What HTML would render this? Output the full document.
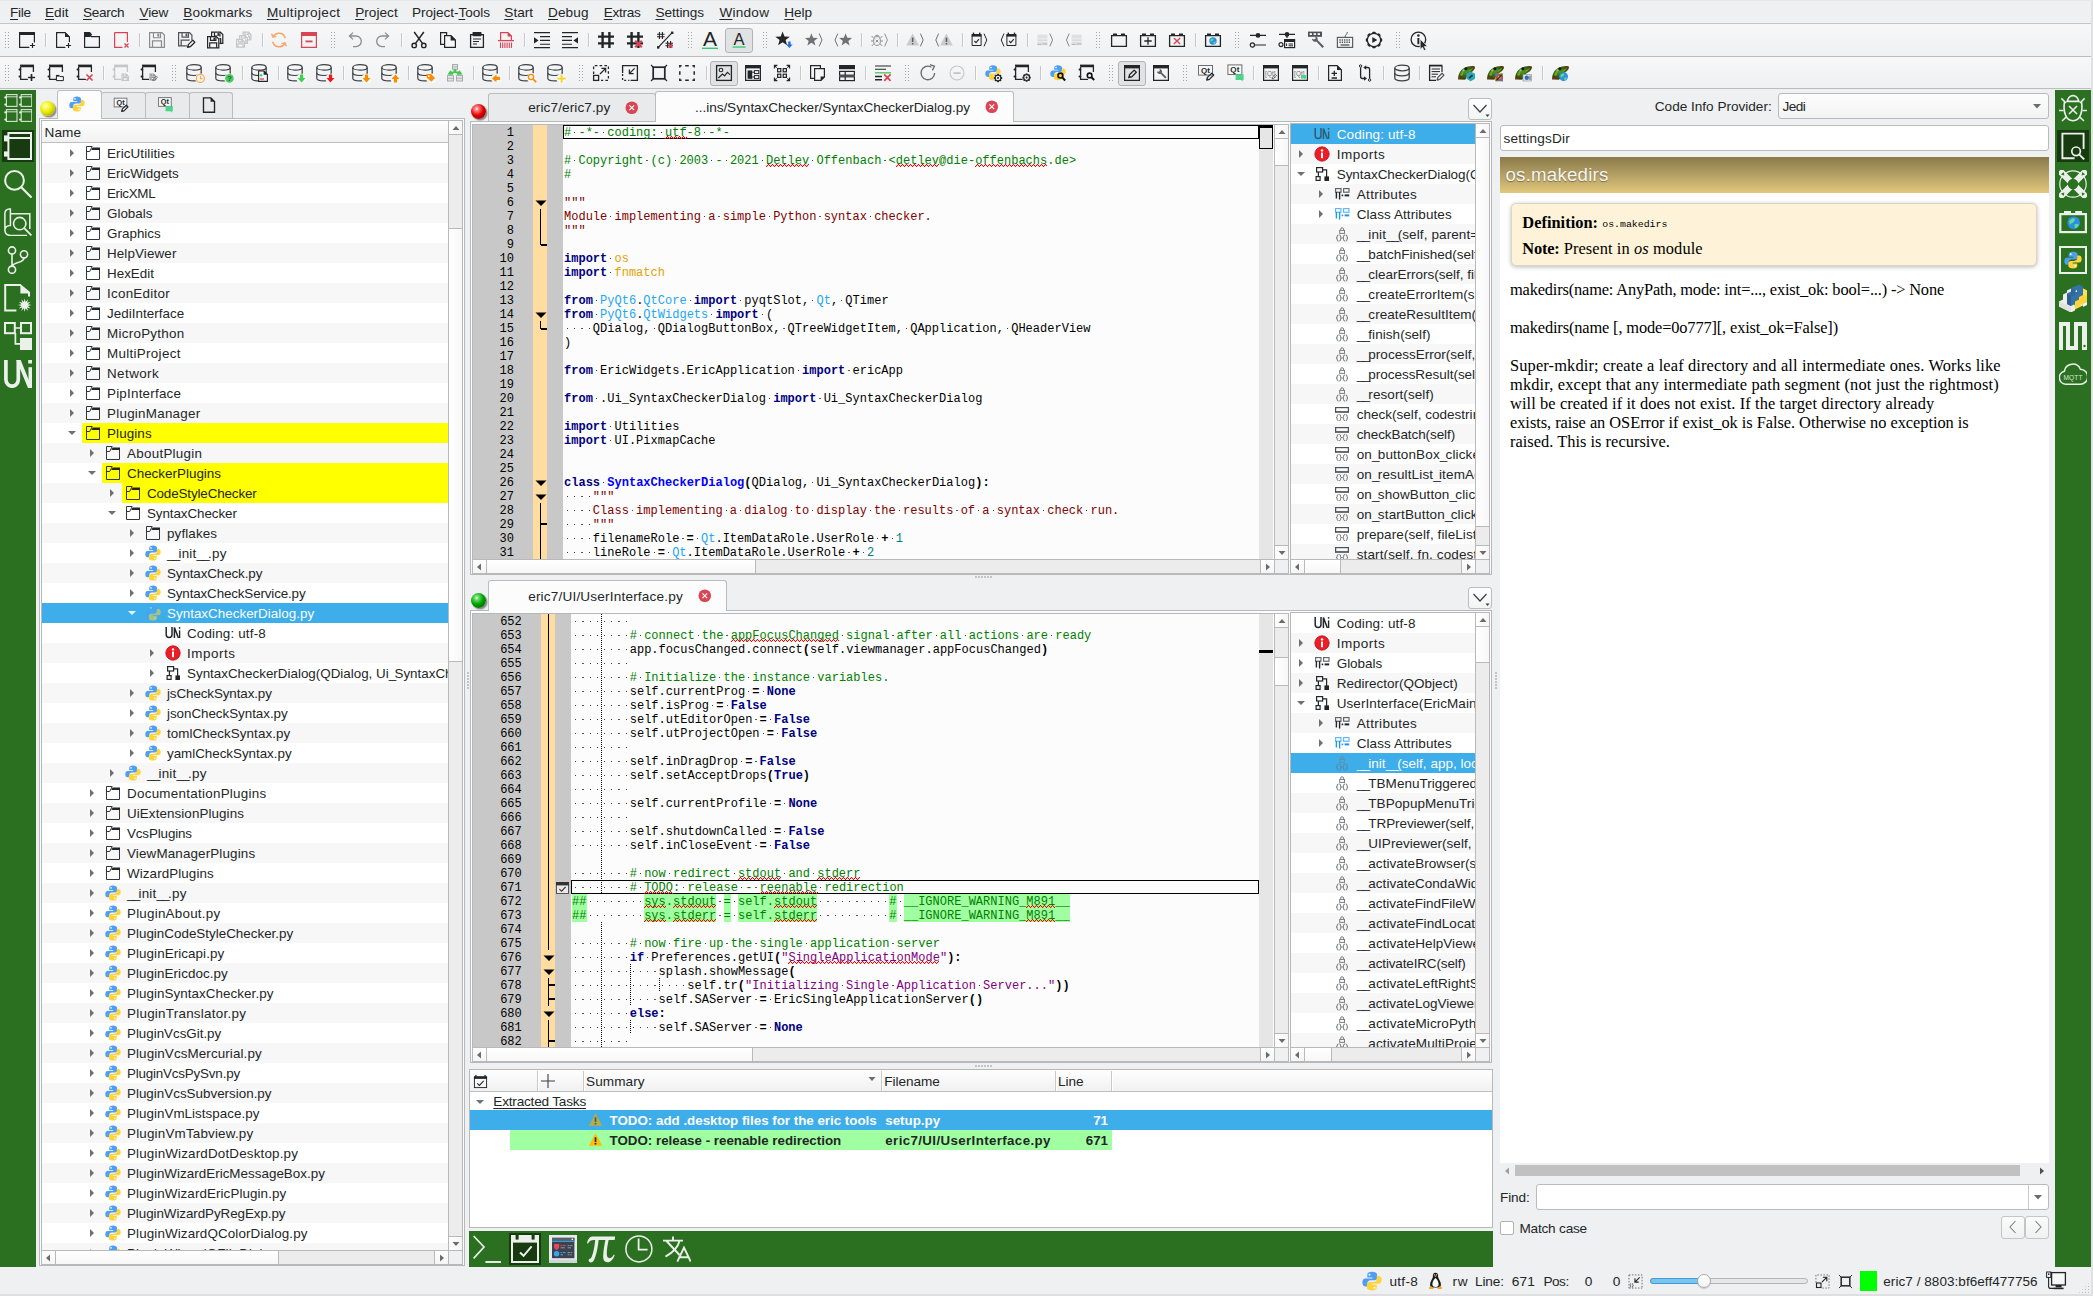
<!DOCTYPE html><html><head><meta charset="utf-8"><title>eric7</title><style>*{box-sizing:border-box;margin:0;padding:0}
html,body{width:2093px;height:1296px;overflow:hidden;background:#eff0f1}
body{position:relative;font-family:"Liberation Sans",sans-serif;font-size:13.33px;color:#232627;letter-spacing:.1px}
div,svg.i,span.a{position:absolute}
.t{white-space:pre;line-height:20px;height:20px;padding-top:.9px}
svg.i{overflow:visible}
.fr{border:1px solid #b9babb}
.mono{font-family:"Liberation Mono",monospace;font-size:12px;letter-spacing:.012px}
.cl{white-space:pre;height:14px;line-height:14px;padding-top:.9px;font-family:"Liberation Mono",monospace;font-size:12px;letter-spacing:.012px;color:#000}
.ln{white-space:pre;height:14px;line-height:14px;padding-top:.9px;font-family:"Liberation Mono",monospace;font-size:12px;letter-spacing:.012px;color:#000;text-align:right}
.c{color:#007f00}.k{color:#00007f;font-weight:bold}.d{color:#7f0000}.n{color:#007f7f}.s{color:#7f007f}
.q{color:#22a7f0}.o{color:#e5a100}.cn{color:#0000ff;font-weight:bold}.b{font-weight:bold}
.w{color:#777}
.hl{background:linear-gradient(#a0ffa0,#a0ffa0) no-repeat 0 0/100% 14px;padding-top:1.1px}
.alt{background:#f7f7f7}
.sel{background:#3daee9;color:#fcfcfc}
.yl{background:#ffff00}
.sbv{background:linear-gradient(90deg,#fdfdfd,#f4f4f4);border-left:1px solid #c4c4c4}
.sbh{background:linear-gradient(180deg,#fdfdfd,#f4f4f4);border-top:1px solid #c4c4c4}
.sl{background:#e8e8e8;border:1px solid #bcbcbc}
.ab{background:linear-gradient(180deg,#fff,#f3f3f3);border:1px solid #c4c4c4}
.hd{background:linear-gradient(180deg,#fefefe,#f1f1f1);border-bottom:1px solid #bfbfbf}
.sep{width:1px;height:16px;background:#cfd0d1}
.hdl{background-image:radial-gradient(circle at 1.5px 1.5px,#a4a5a6 .6px,transparent 1px);background-size:3px 3px}
.tab{border:1px solid #bcbdbe;border-bottom:none;border-radius:3px 3px 0 0;background:#e9eaeb}
.tab.on{background:#fcfcfc}
.gs{background:#2b7020}
.cl i{display:inline-block;width:7.212px;height:13px;vertical-align:top;background:radial-gradient(circle at 50% 49%,#3c3c3c .46px,transparent .86px)}
.u{letter-spacing:-1.7px}
u{text-decoration-thickness:1px;text-underline-offset:1.5px}
</style></head><body>
<svg width="0" height="0" style="position:absolute"><defs><radialGradient id="chg" cx=".45" cy=".42" r=".62"><stop offset="0" stop-color="#5c9623"/><stop offset=".5" stop-color="#366b1a"/><stop offset=".82" stop-color="#44400f"/><stop offset="1" stop-color="#6b4314"/></radialGradient><pattern id="zz" width="4" height="3" patternUnits="userSpaceOnUse"><path d="M0,2h1v1h-1zM1,1h1v1h-1zM2,0h1v1h-1zM3,1h1v1h-1z" fill="#ff0000"/><path d="M0,1h1v1h-1zM2,1h1v1h-1zM1,2h1v1h-1zM3,2h1v1h-1zM1,0h1v1h-1zM3,0h1v1h-1z" fill="#ff0000" opacity=".1"/></pattern><symbol id="newwin" viewBox="0 0 22 22"><path d="M3.6,3.6H18.4V18.4H3.6Z" fill="none" stroke="#232629" stroke-width="1.2" /><rect x="3" y="3" width="16" height="3" fill="#232629"/><circle cx="16.5" cy="16.5" r="3.6" fill="#f6f7f7"/><path d="M13.9,16.5H19.1M16.5,13.9V19.1" fill="none" stroke="#232629" stroke-width="1.2" /></symbol><symbol id="new" viewBox="0 0 22 22"><path d="M4.6,3.6H13L17.4,8V18.4H4.6Z" fill="none" stroke="#232629" stroke-width="1.2" /><path d="M13,3V8H18Z" fill="#232629"/><circle cx="16.5" cy="16.5" r="3.6" fill="#f6f7f7"/><path d="M13.9,16.5H19.1M16.5,13.9V19.1" fill="none" stroke="#232629" stroke-width="1.2" /></symbol><symbol id="open" viewBox="0 0 22 22"><path d="M3.6,5V18.4H18.4V7.6H10" fill="none" stroke="#232629" stroke-width="1.2" /><path d="M3,3H9L11,5.5L9.5,8H3Z" fill="#232629"/></symbol><symbol id="close" viewBox="0 0 22 22"><path d="M4.6,3.6H17.4V13M4.6,3.6V18.4H12.5" fill="none" stroke="#da4453" stroke-width="1.2" /><path d="M14.5,14.5L18.5,18.5M18.5,14.5L14.5,18.5" fill="none" stroke="#da4453" stroke-width="1.2" /></symbol><symbol id="save" viewBox="0 0 22 22"><path d="M3.6,3.6H16L18.4,6V18.4H3.6Z" fill="none" stroke="#8a8c8e" stroke-width="1.2" /><path d="M7.48,3.6V8.76H14.52V3.6" fill="none" stroke="#8a8c8e" stroke-width="1.2" /><rect x="11.32" y="4.5" width="1.92" height="3.2" fill="#8a8c8e"/><path d="M6.52,18.4V11.96H15.48V18.4" fill="none" stroke="#8a8c8e" stroke-width="1.2" /></symbol><symbol id="saveas" viewBox="0 0 22 22"><path d="M3.6,3.6H14.5L16.9,6V16.9H3.6Z" fill="none" stroke="#4d5257" stroke-width="1.2" /><path d="M7.0600000000000005,3.6V8.219999999999999H13.44V3.6" fill="none" stroke="#4d5257" stroke-width="1.2" /><rect x="10.54" y="4.5" width="1.74" height="2.9000000000000004" fill="#4d5257"/><path d="M6.1899999999999995,16.9V11.120000000000001H14.31V16.9" fill="none" stroke="#4d5257" stroke-width="1.2" /><circle cx="16" cy="15.5" r="4.2" fill="#f6f7f7"/><g transform="translate(11.5,10.5) scale(1.125)"><path d="M1,7L1.6,4.6L5.6,0.6L7.4,2.4L3.4,6.4Z" fill="none" stroke="#232629" stroke-width="1.1" stroke-linejoin="round"/><path d="M1,7L1.5,5L3,6.5Z" fill="#232629"/></g></symbol><symbol id="savecopy" viewBox="0 0 22 22"><path d="M7.6,3.2H16.4L18.799999999999997,5.6V14.4H7.6Z" fill="none" stroke="#232629" stroke-width="1.2" /><path d="M10.472000000000001,3.2V7.064H15.927999999999999V3.2" fill="none" stroke="#232629" stroke-width="1.2" /><rect x="13.448" y="4.1" width="1.488" height="2.4800000000000004" fill="#232629"/><path d="M9.728,14.4V9.544H16.672V14.4" fill="none" stroke="#232629" stroke-width="1.2" /><rect x="3" y="7" width="12.4" height="12.4" fill="#f6f7f7"/><path d="M3.6,7.6H12.4L14.8,10V18.799999999999997H3.6Z" fill="none" stroke="#232629" stroke-width="1.2" /><path d="M6.472,7.6V11.463999999999999H11.927999999999999V7.6" fill="none" stroke="#232629" stroke-width="1.2" /><rect x="9.448" y="8.5" width="1.488" height="2.4800000000000004" fill="#232629"/><path d="M5.728,18.799999999999997V13.944H12.672V18.799999999999997" fill="none" stroke="#232629" stroke-width="1.2" /></symbol><symbol id="saveall" viewBox="0 0 22 22"><path d="M10.1,3.2H15.5L17.9,5.6V11.0H10.1Z" fill="none" stroke="#c4c6c7" stroke-width="1.2" /><path d="M12.02,3.2V5.84H15.98V3.2" fill="none" stroke="#c4c6c7" stroke-width="1.2" /><rect x="14.18" y="4.1" width="1.08" height="1.8" fill="#c4c6c7"/><path d="M11.48,11.0V7.640000000000001H16.52V11.0" fill="none" stroke="#c4c6c7" stroke-width="1.2" /><rect x="6" y="6" width="9" height="9" fill="#f6f7f7"/><path d="M6.6,6.6H12L14.4,9V14.4H6.6Z" fill="none" stroke="#c4c6c7" stroke-width="1.2" /><path d="M8.52,6.6V9.24H12.48V6.6" fill="none" stroke="#c4c6c7" stroke-width="1.2" /><rect x="10.68" y="7.5" width="1.08" height="1.8" fill="#c4c6c7"/><path d="M7.98,14.4V11.040000000000001H13.02V14.4" fill="none" stroke="#c4c6c7" stroke-width="1.2" /><rect x="3" y="9.8" width="9" height="9" fill="#f6f7f7"/><path d="M3.6,10.4H9L11.4,12.8V18.2H3.6Z" fill="none" stroke="#c4c6c7" stroke-width="1.2" /><path d="M5.5200000000000005,10.4V13.040000000000001H9.48V10.4" fill="none" stroke="#c4c6c7" stroke-width="1.2" /><rect x="7.68" y="11.3" width="1.08" height="1.8" fill="#c4c6c7"/><path d="M4.98,18.2V14.840000000000002H10.02V18.2" fill="none" stroke="#c4c6c7" stroke-width="1.2" /></symbol><symbol id="reload" viewBox="0 0 22 22"><path d="M17.3,9.2A6.6,6.6 0 0 0 5.2,7.4M4.7,12.8A6.6,6.6 0 0 0 16.8,14.6" fill="none" stroke="#f5a56a" stroke-width="1.5" /><path d="M3.6,4.8L5,8.2L8.4,7.4" fill="none" stroke="#f5a56a" stroke-width="1.4" /><path d="M18.4,17.2L17,13.8L13.6,14.6" fill="none" stroke="#f5a56a" stroke-width="1.4" /></symbol><symbol id="winclose" viewBox="0 0 22 22"><path d="M3.6,3.6H18.4V18.4H3.6Z" fill="none" stroke="#da4453" stroke-width="1.2" /><rect x="3" y="3" width="16" height="4" fill="#da4453"/><rect x="7.5" y="11.5" width="7" height="1.8" fill="#da4453"/></symbol><symbol id="undo" viewBox="0 0 22 22"><path d="M6,7H12A5,5 0 0 1 12,17.6H9" fill="none" stroke="#8a8c8e" stroke-width="1.3" /><path d="M9,3.6L5.4,7L9,10.4" fill="none" stroke="#8a8c8e" stroke-width="1.3" /></symbol><symbol id="redo" viewBox="0 0 22 22"><path d="M16,7H10A5,5 0 0 0 10,17.6H13" fill="none" stroke="#8a8c8e" stroke-width="1.3" /><path d="M13,3.6L16.6,7L13,10.4" fill="none" stroke="#8a8c8e" stroke-width="1.3" /></symbol><symbol id="cut" viewBox="0 0 22 22"><path d="M6.2,3L14.6,14.6M15.8,3L7.4,14.6" fill="none" stroke="#232629" stroke-width="1.5" /><circle cx="6.2" cy="16.4" r="2.2" fill="none" stroke="#232629" stroke-width="1.4" /><circle cx="15.8" cy="16.4" r="2.2" fill="none" stroke="#232629" stroke-width="1.4" /></symbol><symbol id="copy" viewBox="0 0 22 22"><path d="M3.6,3.6H9.6V15.4H3.6Z" fill="none" stroke="#232629" stroke-width="1.2" /><path d="M7.6,6.6H14L18.4,11V18.4H7.6Z" fill="#f6f7f7" stroke="#232629" stroke-width="1.2"/><path d="M13.6,6V11.4H19Z" fill="#232629"/></symbol><symbol id="paste" viewBox="0 0 22 22"><path d="M4.6,5.6H17.4V18.4H4.6Z" fill="none" stroke="#232629" stroke-width="1.3" /><rect x="6.5" y="3" width="9" height="4.2" rx=".8" fill="#232629"/><path d="M7,10H15M7,12.5H13M7,15H11" fill="none" stroke="#232629" stroke-width="1" /></symbol><symbol id="clear" viewBox="0 0 22 22"><path d="M5.6,11V3.6H13L16.4,7V11" fill="none" stroke="#da4453" stroke-width="1.2" /><path d="M12.6,3V7.4H17Z" fill="#da4453"/><path d="M3,11.6H19" fill="none" stroke="#da4453" stroke-width="1.3" /><path d="M5.5,13.5V19M7.7,13.5V19M9.9,13.5V19M12.1,13.5V19M14.3,13.5V19M16.5,13.5V19" fill="none" stroke="#da4453" stroke-width="1.1" /></symbol><symbol id="indent" viewBox="0 0 22 22"><path d="M3,3.6H19M9,7.6H19M9,11.4H19M9,15.2H19M3,18.6H19" fill="none" stroke="#232629" stroke-width="1.1" /><path d="M3,8.2L7.6,11.4L3,14.6Z" fill="#232629"/></symbol><symbol id="unindent" viewBox="0 0 22 22"><path d="M3,3.6H19M3,7.6H13M3,11.4H13M3,15.2H13M3,18.6H19" fill="none" stroke="#232629" stroke-width="1.1" /><path d="M19,8.2L14.4,11.4L19,14.6Z" fill="#232629"/></symbol><symbol id="hash" viewBox="0 0 22 22"><path d="M7.6,3V19M14.4,3V19M3,7.6H19M3,14.4H19" fill="none" stroke="#232629" stroke-width="2.4" /></symbol><symbol id="unhash" viewBox="0 0 22 22"><path d="M7.6,3V19M14.4,3V19M3,7.6H19M3,14.4H19" fill="none" stroke="#232629" stroke-width="2.4" /><path d="M11.2,11.7L17.8,18.3M17.8,11.7L11.2,18.3" fill="none" stroke="#da4453" stroke-width="2.2" /></symbol><symbol id="toghash" viewBox="0 0 22 22"><path d="M5.4,3V10M8.4,3V10M3,5.2H10.6M3,7.8H10.6" fill="none" stroke="#232629" stroke-width="1.1" /><path d="M4,18.6L18.4,3.4" fill="none" stroke="#232629" stroke-width="1.2" /><rect x="3" y="17.2" width="2.4" height="2.4" fill="#232629"/><rect x="17" y="2.6" width="2.4" height="2.4" fill="#232629"/><path d="M13.6,12V19M16.6,12V19M11.4,14.2H19M11.4,16.8H19" fill="none" stroke="#232629" stroke-width="1.1" /><path d="M14.7,15.2L18.3,18.8M18.3,15.2L14.7,18.8" fill="none" stroke="#da4453" stroke-width="1.6" /></symbol><symbol id="Abig" viewBox="0 0 22 22"><text x="11" y="17" font-family="Liberation Sans" font-size="21" text-anchor="middle" fill="#232629">A</text><rect x="3" y="18.6" width="16" height="1.4" fill="#2ecc71"/></symbol><symbol id="Asmall" viewBox="0 0 22 22"><text x="11" y="16" font-family="Liberation Sans" font-size="16.5" text-anchor="middle" fill="#232629">A</text><rect x="4.5" y="17.4" width="13" height="1.3" fill="#2ecc71"/></symbol><symbol id="bmadd" viewBox="0 0 22 22"><polygon points="9.60,2.40 11.48,7.42 16.83,7.65 12.64,10.99 14.07,16.15 9.60,13.19 5.13,16.15 6.56,10.99 2.37,7.65 7.72,7.42" fill="#232629"/><path d="M15.2,12.6H17.6V15.4H19.6L16.4,19L13.2,15.4H15.2Z" fill="#1d6fe0"/></symbol><symbol id="bmnext" viewBox="0 0 22 22"><polygon points="8.40,4.20 10.08,8.69 14.87,8.90 11.12,11.88 12.40,16.50 8.40,13.86 4.40,16.50 5.68,11.88 1.93,8.90 6.72,8.69" fill="#6f7275"/><path d="M16.2,4.6L19,11L16.2,17.4" fill="none" stroke="#6f7275" stroke-width="1" /></symbol><symbol id="bmprev" viewBox="0 0 22 22"><polygon points="13.60,4.20 15.28,8.69 20.07,8.90 16.32,11.88 17.60,16.50 13.60,13.86 9.60,16.50 10.88,11.88 7.13,8.90 11.92,8.69" fill="#6f7275"/><path d="M5.8,4.6L3,11L5.8,17.4" fill="none" stroke="#6f7275" stroke-width="1" /></symbol><symbol id="bugnext" viewBox="0 0 22 22"><ellipse cx="9" cy="12" rx="3.4" ry="4.4" fill="none" stroke="#8e9092" stroke-width="1" /><path d="M6.6,7.8A2.6,2.6 0 0 1 11.4,7.8M3.6,7L5.9,9.4M14.4,7L12.1,9.4M3,12H5.5M12.5,12H15M3.8,17L5.9,14.8M14.2,17L12.1,14.8M7.7,10.7L10.3,13.3M10.3,10.7L7.7,13.3" fill="none" stroke="#8e9092" stroke-width="1" /><path d="M16.6,4.6L19.4,11L16.6,17.4" fill="none" stroke="#8e9092" stroke-width="1" /></symbol><symbol id="warnnext" viewBox="0 0 22 22"><path d="M8.6,4.6L15,16.4H2.2Z" fill="#c9cbcc"/><rect x="7.9" y="8.6" width="1.5" height="4.4" fill="#5a5e61"/><rect x="7.9" y="14" width="1.5" height="1.4" fill="#5a5e61"/><path d="M16.4,4.6L19.2,11L16.4,17.4" fill="none" stroke="#6f7275" stroke-width="1" /></symbol><symbol id="warnprev" viewBox="0 0 22 22"><path d="M13.4,4.6L19.8,16.4H7Z" fill="#c9cbcc"/><rect x="12.7" y="8.6" width="1.5" height="4.4" fill="#5a5e61"/><rect x="12.7" y="14" width="1.5" height="1.4" fill="#5a5e61"/><path d="M5.6,4.6L2.8,11L5.6,17.4" fill="none" stroke="#6f7275" stroke-width="1" /></symbol><symbol id="tasknext" viewBox="0 0 22 22"><path d="M4.1,6.5H13.1V16.5H4.1Z" fill="none" stroke="#232629" stroke-width="1" /><rect x="3.6" y="5" width="10" height="2.6" fill="#232629"/><rect x="4.8" y="3.6" width="1.4" height="2" fill="#232629"/><rect x="11.0" y="3.6" width="1.4" height="2" fill="#232629"/><path d="M6.4,12L8.0,13.6L11.0,10.2" fill="none" stroke="#232629" stroke-width="1.1" /><path d="M16,4.6L18.8,11L16,17.4" fill="none" stroke="#232629" stroke-width="1" /></symbol><symbol id="taskprev" viewBox="0 0 22 22"><path d="M8.9,6.5H17.9V16.5H8.9Z" fill="none" stroke="#232629" stroke-width="1" /><rect x="8.4" y="5" width="10" height="2.6" fill="#232629"/><rect x="9.6" y="3.6" width="1.4" height="2" fill="#232629"/><rect x="15.8" y="3.6" width="1.4" height="2" fill="#232629"/><path d="M11.2,12L12.8,13.6L15.8,10.2" fill="none" stroke="#232629" stroke-width="1.1" /><path d="M6,4.6L3.2,11L6,17.4" fill="none" stroke="#232629" stroke-width="1" /></symbol><symbol id="chgnext" viewBox="0 0 22 22"><rect x="3.4" y="5.6" width="10" height="4" fill="#dfe0e1"/><rect x="3.4" y="10.6" width="10" height="1" fill="#c9cbcc"/><rect x="3.4" y="12.6" width="10" height="3.6" fill="#dfe0e1"/><path d="M3.4,15.4H7.4M8.4,15H13.4" stroke="#b4b6b7" stroke-width="1"/><path d="M15.8,4.6L18.6,11L15.8,17.4" fill="none" stroke="#85878a" stroke-width="1" /></symbol><symbol id="chgprev" viewBox="0 0 22 22"><rect x="8.6" y="5.6" width="10" height="4" fill="#dfe0e1"/><rect x="8.6" y="10.6" width="10" height="1" fill="#c9cbcc"/><rect x="8.6" y="12.6" width="10" height="3.6" fill="#dfe0e1"/><path d="M8.6,15.4H12.6M13.6,15H18.6" stroke="#b4b6b7" stroke-width="1"/><path d="M6.2,4.6L3.4,11L6.2,17.4" fill="none" stroke="#85878a" stroke-width="1" /></symbol><symbol id="bwin" viewBox="0 0 22 22"><path d="M3.6,6.6H18.4V17.4H3.6Z" fill="none" stroke="#232629" stroke-width="1.3" /><rect x="5" y="4.5" width="4" height="2" fill="#232629"/><rect x="13" y="4.5" width="4" height="2" fill="#232629"/></symbol><symbol id="bwinadd" viewBox="0 0 22 22"><path d="M3.6,6.6H18.4V17.4H3.6Z" fill="none" stroke="#232629" stroke-width="1.3" /><rect x="5" y="4.5" width="4" height="2" fill="#232629"/><rect x="13" y="4.5" width="4" height="2" fill="#232629"/><path d="M7.3,12H14.7M11,8.3V15.7" fill="none" stroke="#232629" stroke-width="1.3" /></symbol><symbol id="bwindel" viewBox="0 0 22 22"><path d="M3.6,6.6H18.4V17.4H3.6Z" fill="none" stroke="#232629" stroke-width="1.3" /><rect x="5" y="4.5" width="4" height="2" fill="#232629"/><rect x="13" y="4.5" width="4" height="2" fill="#232629"/><path d="M7.9,8.9L14.1,15.1M14.1,8.9L7.9,15.1" fill="none" stroke="#da4453" stroke-width="1.4" /></symbol><symbol id="bwinglobe" viewBox="0 0 22 22"><path d="M3.6,6.6H18.4V17.4H3.6Z" fill="none" stroke="#232629" stroke-width="1.3" /><rect x="5" y="4.5" width="4" height="2" fill="#232629"/><rect x="13" y="4.5" width="4" height="2" fill="#232629"/><circle cx="11" cy="12" r="3.7" fill="#2d8de8"/><path d="M8.41,10.89q1.85,-2.22 3.33,-1.11q-0.37000000000000005,2.22 -2.22,2.59q-0.7400000000000001,1.85 -1.11,-1.4800000000000002Z" fill="#5fdc8b"/><path d="M11.37,13.11q1.85,-1.11 2.59,0q-0.7400000000000001,1.85 -2.22,1.85Z" fill="#5fdc8b"/></symbol><symbol id="conf" viewBox="0 0 22 22"><path d="M3,6.4H19M8,16H19" fill="none" stroke="#232629" stroke-width="1.2" /><circle cx="11" cy="6.4" r="2.4" fill="#232629"/><circle cx="5.4" cy="16" r="2.1" fill="#f6f7f7" stroke="#232629" stroke-width="1.2"/></symbol><symbol id="conf2" viewBox="0 0 22 22"><path d="M3,5.4H19M11,5.4V9" fill="none" stroke="#232629" stroke-width="1.2" /><circle cx="11" cy="5.4" r="2.3" fill="#232629"/><circle cx="5" cy="15.6" r="2" fill="#f6f7f7" stroke="#232629" stroke-width="1.2"/><rect x="8.6" y="10.6" width="10" height="8" fill="#f6f7f7" stroke="#232629" stroke-width="1.2"/><rect x="8.6" y="10.6" width="10" height="2.4" fill="#232629"/><path d="M10.6,14.4V17M12.6,15H17M12.6,16.8H17" fill="none" stroke="#232629" stroke-width="1" /></symbol><symbol id="conf3" viewBox="0 0 22 22"><rect x="3" y="2.6" width="14" height="5.2" fill="#4d5257"/><rect x="4.6" y="4.2" width="2.4" height="1.8" fill="#f6f7f7"/><rect x="8.6" y="4.2" width="2.4" height="1.8" fill="#f6f7f7"/><rect x="12.6" y="4.2" width="2.4" height="1.8" fill="#f6f7f7"/><path d="M7,9.6A3,3 0 0 0 11.4,12.4L17.4,19L19,17.4L12.6,11A3,3 0 0 0 10.4,7.4L10.6,9.8L8.8,10.6Z" fill="#5a5e61"/></symbol><symbol id="kbd" viewBox="0 0 22 22"><rect x="3.4" y="8.4" width="15.2" height="10" fill="#eef" fill-opacity="0" stroke="#5a5e61" stroke-width="1.2"/><path d="M5.4,11H16.6M5.4,13.2H16.6" stroke="#5a5e61" stroke-width="1.4" stroke-dasharray="1.4 .9"/><path d="M6.6,16H15.4" stroke="#5a5e61" stroke-width="1.4"/><path d="M11,8.4C11,5.6 13,6 13.4,3" fill="none" stroke="#5a5e61" stroke-width="1" /></symbol><symbol id="gearplay" viewBox="0 0 22 22"><g><rect x="9.3" y="2.8" width="3.4" height="3" rx=".8" fill="#232629" transform="rotate(0 11 11)"/><rect x="9.3" y="2.8" width="3.4" height="3" rx=".8" fill="#232629" transform="rotate(45 11 11)"/><rect x="9.3" y="2.8" width="3.4" height="3" rx=".8" fill="#232629" transform="rotate(90 11 11)"/><rect x="9.3" y="2.8" width="3.4" height="3" rx=".8" fill="#232629" transform="rotate(135 11 11)"/><rect x="9.3" y="2.8" width="3.4" height="3" rx=".8" fill="#232629" transform="rotate(180 11 11)"/><rect x="9.3" y="2.8" width="3.4" height="3" rx=".8" fill="#232629" transform="rotate(225 11 11)"/><rect x="9.3" y="2.8" width="3.4" height="3" rx=".8" fill="#232629" transform="rotate(270 11 11)"/><rect x="9.3" y="2.8" width="3.4" height="3" rx=".8" fill="#232629" transform="rotate(315 11 11)"/><circle cx="11" cy="11" r="6.7" fill="#f6f7f7" stroke="#232629" stroke-width="1.3"/><path d="M9.3,7.9L14.3,11L9.3,14.1Z" fill="#232629"/></g></symbol><symbol id="whats" viewBox="0 0 22 22"><circle cx="10.4" cy="10.4" r="7.3" fill="none" stroke="#232629" stroke-width="1.3" /><rect x="9.4" y="9" width="2" height="6.2" fill="#232629"/><circle cx="10.4" cy="6.5" r="1.25" fill="#232629"/><path d="M12.2,10.2V20.4L14.5,18.2L16.1,21.6L17.9,20.8L16.3,17.5H19.6Z" fill="#232629" stroke="#f6f7f7" stroke-width=".7" stroke-linejoin="round"/></symbol><symbol id="pnew" viewBox="0 0 22 22"><path d="M4.6,4.6H17.4M4.6,4.6V17.4H12" fill="none" stroke="#232629" stroke-width="1.3" /><path d="M4,3.4H18" fill="none" stroke="#232629" stroke-width="1.6" /><path d="M17.4,4V10" fill="none" stroke="#232629" stroke-width="1.3" /><rect x="2.6" y="6.5" width="2.6" height="2" rx=".8" fill="#232629"/><rect x="2.6" y="13.5" width="2.6" height="2" rx=".8" fill="#232629"/><circle cx="15.5" cy="15.5" r="4.2" fill="#f6f7f7"/><path d="M11.9,15.5H19.1M15.5,11.9V19.1" fill="none" stroke="#232629" stroke-width="1.7" /></symbol><symbol id="popen" viewBox="0 0 22 22"><path d="M4.6,4.6H17.4M4.6,4.6V17.4H12" fill="none" stroke="#232629" stroke-width="1.3" /><path d="M4,3.4H18" fill="none" stroke="#232629" stroke-width="1.6" /><path d="M17.4,4V10" fill="none" stroke="#232629" stroke-width="1.3" /><rect x="2.6" y="6.5" width="2.6" height="2" rx=".8" fill="#232629"/><rect x="2.6" y="13.5" width="2.6" height="2" rx=".8" fill="#232629"/><path d="M11.4,13.4H14L15,14.6H18.4V18.6H11.4Z" fill="#f6f7f7" stroke="#232629" stroke-width="1"/><rect x="11.4" y="13" width="3" height="1.6" fill="#232629"/></symbol><symbol id="pclose" viewBox="0 0 22 22"><path d="M4.6,4.6H17.4M4.6,4.6V17.4H12" fill="none" stroke="#232629" stroke-width="1.3" /><path d="M4,3.4H18" fill="none" stroke="#232629" stroke-width="1.6" /><path d="M17.4,4V10" fill="none" stroke="#232629" stroke-width="1.3" /><rect x="2.6" y="6.5" width="2.6" height="2" rx=".8" fill="#232629"/><rect x="2.6" y="13.5" width="2.6" height="2" rx=".8" fill="#232629"/><circle cx="15.5" cy="15.5" r="4.2" fill="#f6f7f7"/><path d="M12.5,12.5L18.5,18.5M18.5,12.5L12.5,18.5" fill="none" stroke="#da4453" stroke-width="1.7" /></symbol><symbol id="psave" viewBox="0 0 22 22"><path d="M4.6,4.6H17.4M4.6,4.6V17.4H12" fill="none" stroke="#c4c6c7" stroke-width="1.3" /><path d="M4,3.4H18" fill="none" stroke="#c4c6c7" stroke-width="1.6" /><path d="M17.4,4V10" fill="none" stroke="#c4c6c7" stroke-width="1.3" /><rect x="2.6" y="6.5" width="2.6" height="2" rx=".8" fill="#c4c6c7"/><rect x="2.6" y="13.5" width="2.6" height="2" rx=".8" fill="#c4c6c7"/><rect x="11" y="11" width="8" height="8" fill="#f6f7f7"/><path d="M12.0,12.0H16.0L18.4,14.4V18.4H12.0Z" fill="none" stroke="#c4c6c7" stroke-width="1.2" /><path d="M13.528,12.0V14.136H16.872V12.0" fill="none" stroke="#c4c6c7" stroke-width="1.2" /><rect x="15.352" y="12.9" width="0.9119999999999999" height="1.52" fill="#c4c6c7"/><path d="M13.072000000000001,18.4V15.656H17.328V18.4" fill="none" stroke="#c4c6c7" stroke-width="1.2" /></symbol><symbol id="psaveas" viewBox="0 0 22 22"><path d="M4.6,4.6H17.4M4.6,4.6V17.4H12" fill="none" stroke="#232629" stroke-width="1.3" /><path d="M4,3.4H18" fill="none" stroke="#232629" stroke-width="1.6" /><path d="M17.4,4V10" fill="none" stroke="#232629" stroke-width="1.3" /><rect x="2.6" y="6.5" width="2.6" height="2" rx=".8" fill="#232629"/><rect x="2.6" y="13.5" width="2.6" height="2" rx=".8" fill="#232629"/><rect x="11" y="11" width="9" height="9" fill="#f6f7f7"/><path d="M12.0,12.0H15.399999999999999L17.799999999999997,14.4V17.799999999999997H12.0Z" fill="none" stroke="#9a9c9e" stroke-width="1.2" /><path d="M13.360000000000001,12.0V13.92H16.44V12.0" fill="none" stroke="#9a9c9e" stroke-width="1.2" /><rect x="15.040000000000001" y="12.9" width="0.84" height="1.4000000000000001" fill="#9a9c9e"/><path d="M12.940000000000001,17.799999999999997V15.32H16.86V17.799999999999997" fill="none" stroke="#9a9c9e" stroke-width="1.2" /><g transform="translate(14,13.5) scale(0.75)"><path d="M1,7L1.6,4.6L5.6,0.6L7.4,2.4L3.4,6.4Z" fill="none" stroke="#6b6f72" stroke-width="1.1" stroke-linejoin="round"/><path d="M1,7L1.5,5L3,6.5Z" fill="#6b6f72"/></g></symbol><symbol id="dblog" viewBox="0 0 22 22"><ellipse cx="10" cy="5.4" rx="7.2" ry="2.7" fill="none" stroke="#3b4045" stroke-width="1.2" /><path d="M2.8,5.4V16.2A7.2,2.7 0 0 0 17.2,16.2V5.4" fill="none" stroke="#3b4045" stroke-width="1.2" /><path d="M2.8,10.8A7.2,2.7 0 0 0 17.2,10.8" fill="none" stroke="#3b4045" stroke-width="1.2" /><circle cx="16.4" cy="16.4" r="5.2" fill="#f6f7f7"/><circle cx="16.4" cy="16.4" r="4" fill="none" stroke="#f9a94b" stroke-width="1.2" /><path d="M16.4,13.8V16.6H18.6" fill="none" stroke="#f9a94b" stroke-width="1.1" /></symbol><symbol id="dbhelp" viewBox="0 0 22 22"><ellipse cx="10" cy="5.4" rx="7.2" ry="2.7" fill="none" stroke="#3b4045" stroke-width="1.2" /><path d="M2.8,5.4V16.2A7.2,2.7 0 0 0 17.2,16.2V5.4" fill="none" stroke="#3b4045" stroke-width="1.2" /><path d="M2.8,10.8A7.2,2.7 0 0 0 17.2,10.8" fill="none" stroke="#3b4045" stroke-width="1.2" /><circle cx="16.4" cy="16.4" r="5.2" fill="#f6f7f7"/><circle cx="16.4" cy="16.4" r="4.3" fill="#4ccb62"/><text x="16.4" y="19.3" font-family="Liberation Sans" font-weight="bold" font-size="8" text-anchor="middle" fill="#1b5e2a">?</text></symbol><symbol id="dbdoc" viewBox="0 0 22 22"><ellipse cx="10" cy="5.4" rx="7.2" ry="2.7" fill="none" stroke="#3b4045" stroke-width="1.2" /><path d="M2.8,5.4V16.2A7.2,2.7 0 0 0 17.2,16.2V5.4" fill="none" stroke="#3b4045" stroke-width="1.2" /><path d="M2.8,10.8A7.2,2.7 0 0 0 17.2,10.8" fill="none" stroke="#3b4045" stroke-width="1.2" /><path d="M9.6,9H15L18.4,12.4V19.4H9.6Z" fill="#f6f7f7" stroke="#232629" stroke-width="1.1"/><path d="M14.6,8.6V12.8H19Z" fill="#232629"/><path d="M12,12V14.6M10.7,13.3H13.3" fill="none" stroke="#2ecc71" stroke-width="1.2" /><path d="M10.8,17H15" fill="none" stroke="#da4453" stroke-width="1.3" /></symbol><symbol id="dbpull" viewBox="0 0 22 22"><ellipse cx="10" cy="5.4" rx="7.2" ry="2.7" fill="none" stroke="#3b4045" stroke-width="1.2" /><path d="M2.8,5.4V16.2A7.2,2.7 0 0 0 17.2,16.2V5.4" fill="none" stroke="#3b4045" stroke-width="1.2" /><path d="M2.8,10.8A7.2,2.7 0 0 0 17.2,10.8" fill="none" stroke="#3b4045" stroke-width="1.2" /><circle cx="16.5" cy="16.6" r="5" fill="#f6f7f7"/><path d="M14.9,12.399999999999999H18.1V15.899999999999999H20.5L16.5,20.4L12.5,15.899999999999999H14.9Z" fill="#3bd14b"/></symbol><symbol id="dbpullr" viewBox="0 0 22 22"><ellipse cx="10" cy="5.4" rx="7.2" ry="2.7" fill="none" stroke="#3b4045" stroke-width="1.2" /><path d="M2.8,5.4V16.2A7.2,2.7 0 0 0 17.2,16.2V5.4" fill="none" stroke="#3b4045" stroke-width="1.2" /><path d="M2.8,10.8A7.2,2.7 0 0 0 17.2,10.8" fill="none" stroke="#3b4045" stroke-width="1.2" /><circle cx="16.5" cy="16.6" r="5" fill="#f6f7f7"/><path d="M14.9,12.399999999999999H18.1V15.899999999999999H20.5L16.5,20.4L12.5,15.899999999999999H14.9Z" fill="#f21616"/></symbol><symbol id="dbin" viewBox="0 0 22 22"><ellipse cx="10" cy="5.4" rx="7.2" ry="2.7" fill="none" stroke="#3b4045" stroke-width="1.2" /><path d="M2.8,5.4V16.2A7.2,2.7 0 0 0 17.2,16.2V5.4" fill="none" stroke="#3b4045" stroke-width="1.2" /><path d="M2.8,10.8A7.2,2.7 0 0 0 17.2,10.8" fill="none" stroke="#3b4045" stroke-width="1.2" /><circle cx="16.5" cy="16.6" r="5" fill="#f6f7f7"/><path d="M14.9,12.399999999999999H18.1V15.899999999999999H20.5L16.5,20.4L12.5,15.899999999999999H14.9Z" fill="#fb8c00"/></symbol><symbol id="dbout" viewBox="0 0 22 22"><ellipse cx="10" cy="5.4" rx="7.2" ry="2.7" fill="none" stroke="#3b4045" stroke-width="1.2" /><path d="M2.8,5.4V16.2A7.2,2.7 0 0 0 17.2,16.2V5.4" fill="none" stroke="#3b4045" stroke-width="1.2" /><path d="M2.8,10.8A7.2,2.7 0 0 0 17.2,10.8" fill="none" stroke="#3b4045" stroke-width="1.2" /><circle cx="16.5" cy="16.6" r="5" fill="#f6f7f7"/><path d="M14.9,20.4H18.1V16.9H20.5L16.5,12.399999999999999L12.5,16.9H14.9Z" fill="#fb8c00"/></symbol><symbol id="dbtag" viewBox="0 0 22 22"><ellipse cx="10" cy="5.4" rx="7.2" ry="2.7" fill="none" stroke="#3b4045" stroke-width="1.2" /><path d="M2.8,5.4V16.2A7.2,2.7 0 0 0 17.2,16.2V5.4" fill="none" stroke="#3b4045" stroke-width="1.2" /><path d="M2.8,10.8A7.2,2.7 0 0 0 17.2,10.8" fill="none" stroke="#3b4045" stroke-width="1.2" /><circle cx="16.4" cy="16.4" r="5.2" fill="#f6f7f7"/><path d="M11.6,12H16L20,16L16.4,19.8L11.6,15.4Z" fill="#fb8c00"/><circle cx="13.8" cy="14.2" r=".9" fill="#fff"/></symbol><symbol id="merge" viewBox="0 0 22 22"><rect x="8.4" y="2.6" width="5.2" height="4.6" fill="#e3e4e5" stroke="#9a9c9e" stroke-width=".8"/><path d="M8.4,4.9H13.6" stroke="#9a9c9e" stroke-width=".7"/><path d="M9.6,7.2H12.4V9.6H15.4L17.2,12.6H13.4L12.2,11L9.8,11L8.6,12.6H4.8L6.6,9.6H9.6Z" fill="#41c94e"/><path d="M3.4,12.6L6.4,8.2L9,12.6ZM13,12.6L15.6,8.2L18.6,12.6Z" fill="#41c94e"/><rect x="3.4" y="13.6" width="6" height="5.4" fill="#e3e4e5" stroke="#9a9c9e" stroke-width=".8"/><path d="M3.4,16.3H9.4" stroke="#9a9c9e" stroke-width=".7"/><rect x="12.6" y="13.6" width="6" height="5.4" fill="#e3e4e5" stroke="#9a9c9e" stroke-width=".8"/><path d="M12.6,16.3H18.6" stroke="#9a9c9e" stroke-width=".7"/></symbol><symbol id="dbback" viewBox="0 0 22 22"><ellipse cx="10" cy="5.4" rx="7.2" ry="2.7" fill="none" stroke="#3b4045" stroke-width="1.2" /><path d="M2.8,5.4V16.2A7.2,2.7 0 0 0 17.2,16.2V5.4" fill="none" stroke="#3b4045" stroke-width="1.2" /><path d="M2.8,10.8A7.2,2.7 0 0 0 17.2,10.8" fill="none" stroke="#3b4045" stroke-width="1.2" /><circle cx="16.4" cy="16.4" r="5.2" fill="#f6f7f7"/><path d="M20,14.799999999999999V18.0H16.5V20.4L12,16.4L16.5,12.399999999999999V14.799999999999999Z" fill="#fb8c00"/></symbol><symbol id="dbfind" viewBox="0 0 22 22"><ellipse cx="10" cy="5.4" rx="7.2" ry="2.7" fill="none" stroke="#3b4045" stroke-width="1.2" /><path d="M2.8,5.4V16.2A7.2,2.7 0 0 0 17.2,16.2V5.4" fill="none" stroke="#3b4045" stroke-width="1.2" /><path d="M2.8,10.8A7.2,2.7 0 0 0 17.2,10.8" fill="none" stroke="#3b4045" stroke-width="1.2" /><circle cx="16" cy="16" r="5" fill="#f6f7f7"/><circle cx="15" cy="15" r="2.6" fill="none" stroke="#fb8c00" stroke-width="1.3" /><path d="M16.82,16.82L20.2,20.2" fill="none" stroke="#fb8c00" stroke-width="1.7000000000000002" /></symbol><symbol id="dbadd" viewBox="0 0 22 22"><ellipse cx="10" cy="5.4" rx="7.2" ry="2.7" fill="none" stroke="#3b4045" stroke-width="1.2" /><path d="M2.8,5.4V16.2A7.2,2.7 0 0 0 17.2,16.2V5.4" fill="none" stroke="#3b4045" stroke-width="1.2" /><path d="M2.8,10.8A7.2,2.7 0 0 0 17.2,10.8" fill="none" stroke="#3b4045" stroke-width="1.2" /><circle cx="16.6" cy="16.6" r="5.2" fill="#f6f7f7"/><path d="M12.400000000000002,16.6H20.8M16.6,12.400000000000002V20.8" fill="none" stroke="#f9d423" stroke-width="1.8" /></symbol><symbol id="zin" viewBox="0 0 22 22"><path d="M3.6,12V3.6H18.4V18.4H11" fill="none" stroke="#232629" stroke-width="1.3" stroke-dasharray='2.6 2.2'/><rect x="3.6" y="13.4" width="5" height="5" fill="none" stroke="#232629" stroke-width="1.3" /><path d="M10,12L15.4,6.6M11.4,6.4H15.6V10.6" fill="none" stroke="#232629" stroke-width="1.3" /></symbol><symbol id="zout" viewBox="0 0 22 22"><path d="M3.6,11V3.6H18.4V18.4H11.6" fill="none" stroke="#232629" stroke-width="1.3" /><path d="M3.6,12V18.4H10.4" fill="none" stroke="#232629" stroke-width="1.3" stroke-dasharray='2 2'/><path d="M15.6,6.4L10.6,11.4M10.4,7.4V11.6H14.6" fill="none" stroke="#232629" stroke-width="1.3" /></symbol><symbol id="zreset" viewBox="0 0 22 22"><rect x="5.2" y="5.2" width="11.6" height="11.6" fill="none" stroke="#232629" stroke-width="1.7" /><path d="M3,3L6,6M19,3L16,6M3,19L6,16M19,19L16,16" fill="none" stroke="#232629" stroke-width="1.2" /></symbol><symbol id="zfit" viewBox="0 0 22 22"><rect x="3.8" y="3.8" width="14.4" height="14.4" fill="none" stroke="#232629" stroke-width="1.5" stroke-dasharray='3.6 3.6' stroke-dashoffset='1.8'/></symbol><symbol id="image" viewBox="0 0 22 22"><rect x="3.6" y="3.6" width="14.8" height="14.8" fill="none" stroke="#232629" stroke-width="1.3" /><circle cx="8" cy="8" r="1.8" fill="none" stroke="#232629" stroke-width="1.1" /><path d="M5.4,16L9.4,12L11.6,13.8L14.4,10.4L17,12.6" fill="none" stroke="#232629" stroke-width="1.2" /></symbol><symbol id="appdiag" viewBox="0 0 22 22"><path d="M3.6,3.6H18.4V18.4H3.6Z" fill="none" stroke="#232629" stroke-width="1.2" /><rect x="3" y="3" width="16" height="3.4" fill="#232629"/><rect x="5.6" y="8.4" width="4.6" height="8.4" fill="#232629"/><rect x="12.4" y="8.6" width="4.4" height="3" fill="none" stroke="#232629" stroke-width="1" /><rect x="12.4" y="13.6" width="4.4" height="3" fill="none" stroke="#232629" stroke-width="1" /><path d="M10.2,10.2H12.4M10.2,15H12.4" fill="none" stroke="#232629" stroke-width="1" /></symbol><symbol id="grid4" viewBox="0 0 22 22"><rect x="6.6" y="6.6" width="3.2" height="3.2" fill="none" stroke="#232629" stroke-width="1.2" /><rect x="12.2" y="6.6" width="3.2" height="3.2" fill="none" stroke="#232629" stroke-width="1.2" /><rect x="6.6" y="12.2" width="3.2" height="3.2" fill="none" stroke="#232629" stroke-width="1.2" /><rect x="12.2" y="12.2" width="3.2" height="3.2" fill="none" stroke="#232629" stroke-width="1.2" /><path d="M3.4,6.4V3.4H6.4M15.6,3.4H18.6V6.4M18.6,15.6V18.6H15.6M6.4,18.6H3.4V15.6M3.6,3.6L5.6,5.6M18.4,3.6L16.4,5.6M3.6,18.4L5.6,16.4M18.4,18.4L16.4,16.4" fill="none" stroke="#232629" stroke-width="1.1" /></symbol><symbol id="twodocs" viewBox="0 0 22 22"><path d="M3.6,3.6H13.4V16.4H3.6Z" fill="none" stroke="#232629" stroke-width="1.2" /><path d="M7.6,6.6H17.4V15L14,18.4H7.6Z" fill="#f6f7f7" stroke="#232629" stroke-width="1.2"/><path d="M13.6,19V14.6H18Z" fill="#232629"/></symbol><symbol id="table" viewBox="0 0 22 22"><rect x="3" y="3" width="16" height="4.2" fill="#232629"/><rect x="3.6" y="9.4" width="14.8" height="3.8" fill="none" stroke="#232629" stroke-width="1.2" /><rect x="3.6" y="14.8" width="14.8" height="3.8" fill="none" stroke="#232629" stroke-width="1.2" /><path d="M9.2,9.4V13.2M9.2,14.8V18.6" fill="none" stroke="#232629" stroke-width="1.2" /></symbol><symbol id="cleartasks" viewBox="0 0 22 22"><path d="M3,4H19M3,7.2H14" fill="none" stroke="#232629" stroke-width="1.1" /><path d="M3,10.8H19" fill="none" stroke="#41c94e" stroke-width="1.3" /><path d="M3,14.4H10M3,17.8H10" fill="none" stroke="#232629" stroke-width="1.5" /><path d="M12.2,12.399999999999999L18.6,18.8M18.6,12.399999999999999L12.2,18.8" fill="none" stroke="#da4453" stroke-width="1.7" /></symbol><symbol id="restart" viewBox="0 0 22 22"><path d="M17.6,11A6.8,6.8 0 1 1 14.4,5.2" fill="none" stroke="#6b6f72" stroke-width="1.4" /><path d="M13,2.6L17.4,4.2L15.4,8.4" fill="none" stroke="#6b6f72" stroke-width="1.4" /></symbol><symbol id="stop" viewBox="0 0 22 22"><circle cx="11" cy="11" r="7" fill="none" stroke="#c4c6c7" stroke-width="1.1" /><rect x="7.4" y="10.2" width="7.2" height="1.8" fill="#c4c6c7"/></symbol><symbol id="pygear" viewBox="0 0 22 22"><g transform="translate(3,2.6) scale(1.0)"><path d="M7.9,0.6C5.6,0.6 4.2,1.5 4.2,3V5.2H8.2V6H2.6C1,6 0.3,7.6 0.3,9.2C0.3,10.9 1,12.3 2.6,12.3H4.2V9.9C4.2,8.5 5.4,7.4 6.8,7.4H10.2C11.4,7.4 12.1,6.5 12.1,5.4V3C12.1,1.5 10.4,0.6 7.9,0.6Z" fill="#4f9ef5"/><circle cx="6" cy="2.9" r=".8" fill="#fff"/><path d="M8.1,15.6C10.4,15.6 11.8,14.7 11.8,13.2V11H7.8V10.2H13.4C15,10.2 15.7,8.6 15.7,7C15.7,5.3 15,3.9 13.4,3.9H11.8V6.3C11.8,7.7 10.6,8.8 9.2,8.8H5.8C4.6,8.8 3.9,9.7 3.9,10.8V13.2C3.9,14.7 5.6,15.6 8.1,15.6Z" fill="#fdd43b"/><circle cx="10" cy="13.3" r=".8" fill="#fff"/></g><circle cx="16" cy="16" r="4.5" fill="#f6f7f7"/><rect x="15.1" y="11.799999999999999" width="1.8" height="2" fill="#232629" transform="rotate(0 16 16)"/><rect x="15.1" y="11.799999999999999" width="1.8" height="2" fill="#232629" transform="rotate(45 16 16)"/><rect x="15.1" y="11.799999999999999" width="1.8" height="2" fill="#232629" transform="rotate(90 16 16)"/><rect x="15.1" y="11.799999999999999" width="1.8" height="2" fill="#232629" transform="rotate(135 16 16)"/><rect x="15.1" y="11.799999999999999" width="1.8" height="2" fill="#232629" transform="rotate(180 16 16)"/><rect x="15.1" y="11.799999999999999" width="1.8" height="2" fill="#232629" transform="rotate(225 16 16)"/><rect x="15.1" y="11.799999999999999" width="1.8" height="2" fill="#232629" transform="rotate(270 16 16)"/><rect x="15.1" y="11.799999999999999" width="1.8" height="2" fill="#232629" transform="rotate(315 16 16)"/><circle cx="16" cy="16" r="2.9" fill="#f6f7f7" stroke="#232629" stroke-width="1.2"/><circle cx="16" cy="16" r="1.044" fill="#232629"/></symbol><symbol id="projgear" viewBox="0 0 22 22"><path d="M4.6,4.6H17.4M4.6,4.6V17.4H12" fill="none" stroke="#232629" stroke-width="1.3" /><path d="M4,3.4H18" fill="none" stroke="#232629" stroke-width="1.6" /><path d="M17.4,4V10" fill="none" stroke="#232629" stroke-width="1.3" /><rect x="2.6" y="6.5" width="2.6" height="2" rx=".8" fill="#232629"/><rect x="2.6" y="13.5" width="2.6" height="2" rx=".8" fill="#232629"/><circle cx="15.6" cy="15.6" r="4.5" fill="#f6f7f7"/><rect x="14.7" y="11.399999999999999" width="1.8" height="2" fill="#232629" transform="rotate(0 15.6 15.6)"/><rect x="14.7" y="11.399999999999999" width="1.8" height="2" fill="#232629" transform="rotate(45 15.6 15.6)"/><rect x="14.7" y="11.399999999999999" width="1.8" height="2" fill="#232629" transform="rotate(90 15.6 15.6)"/><rect x="14.7" y="11.399999999999999" width="1.8" height="2" fill="#232629" transform="rotate(135 15.6 15.6)"/><rect x="14.7" y="11.399999999999999" width="1.8" height="2" fill="#232629" transform="rotate(180 15.6 15.6)"/><rect x="14.7" y="11.399999999999999" width="1.8" height="2" fill="#232629" transform="rotate(225 15.6 15.6)"/><rect x="14.7" y="11.399999999999999" width="1.8" height="2" fill="#232629" transform="rotate(270 15.6 15.6)"/><rect x="14.7" y="11.399999999999999" width="1.8" height="2" fill="#232629" transform="rotate(315 15.6 15.6)"/><circle cx="15.6" cy="15.6" r="2.9" fill="#f6f7f7" stroke="#232629" stroke-width="1.2"/><circle cx="15.6" cy="15.6" r="1.044" fill="#232629"/></symbol><symbol id="pymag" viewBox="0 0 22 22"><g transform="translate(3,2.6) scale(1.0)"><path d="M7.9,0.6C5.6,0.6 4.2,1.5 4.2,3V5.2H8.2V6H2.6C1,6 0.3,7.6 0.3,9.2C0.3,10.9 1,12.3 2.6,12.3H4.2V9.9C4.2,8.5 5.4,7.4 6.8,7.4H10.2C11.4,7.4 12.1,6.5 12.1,5.4V3C12.1,1.5 10.4,0.6 7.9,0.6Z" fill="#4f9ef5"/><circle cx="6" cy="2.9" r=".8" fill="#fff"/><path d="M8.1,15.6C10.4,15.6 11.8,14.7 11.8,13.2V11H7.8V10.2H13.4C15,10.2 15.7,8.6 15.7,7C15.7,5.3 15,3.9 13.4,3.9H11.8V6.3C11.8,7.7 10.6,8.8 9.2,8.8H5.8C4.6,8.8 3.9,9.7 3.9,10.8V13.2C3.9,14.7 5.6,15.6 8.1,15.6Z" fill="#fdd43b"/><circle cx="10" cy="13.3" r=".8" fill="#fff"/></g><circle cx="13.4" cy="13.6" r="2.4" fill="#fdd43b"/><circle cx="13.4" cy="13.6" r="2.4" fill="none" stroke="#111" stroke-width="1.7" /><path d="M15.08,15.28L18.2,18.4" fill="none" stroke="#111" stroke-width="2.1" /></symbol><symbol id="projmag" viewBox="0 0 22 22"><path d="M4.6,4.6H17.4M4.6,4.6V17.4H12" fill="none" stroke="#232629" stroke-width="1.3" /><path d="M4,3.4H18" fill="none" stroke="#232629" stroke-width="1.6" /><path d="M17.4,4V10" fill="none" stroke="#232629" stroke-width="1.3" /><rect x="2.6" y="6.5" width="2.6" height="2" rx=".8" fill="#232629"/><rect x="2.6" y="13.5" width="2.6" height="2" rx=".8" fill="#232629"/><circle cx="13.6" cy="13.4" r="2.3" fill="#f6f7f7"/><circle cx="13.6" cy="13.4" r="2.3" fill="none" stroke="#111" stroke-width="1.6" /><path d="M15.209999999999999,15.01L18.2,18.0" fill="none" stroke="#111" stroke-width="2.0" /></symbol><symbol id="winedit" viewBox="0 0 22 22"><path d="M3.6,3.6H18.4V18.4H3.6Z" fill="none" stroke="#232629" stroke-width="1.2" /><rect x="3" y="3" width="16" height="3.4" fill="#232629"/><g transform="translate(6.6,7.4) scale(1.175)"><path d="M1,7L1.6,4.6L5.6,0.6L7.4,2.4L3.4,6.4Z" fill="none" stroke="#232629" stroke-width="1.1" stroke-linejoin="round"/><path d="M1,7L1.5,5L3,6.5Z" fill="#232629"/></g></symbol><symbol id="winwrench" viewBox="0 0 22 22"><path d="M3.6,3.6H18.4V18.4H3.6Z" fill="none" stroke="#232629" stroke-width="1.2" /><rect x="3" y="3" width="16" height="3.4" fill="#232629"/><path d="M7,9.4A2.6,2.6 0 0 0 10.6,11.8L15.2,16.6L16.6,15.2L11.8,10.6A2.6,2.6 0 0 0 9.6,7L9.8,9L8.4,9.8Z" fill="#5a5e61"/></symbol><symbol id="qtedit" viewBox="0 0 22 22"><rect x="3.5" y="3.5" width="14" height="9.6" fill="#f6f7f7" stroke="#6b6f72" stroke-width="1"/><text x="10.6" y="11" font-family="Liberation Sans" font-weight="bold" font-size="8" text-anchor="middle" fill="#232629" letter-spacing=".2">Qt</text><g transform="translate(10.6,10.4) scale(1.1)"><path d="M1,7L1.6,4.6L5.6,0.6L7.4,2.4L3.4,6.4Z" fill="none" stroke="#232629" stroke-width="1.1" stroke-linejoin="round"/><path d="M1,7L1.5,5L3,6.5Z" fill="#232629"/></g></symbol><symbol id="qtlang" viewBox="0 0 22 22"><rect x="3.9" y="2.9" width="14" height="9.6" fill="#f6f7f7" stroke="#6b6f72" stroke-width="1"/><text x="11.0" y="10.4" font-family="Liberation Sans" font-weight="bold" font-size="8" text-anchor="middle" fill="#232629" letter-spacing=".2">Qt</text><path d="M11.6,12.2H19.6V18H18.6V19.6L17,18H11.6Z" fill="#4fd38a"/></symbol><symbol id="winqtedit" viewBox="0 0 22 22"><path d="M3.6,3.6H18.4V18.4H3.6Z" fill="none" stroke="#232629" stroke-width="1.2" /><rect x="3" y="3" width="16" height="3.4" fill="#232629"/><text x="10.4" y="14.4" font-family="Liberation Sans" font-size="6.4" text-anchor="middle" fill="#6b6f72">[Qt]</text><g transform="translate(11.4,12) scale(0.7)"><path d="M1,7L1.6,4.6L5.6,0.6L7.4,2.4L3.4,6.4Z" fill="none" stroke="#4d5257" stroke-width="1.1" stroke-linejoin="round"/><path d="M1,7L1.5,5L3,6.5Z" fill="#4d5257"/></g></symbol><symbol id="winqtlang" viewBox="0 0 22 22"><path d="M3.6,3.6H18.4V18.4H3.6Z" fill="none" stroke="#232629" stroke-width="1.2" /><rect x="3" y="3" width="16" height="3.4" fill="#232629"/><text x="10.4" y="14.2" font-family="Liberation Sans" font-size="6.4" text-anchor="middle" fill="#6b6f72">[Qt]</text><path d="M12,13H17V16.6H16V17.8L14.8,16.6H12Z" fill="#4fd38a"/></symbol><symbol id="docpm" viewBox="0 0 22 22"><path d="M4.6,3.6H13L17.4,8V18.4H4.6Z" fill="none" stroke="#232629" stroke-width="1.2" /><path d="M13,3V8H18Z" fill="#232629"/><path d="M7.6,11.4H13M10.3,8.8V14M7.6,16H13" fill="none" stroke="#232629" stroke-width="1.3" /></symbol><symbol id="swap" viewBox="0 0 22 22"><path d="M6.6,5.2V14.5Q6.6,16.5 8.6,16.5H10.6M15.6,16.8V7.5Q15.6,5.5 13.6,5.5H11.6" fill="none" stroke="#232629" stroke-width="1.3" /><circle cx="6.6" cy="4" r="1.2" fill="#f6f7f7" stroke="#232629" stroke-width="1"/><circle cx="15.6" cy="18" r="1.2" fill="#f6f7f7" stroke="#232629" stroke-width="1"/><path d="M10,14.2L13,16.5L10,18.8ZM12.2,3.2L9.2,5.5L12.2,7.8Z" fill="#232629"/></symbol><symbol id="dbplain" viewBox="0 0 22 22"><ellipse cx="11" cy="6" rx="7.2" ry="2.8" fill="none" stroke="#3b4045" stroke-width="1.3" /><path d="M3.8,6V16A7.2,2.8 0 0 0 18.2,16V6" fill="none" stroke="#3b4045" stroke-width="1.3" /><path d="M3.8,11A7.2,2.8 0 0 0 18.2,11" fill="none" stroke="#3b4045" stroke-width="1.3" /></symbol><symbol id="noteedit" viewBox="0 0 22 22"><path d="M4.6,4V18.4H11" fill="none" stroke="#232629" stroke-width="1.3" /><path d="M4,3.6H17.4" fill="none" stroke="#232629" stroke-width="1.8" /><path d="M17,4V10" fill="none" stroke="#232629" stroke-width="1.2" /><path d="M6.6,7H15M6.6,9.6H15M6.6,12.2H13M6.6,14.8H11" fill="none" stroke="#232629" stroke-width="1" /><g transform="translate(11,10.6) scale(1.075)"><path d="M1,7L1.6,4.6L5.6,0.6L7.4,2.4L3.4,6.4Z" fill="none" stroke="#4d5257" stroke-width="1.1" stroke-linejoin="round"/><path d="M1,7L1.5,5L3,6.5Z" fill="#4d5257"/></g></symbol><symbol id="cham1" viewBox="0 0 22 22"><path d="M3,17.6C3,11 6.5,5.6 13,4.4C16,3.8 19.4,3.6 20,4.6C20.6,6.4 18.6,9 16,10.6C14,11.8 12.6,13 11.6,15C11,16.4 10.6,17.6 10,17.8Z" fill="url(#chg)"/><path d="M5,13C6,9.6 8.6,7 12,6.2C10,8 8.4,9.6 8,12.4C7.6,13.6 6.4,14.2 5,13Z" fill="#7fb52e" opacity=".75"/><path d="M13.4,8.4C15,7.6 17,6.4 18.4,5.4C17.6,7.4 15.6,9 13.6,10.2Z" fill="#7fae2c" opacity=".7"/><circle cx="10.9" cy="6.8" r="1.5" fill="#0e1a0c"/><circle cx="8.4" cy="8.2" r=".9" fill="#9fd6bd" opacity=".8"/><path d="M15.7,9.4L20,11.8V16.8L15.7,19.2L11.4,16.8V11.8Z" fill="#2ba7b7"/><path d="M13.6,15.6L16.8,12.6L18,13.8L14.8,16.8Z" fill="#12353c"/></symbol><symbol id="cham2" viewBox="0 0 22 22"><path d="M3,17.6C3,11 6.5,5.6 13,4.4C16,3.8 19.4,3.6 20,4.6C20.6,6.4 18.6,9 16,10.6C14,11.8 12.6,13 11.6,15C11,16.4 10.6,17.6 10,17.8Z" fill="url(#chg)"/><path d="M5,13C6,9.6 8.6,7 12,6.2C10,8 8.4,9.6 8,12.4C7.6,13.6 6.4,14.2 5,13Z" fill="#7fb52e" opacity=".75"/><path d="M13.4,8.4C15,7.6 17,6.4 18.4,5.4C17.6,7.4 15.6,9 13.6,10.2Z" fill="#7fae2c" opacity=".7"/><circle cx="10.9" cy="6.8" r="1.5" fill="#0e1a0c"/><circle cx="8.4" cy="8.2" r=".9" fill="#9fd6bd" opacity=".8"/><rect x="11.4" y="11.6" width="7.6" height="7.6" fill="#d8433c"/><rect x="11.4" y="11.6" width="2.5" height="2.5" fill="#3c7fd8"/><rect x="16.5" y="11.6" width="2.5" height="2.5" fill="#42b85a"/><rect x="13.9" y="14.1" width="2.6" height="2.6" fill="#f1c232"/><rect x="11.4" y="16.7" width="2.5" height="2.5" fill="#42b85a"/><rect x="16.5" y="16.7" width="2.5" height="2.5" fill="#3c7fd8"/><path d="M12.4,18.4L17.8,12.6" stroke="#222" stroke-width="1.2"/></symbol><symbol id="cham3" viewBox="0 0 22 22"><path d="M3,17.6C3,11 6.5,5.6 13,4.4C16,3.8 19.4,3.6 20,4.6C20.6,6.4 18.6,9 16,10.6C14,11.8 12.6,13 11.6,15C11,16.4 10.6,17.6 10,17.8Z" fill="url(#chg)"/><path d="M5,13C6,9.6 8.6,7 12,6.2C10,8 8.4,9.6 8,12.4C7.6,13.6 6.4,14.2 5,13Z" fill="#7fb52e" opacity=".75"/><path d="M13.4,8.4C15,7.6 17,6.4 18.4,5.4C17.6,7.4 15.6,9 13.6,10.2Z" fill="#7fae2c" opacity=".7"/><circle cx="10.9" cy="6.8" r="1.5" fill="#0e1a0c"/><circle cx="8.4" cy="8.2" r=".9" fill="#9fd6bd" opacity=".8"/><rect x="11" y="12.6" width="8.4" height="6.4" fill="#e6e7e8" stroke="#8b8d8f" stroke-width=".6"/><circle cx="14.8" cy="15.8" r="2.2" fill="#2b6fc4"/><rect x="17.4" y="13.6" width="1.2" height="4.4" fill="#6b6f72"/></symbol><symbol id="cham4" viewBox="0 0 22 22"><path d="M3,17.6C3,11 6.5,5.6 13,4.4C16,3.8 19.4,3.6 20,4.6C20.6,6.4 18.6,9 16,10.6C14,11.8 12.6,13 11.6,15C11,16.4 10.6,17.6 10,17.8Z" fill="url(#chg)"/><path d="M5,13C6,9.6 8.6,7 12,6.2C10,8 8.4,9.6 8,12.4C7.6,13.6 6.4,14.2 5,13Z" fill="#7fb52e" opacity=".75"/><path d="M13.4,8.4C15,7.6 17,6.4 18.4,5.4C17.6,7.4 15.6,9 13.6,10.2Z" fill="#7fae2c" opacity=".7"/><circle cx="10.9" cy="6.8" r="1.5" fill="#0e1a0c"/><circle cx="8.4" cy="8.2" r=".9" fill="#9fd6bd" opacity=".8"/><circle cx="14.6" cy="14.6" r="4.4" fill="#2d8de8"/><path d="M11.52,13.28q2.2,-2.64 3.9600000000000004,-1.32q-0.44000000000000006,2.64 -2.64,3.08q-0.8800000000000001,2.2 -1.32,-1.7600000000000002Z" fill="#5fdc8b"/><path d="M15.04,15.92q2.2,-1.32 3.08,0q-0.8800000000000001,2.2 -2.64,2.2Z" fill="#5fdc8b"/></symbol><symbol id="net" viewBox="0 0 22 22"><rect x="6.6" y="2.6" width="13.8" height="12.4" fill="#f6f7f7" stroke="#232629" stroke-width="1.3"/><rect x="10.6" y="15" width="6" height="2.4" fill="#232629"/><path d="M8.6,18.4H18.6" stroke="#232629" stroke-width="1.6"/><rect x="1.6" y="2" width="4.2" height="5.4" fill="#f6f7f7" stroke="#232629" stroke-width="1"/><path d="M3.6,7.4V16.4Q3.6,18.4 6,18.4H9" fill="none" stroke="#232629" stroke-width="1.1"/><rect x="3" y="3.4" width="1.4" height="1.6" fill="#232629"/></symbol><symbol id="tux" viewBox="0 0 22 22"><path d="M11,1.4C8.6,1.4 7.8,3.4 8,5.6C8.2,7.6 6.2,9.6 5.2,12.4C4.4,14.8 4.6,17 6,18.6H16C17.4,17 17.6,14.8 16.8,12.4C15.8,9.6 13.8,7.6 14,5.6C14.2,3.4 13.4,1.4 11,1.4Z" fill="#1b1b1b"/><path d="M11,7.6C9.6,8.6 7.6,11.4 7.4,14.4C7.3,16.4 8.4,18 11,18C13.6,18 14.7,16.4 14.6,14.4C14.4,11.4 12.4,8.6 11,7.6Z" fill="#fbfbfb"/><path d="M9.6,5.2L11,4.6L12.4,5.2L11,6.4Z" fill="#f5a623"/><circle cx="9.9" cy="3.9" r=".7" fill="#fff"/><circle cx="12.1" cy="3.9" r=".7" fill="#fff"/><path d="M3.4,19.6C3.6,17.6 5.4,16.6 6.6,17.4L9,19.4C8.6,20.6 4,20.8 3.4,19.6ZM18.6,19.6C18.4,17.6 16.6,16.6 15.4,17.4L13,19.4C13.4,20.6 18,20.8 18.6,19.6Z" fill="#f5a623"/></symbol><symbol id="fold16" viewBox="0 0 16 16"><path d="M1.5,14.5V1.5H7.2L4.7,6.5H1.5M1.5,14.5H14.5V4.5" fill="none" stroke="#31363b" stroke-width="1"/><path d="M7.6,2.4H15V5H6.3Z" fill="#232629"/></symbol><symbol id="py16" viewBox="0 0 16 16"><g transform="translate(0,0) scale(1.0)"><path d="M7.9,0.6C5.6,0.6 4.2,1.5 4.2,3V5.2H8.2V6H2.6C1,6 0.3,7.6 0.3,9.2C0.3,10.9 1,12.3 2.6,12.3H4.2V9.9C4.2,8.5 5.4,7.4 6.8,7.4H10.2C11.4,7.4 12.1,6.5 12.1,5.4V3C12.1,1.5 10.4,0.6 7.9,0.6Z" fill="#4f9ef5"/><circle cx="6" cy="2.9" r=".8" fill="#fff"/><path d="M8.1,15.6C10.4,15.6 11.8,14.7 11.8,13.2V11H7.8V10.2H13.4C15,10.2 15.7,8.6 15.7,7C15.7,5.3 15,3.9 13.4,3.9H11.8V6.3C11.8,7.7 10.6,8.8 9.2,8.8H5.8C4.6,8.8 3.9,9.7 3.9,10.8V13.2C3.9,14.7 5.6,15.6 8.1,15.6Z" fill="#fdd43b"/><circle cx="10" cy="13.3" r=".8" fill="#fff"/></g></symbol><symbol id="uni16" viewBox="0 0 16 16"><path d="M1.2,2V9.6A2.9,3 0 0 0 7,9.6V2" fill="none" stroke="#232629" stroke-width="1.5"/><path d="M9.4,13V2.4L13.4,13" fill="none" stroke="#232629" stroke-width="1.5" stroke-linejoin="bevel"/><path d="M14.6,5.4V13" stroke="#232629" stroke-width="1.4"/><circle cx="14.6" cy="2.8" r=".9" fill="#232629"/></symbol><symbol id="imp16" viewBox="0 0 16 16"><circle cx="8" cy="8" r="7.2" fill="#ee1c24" stroke="#b0121a" stroke-width=".8"/><rect x="7" y="6.6" width="2" height="5.6" fill="#fff"/><circle cx="8" cy="4.4" r="1.2" fill="#fff"/></symbol><symbol id="cls16" viewBox="0 0 16 16"><rect x="2.6" y="1.6" width="6" height="4.4" fill="none" stroke="#232629" stroke-width="1.2"/><path d="M8.6,3.8H12.6V11M4.4,6V10.4" fill="none" stroke="#232629" stroke-width="1.2"/><rect x="2.1" y="10.6" width="4" height="3.8" fill="none" stroke="#232629" stroke-width="1.2"/><rect x="10.4" y="10.4" width="4.6" height="4.6" fill="#232629"/></symbol><symbol id="attr16" viewBox="0 0 16 16"><rect x="1.6" y="2.6" width="5.4" height="3.6" fill="none" stroke="#232629" stroke-width="1.1" opacity=".75"/><rect x="9.6" y="2.6" width="5.4" height="3.6" fill="none" stroke="#232629" stroke-width="1.1" opacity=".75"/><path d="M2.4,6V12.4M5.6,6V13.6" stroke="#232629" stroke-width="1.4"/><rect x="7.6" y="8.6" width="1.6" height="1.6" fill="#232629"/><rect x="10.6" y="8.4" width="4.6" height="2" fill="#232629"/></symbol><symbol id="cattr16" viewBox="0 0 16 16"><rect x="1.6" y="2.6" width="5.4" height="3.6" fill="none" stroke="#1d99f3" stroke-width="1.1" opacity=".75"/><rect x="9.6" y="2.6" width="5.4" height="3.6" fill="none" stroke="#1d99f3" stroke-width="1.1" opacity=".75"/><path d="M2.4,6V12.4M5.6,6V13.6" stroke="#1d99f3" stroke-width="1.4"/><rect x="7.6" y="8.6" width="1.6" height="1.6" fill="#1d99f3"/><rect x="10.6" y="8.4" width="4.6" height="2" fill="#1d99f3"/></symbol><symbol id="priv16" viewBox="0 0 16 16"><path d="M6.7,4.4V3.1A1.4,1.4 0 0 1 9.5,3.1V4.4" fill="none" stroke="#7b7f82" stroke-width="1"/><rect x="5.7" y="4.4" width="4.8" height="3" fill="none" stroke="#7b7f82" stroke-width="1"/><path d="M4.5,9Q3.2,9 3.2,10.2V11.0Q3.2,12.0 2.2,12.0Q3.2,12.0 3.2,13.0V13.8Q3.2,15 4.5,15M5.3,9Q6.6,9 6.6,10.2V11.0Q6.6,12.0 7.6,12.0Q6.6,12.0 6.6,13.0V13.8Q6.6,15 5.3,15M10.9,9Q9.6,9 9.6,10.2V11.0Q9.6,12.0 8.6,12.0Q9.6,12.0 9.6,13.0V13.8Q9.6,15 10.9,15M11.7,9Q13,9 13,10.2V11.0Q13,12.0 14,12.0Q13,12.0 13,13.0V13.8Q13,15 11.7,15" fill="none" stroke="#6a6e71" stroke-width="1"/></symbol><symbol id="pub16" viewBox="0 0 16 16"><rect x="1.6" y="1.6" width="12.8" height="4.2" fill="none" stroke="#4d5257" stroke-width="1.2"/><path d="M1,6.2H15" stroke="#4d5257" stroke-width="1"/><path d="M4.5,8.6Q3.2,8.6 3.2,9.799999999999999V10.6Q3.2,11.6 2.2,11.6Q3.2,11.6 3.2,12.6V13.4Q3.2,14.6 4.5,14.6M5.3,8.6Q6.6,8.6 6.6,9.799999999999999V10.6Q6.6,11.6 7.6,11.6Q6.6,11.6 6.6,12.6V13.4Q6.6,14.6 5.3,14.6M10.9,8.6Q9.6,8.6 9.6,9.799999999999999V10.6Q9.6,11.6 8.6,11.6Q9.6,11.6 9.6,12.6V13.4Q9.6,14.6 10.9,14.6M11.7,8.6Q13,8.6 13,9.799999999999999V10.6Q13,11.6 14,11.6Q13,11.6 13,12.6V13.4Q13,14.6 11.7,14.6" fill="none" stroke="#6a6e71" stroke-width="1"/></symbol><symbol id="tabclose" viewBox="0 0 16 16"><circle cx="8" cy="8" r="7.4" fill="#da4453"/><path d="M5.2,5.2L10.8,10.8M10.8,5.2L5.2,10.8" stroke="#fcfcfc" stroke-width="1.4"/></symbol><symbol id="docplain" viewBox="0 0 16 16"><path d="M3.1,1.6H9.6L12.9,4.9V14.4H3.1Z" fill="none" stroke="#232629" stroke-width="1.2"/><path d="M9.4,1.2V5.2H13.4Z" fill="#232629"/></symbol><symbol id="warn16" viewBox="0 0 16 16"><path d="M8,1.4L15.2,14.6H.8Z" fill="#fdbc11"/><rect x="7.1" y="5.6" width="1.8" height="5" fill="#2b2b2b"/><rect x="7.1" y="11.6" width="1.8" height="1.7" fill="#2b2b2b"/></symbol><symbol id="warn16s" viewBox="0 0 16 16"><path d="M8,1.4L15.2,14.6H.8Z" fill="#b3ad4a"/><rect x="7.1" y="5.6" width="1.8" height="5" fill="#4a5a60"/><rect x="7.1" y="11.6" width="1.8" height="1.7" fill="#4a5a60"/></symbol><symbol id="taskhd" viewBox="0 0 16 16"><rect x="1.5" y="3.5" width="13" height="11" fill="none" stroke="#232629" stroke-width="1"/><rect x="1" y="2.4" width="14" height="2.8" fill="#232629"/><rect x="2.4" y="1" width="1.4" height="2" fill="#232629"/><rect x="12.2" y="1" width="1.4" height="2" fill="#232629"/><path d="M4.6,10L6.8,12.2L11.4,7.4" fill="none" stroke="#232629" stroke-width="1.1"/></symbol><symbol id="zoomout" viewBox="0 0 16 16"><path d="M1,1H15V15" fill="none" stroke="#6a6c6e" stroke-width="1" stroke-dasharray="1.6 1.6"/><path d="M1,15H15M1,1V15" fill="none" stroke="#6a6c6e" stroke-width="1" stroke-dasharray="1.6 1.6"/><path d="M12.4,3.6L7.6,8.4M7.4,4.6V8.6H11.4" fill="none" stroke="#232629" stroke-width="1.2"/><rect x="2.4" y="10.6" width="3" height="3" fill="none" stroke="#232629" stroke-width="1" stroke-dasharray="1 1"/></symbol><symbol id="zoomin" viewBox="0 0 16 16"><path d="M1,9V1H15V15H7" fill="none" stroke="#6a6c6e" stroke-width="1" stroke-dasharray="1.6 1.6"/><rect x="1.6" y="9.6" width="4.8" height="4.8" fill="none" stroke="#232629" stroke-width="1.2"/><path d="M7.4,8.6L12.4,3.6M8.4,3.4H12.6V7.6" fill="none" stroke="#232629" stroke-width="1.2"/></symbol><symbol id="zoomreset" viewBox="0 0 16 16"><rect x="3.4" y="3.4" width="9.2" height="9.2" fill="none" stroke="#232629" stroke-width="1.6"/><path d="M1,1L3.4,3.4M15,1L12.6,3.4M1,15L3.4,12.6M15,15L12.6,12.6" stroke="#232629" stroke-width="1"/></symbol><symbol id="sb_mp" viewBox="0 0 28 28"><rect x="2.4" y="0.6" width="10.6" height="11.8" fill="none" stroke="#ecf0ea" stroke-width="1.1" opacity=".9"/><path d="M2.4,2.8000000000000003H13.0" stroke="#ecf0ea" stroke-width="1.1" opacity=".8"/><circle cx="1.4" cy="3.4" r="1.15" fill="#ecf0ea"/><circle cx="1.4" cy="10.6" r="1.15" fill="#ecf0ea"/><rect x="17.2" y="0.6" width="10.6" height="11.8" fill="none" stroke="#ecf0ea" stroke-width="1.1" opacity=".9"/><path d="M17.2,2.8000000000000003H27.799999999999997" stroke="#ecf0ea" stroke-width="1.1" opacity=".8"/><circle cx="16.2" cy="3.4" r="1.15" fill="#ecf0ea"/><circle cx="16.2" cy="10.6" r="1.15" fill="#ecf0ea"/><rect x="2.4" y="15.6" width="10.6" height="11.8" fill="none" stroke="#ecf0ea" stroke-width="1.1" opacity=".9"/><path d="M2.4,17.8H13.0" stroke="#ecf0ea" stroke-width="1.1" opacity=".8"/><circle cx="1.4" cy="18.4" r="1.15" fill="#ecf0ea"/><circle cx="1.4" cy="25.6" r="1.15" fill="#ecf0ea"/><rect x="17.2" y="15.6" width="10.6" height="11.8" fill="none" stroke="#ecf0ea" stroke-width="1.1" opacity=".9"/><path d="M17.2,17.8H27.799999999999997" stroke="#ecf0ea" stroke-width="1.1" opacity=".8"/><circle cx="16.2" cy="18.4" r="1.15" fill="#ecf0ea"/><circle cx="16.2" cy="25.6" r="1.15" fill="#ecf0ea"/></symbol><symbol id="sb_proj" viewBox="0 0 28 28"><rect x="4.4" y="1" width="22.6" height="26" fill="none" stroke="#ecf0ea" stroke-width="2"/><path d="M4.4,6H27" stroke="#ecf0ea" stroke-width="2"/><rect x="0" y="3.4" width="4.6" height="6" fill="#ecf0ea"/><rect x="0" y="19.4" width="4.6" height="5.2" fill="#ecf0ea"/></symbol><symbol id="sb_find" viewBox="0 0 28 28"><circle cx="10.5" cy="10.4" r="9.4" fill="none" stroke="#ecf0ea" stroke-width="2" /><path d="M17.3,17.3L27.6,27.6" fill="none" stroke="#ecf0ea" stroke-width="2.2" /></symbol><symbol id="sb_findloc" viewBox="0 0 28 28"><path d="M6.8,.8Q.9,1 .9,5.4V22Q.9,27.4 6.4,27.4H23M6.4,.8V17.4Q.9,17.6 .9,22M6.8,5.8H25.8V21" fill="none" stroke="#ecf0ea" stroke-width="1.5" /><circle cx="15.7" cy="15.6" r="6.2" fill="none" stroke="#ecf0ea" stroke-width="1.6" /><path d="M20.2,20.2L27.4,27.4" fill="none" stroke="#ecf0ea" stroke-width="1.8" /></symbol><symbol id="sb_vcs" viewBox="0 0 28 28"><circle cx="8" cy="4.5" r="3.6" fill="none" stroke="#ecf0ea" stroke-width="1.6" /><circle cx="20" cy="8.3" r="3.6" fill="none" stroke="#ecf0ea" stroke-width="1.6" /><circle cx="8" cy="23.7" r="3.6" fill="none" stroke="#ecf0ea" stroke-width="1.6" /><path d="M8,8.2V20M20,12C20,17.4 9,15.6 8.4,20.2" fill="none" stroke="#ecf0ea" stroke-width="1.6" /></symbol><symbol id="sb_tmpl" viewBox="0 0 28 28"><path d="M12.4,26.5H1.2V1H17" fill="none" stroke="#ecf0ea" stroke-width="2" /><path d="M16.4,0L26,8V9.6H16.4Z" fill="#ecf0ea"/><path d="M25,8.4V12.6" fill="none" stroke="#ecf0ea" stroke-width="2" /><polygon points="20.70,14.30 21.55,17.91 24.10,15.21 23.03,18.77 26.59,17.70 23.89,20.25 27.50,21.10 23.89,21.95 26.59,24.50 23.03,23.43 24.10,26.99 21.55,24.29 20.70,27.90 19.85,24.29 17.30,26.99 18.37,23.43 14.81,24.50 17.51,21.95 13.90,21.10 17.51,20.25 14.81,17.70 18.37,18.77 17.30,15.21 19.85,17.91" fill="#ecf0ea"/></symbol><symbol id="sb_cls" viewBox="0 0 28 28"><rect x="1" y="1" width="9.8" height="10.2" fill="none" stroke="#ecf0ea" stroke-width="2" /><rect x="17" y="1" width="10" height="10.2" fill="none" stroke="#ecf0ea" stroke-width="2" /><path d="M11,6H17M11.4,11V21.8H16.4" fill="none" stroke="#ecf0ea" stroke-width="1.7" /><rect x="16" y="16" width="12" height="12" fill="#ecf0ea"/></symbol><symbol id="sb_uni" viewBox="0 0 28 28"><path d="M1.9,0V19.6A6.2,6.6 0 0 0 14.3,19.6V0" fill="none" stroke="#ecf0ea" stroke-width="3.7" /><path d="M12.4,0H16.7L28,28H24Z" fill="#ecf0ea"/><rect x="24.5" y="7.2" width="3.5" height="20.8" fill="#ecf0ea"/><rect x="24.2" y="0" width="3.8" height="3.5" fill="#ecf0ea"/></symbol><symbol id="bb_shell" viewBox="0 0 28 28"><path d="M.6,1L11,12L.6,23.4" fill="none" stroke="#ecf0ea" stroke-width="1.7" /><path d="M12.4,27H28.4" fill="none" stroke="#ecf0ea" stroke-width="1.9" /></symbol><symbol id="bb_task" viewBox="0 0 28 28"><rect x="1" y="1" width="26" height="26" fill="none" stroke="#ecf0ea" stroke-width="2" /><rect x="0" y="0" width="28" height="7.6" fill="#ecf0ea"/><rect x="4.6" y="0" width="3" height="4.6" fill="#173a10"/><rect x="20.6" y="0" width="3" height="4.6" fill="#173a10"/><path d="M9,17.4L12.6,20.8L20.6,11.4" fill="none" stroke="#ecf0ea" stroke-width="2" /></symbol><symbol id="bb_log" viewBox="0 0 28 28"><rect x="0" y="0" width="28" height="28" fill="#e9ebec"/><rect x="0" y="24.6" width="28" height="3.4" fill="#cfd6da"/><rect x="3" y="2.8" width="22.4" height="20.4" fill="#3b4350"/><rect x="3" y="2.8" width="22.4" height="3" fill="#56606e"/><rect x="3" y="5.8" width="22.4" height="1" fill="#3daee9"/><rect x="22.6" y="3.6" width="1.4" height="1.4" fill="#fff"/><path d="M5,9H10.2V12C10.2,13.6 8.8,14.4 7.6,15C6.4,14.4 5,13.6 5,12Z" fill="#e5485a"/><path d="M11.6,10.6H13.4M14,10.6H16.6" stroke="#e5485a" stroke-width="1"/><path d="M18.6,10.6H20.4M21.2,10.6H23.4M11.6,12.8H15.8M18.6,12.8H22" stroke="#9aa3ad" stroke-width=".9"/><circle cx="7.6" cy="18.8" r="2.7" fill="#38a5ee"/><path d="M11.6,17.6H13M13.8,17.6H16.6" stroke="#38a5ee" stroke-width="1"/><path d="M18.6,17.6H21M21.8,17.6H23.4M11.6,19.8H14M18.6,19.8H20.4M21.2,19.8H22.8" stroke="#9aa3ad" stroke-width=".9"/></symbol><symbol id="bb_pi" viewBox="0 0 28 28"><path d="M0,8.2C1.2,3.4 3,1.6 6.4,1.6H28.4L27.6,5H21.6C20.6,10 19.6,15 19.8,19.6C19.9,22.6 21.6,23.6 23.4,23C24.8,22.5 26,21 26.8,19.4L27.7,19.9C26.4,23.6 24,27.2 20.4,27.2C17,27.2 16,24.4 16.2,20.4C16.4,15.6 17.4,10 18.4,5H11.6C11,11 10,16.6 8.4,21.4C7.4,24.4 6.2,27.4 3.8,27.4C2.2,27.4 1.4,26.2 1.8,24.8C2.2,23.6 3.4,23.8 4,23C6,20 7.6,11.6 8.2,5H6.8C4,5 2.4,6 1,8.6Z" fill="#ecf0ea"/></symbol><symbol id="bb_clock" viewBox="0 0 28 28"><circle cx="13.9" cy="13.9" r="13" fill="none" stroke="#ecf0ea" stroke-width="1.5" /><path d="M13.6,3.6V14.6H22.6" fill="none" stroke="#ecf0ea" stroke-width="1.8" /></symbol><symbol id="bb_trans" viewBox="0 0 28 28"><path d="M0,5.6H20M10,1.4V5.6M3.5,6L16.5,20M16.5,6C15,12 9,18 2.5,21.6" fill="none" stroke="#ecf0ea" stroke-width="1.9" /><path d="M14.3,26.6L21,12.6L27.7,26.6M16.6,22.2H25.4" fill="none" stroke="#ecf0ea" stroke-width="1.9" /></symbol><symbol id="rs_bug" viewBox="0 0 28 28"><path d="M8.6,7.2A5.4,5.6 0 0 1 19.4,7.2M7.2,7.4H20.8M5.6,7.4C4,16 6,26.6 14,26.8C22,26.6 24,16 22.4,7.4" fill="none" stroke="#ecf0ea" stroke-width="1.6" /><path d="M10,12L18,20M18,12L10,20" fill="none" stroke="#ecf0ea" stroke-width="1.6" /><path d="M2.4,4.4L7,9M25.6,4.4L21,9M0,16.4H4.6M23.4,16.4H28M3,27L7.6,22.6M25,27L20.4,22.6" fill="none" stroke="#ecf0ea" stroke-width="1.5" /></symbol><symbol id="rs_doc" viewBox="0 0 28 28"><path d="M15.6,26.2H3.4V1.6H24.6V17" fill="none" stroke="#ecf0ea" stroke-width="1.9" /><circle cx="17.1" cy="19.3" r="4.3" fill="none" stroke="#ecf0ea" stroke-width="1.7" /><path d="M20.4,22.6L25.2,27.4" fill="none" stroke="#ecf0ea" stroke-width="1.9" /></symbol><symbol id="rs_help" viewBox="0 0 28 28"><circle cx="14" cy="14" r="13.2" fill="none" stroke="#ecf0ea" stroke-width="1.2" /><g fill="#ecf0ea"><rect x="-5" y="10.8" width="38" height="6.4" transform="rotate(45 14 14)"/><rect x="-5" y="10.8" width="38" height="6.4" transform="rotate(-45 14 14)"/></g><circle cx="14" cy="14" r="5.2" fill="#2b7020"/><path d="M2,4.6L4.6,2L5.4,5.4ZM26,4.6L23.4,2L22.6,5.4ZM2,23.4L4.6,26L5.4,22.6ZM26,23.4L23.4,26L22.6,22.6Z" fill="#2b7020"/></symbol><symbol id="rs_web" viewBox="0 0 28 28"><rect x="1.3" y="6.1" width="25.6" height="18" fill="none" stroke="#ecf0ea" stroke-width="2.2" /><rect x="5" y="3" width="7" height="2.6" fill="#ecf0ea"/><rect x="16.2" y="3" width="6.8" height="2.6" fill="#ecf0ea"/><circle cx="14.7" cy="14.8" r="6.4" fill="#2d8de8"/><path d="M10.219999999999999,12.88q3.2,-3.84 5.760000000000001,-1.92q-0.6400000000000001,3.84 -3.84,4.4799999999999995q-1.2800000000000002,3.2 -1.92,-2.5600000000000005Z" fill="#5fdc8b"/><path d="M15.34,16.72q3.2,-1.92 4.4799999999999995,0q-1.2800000000000002,3.2 -3.84,3.2Z" fill="#5fdc8b"/></symbol><symbol id="rs_py" viewBox="0 0 28 28"><rect x="1" y="1" width="26" height="26" fill="none" stroke="#ecf0ea" stroke-width="2" /><g transform="translate(5,5) scale(1.125)"><path d="M7.9,0.6C5.6,0.6 4.2,1.5 4.2,3V5.2H8.2V6H2.6C1,6 0.3,7.6 0.3,9.2C0.3,10.9 1,12.3 2.6,12.3H4.2V9.9C4.2,8.5 5.4,7.4 6.8,7.4H10.2C11.4,7.4 12.1,6.5 12.1,5.4V3C12.1,1.5 10.4,0.6 7.9,0.6Z" fill="#4f9ef5"/><circle cx="6" cy="2.9" r=".8" fill="#fff"/><path d="M8.1,15.6C10.4,15.6 11.8,14.7 11.8,13.2V11H7.8V10.2H13.4C15,10.2 15.7,8.6 15.7,7C15.7,5.3 15,3.9 13.4,3.9H11.8V6.3C11.8,7.7 10.6,8.8 9.2,8.8H5.8C4.6,8.8 3.9,9.7 3.9,10.8V13.2C3.9,14.7 5.6,15.6 8.1,15.6Z" fill="#fdd43b"/><circle cx="10" cy="13.3" r=".8" fill="#fff"/></g></symbol><symbol id="rs_pip" viewBox="0 0 28 28"><path d="M0,17.6L4,15.6V10.4L8,8.4V6.4L12,4.4V12L16,22V26.6L12,28.4L0,22.6Z" fill="#eceeea"/><path d="M0,17.6L12,23V28.4L0,22.6Z" fill="#dfe2dd"/><path d="M12,4L20,.4L24,2.4V11L20,13V15.5L16,17.5V20L12,22L8,20V9.6L12,7.6Z" fill="#3572a5"/><path d="M8,9.6L12,11.6V22L8,20Z" fill="#2c6090"/><path d="M12,4L16,6V11.4L12,11.6Z" fill="#2f679b"/><path d="M24,4.4L28,6.4V17.6L24,19.6V21.6L16,25.6V17.5L20,15.5V13L24,11Z" fill="#ffd43b"/><path d="M24,19.6L28,17.6V21L24,23Z" fill="#f2f3f0"/><path d="M24,4.4L28,6.4V12L24,11Z" fill="#ffde5f"/><rect x="16.7" y="6.4" width="1.3" height="1.6" fill="#fff"/><rect x="21.8" y="20.4" width="1.3" height="1.6" fill="#fff"/></symbol><symbol id="rs_mpy" viewBox="0 0 28 28"><path d="M0,0H11V24H15V0H28V28H23V4H19V28H7V4H4V28H0Z" fill="#ecf0ea"/><circle cx="25.5" cy="24" r="1.2" fill="#2b7020"/></symbol><symbol id="rs_mqtt" viewBox="0 0 28 28"><path d="M6.5,24.2A6.6,6.6 0 0 1 5.4,11.2A8.4,8.4 0 0 1 21.4,9.2A7.5,7.5 0 0 1 21,24.2Z" fill="none" stroke="#ecf0ea" stroke-width="1.5" /><text x="14" y="20.2" font-family="Liberation Sans" font-size="6.6" text-anchor="middle" fill="#ecf0ea" opacity=".9" letter-spacing=".1">MQTT</text></symbol></defs></svg>
<div style="left:0px;top:0px;width:2093px;height:24px;background:#eff0f1;border-bottom:1px solid #c4c5c6"></div>
<div class="t" style="left:10px;top:2px;font-size:13.6px;letter-spacing:-0.277px;"><u>F</u>ile</div>
<div class="t" style="left:45px;top:2px;font-size:13.6px;letter-spacing:0.041px;"><u>E</u>dit</div>
<div class="t" style="left:83px;top:2px;font-size:13.6px;letter-spacing:-0.28px;"><u>S</u>earch</div>
<div class="t" style="left:139.5px;top:2px;font-size:13.6px;letter-spacing:-0.13px;"><u>V</u>iew</div>
<div class="t" style="left:183.3px;top:2px;font-size:13.6px;letter-spacing:0.111px;"><u>B</u>ookmarks</div>
<div class="t" style="left:266.9px;top:2px;font-size:13.6px;letter-spacing:0.34px;"><u>M</u>ultiproject</div>
<div class="t" style="left:355.2px;top:2px;font-size:13.6px;letter-spacing:0.027px;"><u>P</u>roject</div>
<div class="t" style="left:412px;top:2px;font-size:13.6px;letter-spacing:-0.044px;">Project-<u>T</u>ools</div>
<div class="t" style="left:504.3px;top:2px;font-size:13.6px;letter-spacing:-0.004px;"><u>S</u>tart</div>
<div class="t" style="left:548px;top:2px;font-size:13.6px;letter-spacing:0.108px;"><u>D</u>ebug</div>
<div class="t" style="left:603.7px;top:2px;font-size:13.6px;letter-spacing:-0.289px;"><u>E</u>xtras</div>
<div class="t" style="left:655.5px;top:2px;font-size:13.6px;letter-spacing:-0.078px;"><u>S</u>ettings</div>
<div class="t" style="left:719.4px;top:2px;font-size:13.6px;letter-spacing:0.24px;"><u>W</u>indow</div>
<div class="t" style="left:784.3px;top:2px;font-size:13.6px;letter-spacing:-0.067px;"><u>H</u>elp</div>
<div style="left:0px;top:24px;width:2093px;height:33px;background:linear-gradient(180deg,#f8f8f9,#eff0f1);border-bottom:1px solid #bbbcbd"></div>
<div style="left:0px;top:57px;width:2093px;height:32px;background:linear-gradient(180deg,#f8f8f9,#eff0f1);border-bottom:1px solid #bbbcbd"></div>
<div class="hdl" style="left:4px;top:31px;width:6px;height:18px;"></div>
<svg class="i" width="22" height="22" style="left:16px;top:29px;"><use href="#newwin"/></svg>
<div style="left:45px;top:33px;width:1px;height:14px;background:#c6c7c8;box-shadow:1px 0 0 #fbfbfb"></div>
<svg class="i" width="22" height="22" style="left:52px;top:29px;"><use href="#new"/></svg>
<svg class="i" width="22" height="22" style="left:81px;top:29px;"><use href="#open"/></svg>
<svg class="i" width="22" height="22" style="left:110px;top:29px;"><use href="#close"/></svg>
<div style="left:139px;top:33px;width:1px;height:14px;background:#c6c7c8;box-shadow:1px 0 0 #fbfbfb"></div>
<svg class="i" width="22" height="22" style="left:146px;top:29px;"><use href="#save"/></svg>
<svg class="i" width="22" height="22" style="left:175px;top:29px;"><use href="#saveas"/></svg>
<svg class="i" width="22" height="22" style="left:204px;top:29px;"><use href="#savecopy"/></svg>
<svg class="i" width="22" height="22" style="left:233px;top:29px;"><use href="#saveall"/></svg>
<div style="left:262px;top:33px;width:1px;height:14px;background:#c6c7c8;box-shadow:1px 0 0 #fbfbfb"></div>
<svg class="i" width="22" height="22" style="left:268px;top:29px;"><use href="#reload"/></svg>
<svg class="i" width="22" height="22" style="left:298px;top:29px;"><use href="#winclose"/></svg>
<div class="hdl" style="left:330px;top:31px;width:6px;height:18px;"></div>
<svg class="i" width="22" height="22" style="left:344px;top:29px;"><use href="#undo"/></svg>
<svg class="i" width="22" height="22" style="left:372px;top:29px;"><use href="#redo"/></svg>
<div style="left:401px;top:33px;width:1px;height:14px;background:#c6c7c8;box-shadow:1px 0 0 #fbfbfb"></div>
<svg class="i" width="22" height="22" style="left:408px;top:29px;"><use href="#cut"/></svg>
<svg class="i" width="22" height="22" style="left:437px;top:29px;"><use href="#copy"/></svg>
<svg class="i" width="22" height="22" style="left:466px;top:29px;"><use href="#paste"/></svg>
<svg class="i" width="22" height="22" style="left:495px;top:29px;"><use href="#clear"/></svg>
<div style="left:524px;top:33px;width:1px;height:14px;background:#c6c7c8;box-shadow:1px 0 0 #fbfbfb"></div>
<svg class="i" width="22" height="22" style="left:531px;top:29px;"><use href="#indent"/></svg>
<svg class="i" width="22" height="22" style="left:559px;top:29px;"><use href="#unindent"/></svg>
<div style="left:588px;top:33px;width:1px;height:14px;background:#c6c7c8;box-shadow:1px 0 0 #fbfbfb"></div>
<svg class="i" width="22" height="22" style="left:595px;top:29px;"><use href="#hash"/></svg>
<svg class="i" width="22" height="22" style="left:624px;top:29px;"><use href="#unhash"/></svg>
<svg class="i" width="22" height="22" style="left:654px;top:29px;"><use href="#toghash"/></svg>
<div class="hdl" style="left:687px;top:31px;width:6px;height:18px;"></div>
<svg class="i" width="22" height="22" style="left:699px;top:29px;"><use href="#Abig"/></svg>
<div style="left:725px;top:28px;width:28px;height:25px;background:#e1e2e3;border:1px solid #b2b3b4;border-radius:3px"></div>
<svg class="i" width="22" height="22" style="left:728px;top:29px;"><use href="#Asmall"/></svg>
<div class="hdl" style="left:762px;top:31px;width:6px;height:18px;"></div>
<svg class="i" width="22" height="22" style="left:773px;top:29px;"><use href="#bmadd"/></svg>
<svg class="i" width="22" height="22" style="left:803px;top:29px;"><use href="#bmnext"/></svg>
<svg class="i" width="22" height="22" style="left:832px;top:29px;"><use href="#bmprev"/></svg>
<div style="left:861px;top:33px;width:1px;height:14px;background:#c6c7c8;box-shadow:1px 0 0 #fbfbfb"></div>
<svg class="i" width="22" height="22" style="left:868px;top:29px;"><use href="#bugnext"/></svg>
<div style="left:897px;top:33px;width:1px;height:14px;background:#c6c7c8;box-shadow:1px 0 0 #fbfbfb"></div>
<svg class="i" width="22" height="22" style="left:904px;top:29px;"><use href="#warnnext"/></svg>
<svg class="i" width="22" height="22" style="left:933px;top:29px;"><use href="#warnprev"/></svg>
<div style="left:962px;top:33px;width:1px;height:14px;background:#c6c7c8;box-shadow:1px 0 0 #fbfbfb"></div>
<svg class="i" width="22" height="22" style="left:968px;top:29px;"><use href="#tasknext"/></svg>
<svg class="i" width="22" height="22" style="left:998px;top:29px;"><use href="#taskprev"/></svg>
<div style="left:1027px;top:33px;width:1px;height:14px;background:#c6c7c8;box-shadow:1px 0 0 #fbfbfb"></div>
<svg class="i" width="22" height="22" style="left:1034px;top:29px;"><use href="#chgnext"/></svg>
<svg class="i" width="22" height="22" style="left:1063px;top:29px;"><use href="#chgprev"/></svg>
<div class="hdl" style="left:1095px;top:31px;width:6px;height:18px;"></div>
<svg class="i" width="22" height="22" style="left:1108px;top:29px;"><use href="#bwin"/></svg>
<svg class="i" width="22" height="22" style="left:1137px;top:29px;"><use href="#bwinadd"/></svg>
<svg class="i" width="22" height="22" style="left:1166px;top:29px;"><use href="#bwindel"/></svg>
<div style="left:1195px;top:33px;width:1px;height:14px;background:#c6c7c8;box-shadow:1px 0 0 #fbfbfb"></div>
<svg class="i" width="22" height="22" style="left:1202px;top:29px;"><use href="#bwinglobe"/></svg>
<div class="hdl" style="left:1234px;top:31px;width:6px;height:18px;"></div>
<svg class="i" width="22" height="22" style="left:1247px;top:29px;"><use href="#conf"/></svg>
<svg class="i" width="22" height="22" style="left:1276px;top:29px;"><use href="#conf2"/></svg>
<svg class="i" width="22" height="22" style="left:1305px;top:29px;"><use href="#conf3"/></svg>
<svg class="i" width="22" height="22" style="left:1334px;top:29px;"><use href="#kbd"/></svg>
<svg class="i" width="22" height="22" style="left:1363px;top:29px;"><use href="#gearplay"/></svg>
<div class="hdl" style="left:1395px;top:31px;width:6px;height:18px;"></div>
<svg class="i" width="22" height="22" style="left:1408px;top:29px;"><use href="#whats"/></svg>
<div class="hdl" style="left:4px;top:64px;width:6px;height:18px;"></div>
<svg class="i" width="22" height="22" style="left:16px;top:62px;"><use href="#pnew"/></svg>
<svg class="i" width="22" height="22" style="left:45px;top:62px;"><use href="#popen"/></svg>
<svg class="i" width="22" height="22" style="left:74px;top:62px;"><use href="#pclose"/></svg>
<div style="left:103px;top:66px;width:1px;height:14px;background:#c6c7c8;box-shadow:1px 0 0 #fbfbfb"></div>
<svg class="i" width="22" height="22" style="left:110px;top:62px;"><use href="#psave"/></svg>
<svg class="i" width="22" height="22" style="left:138px;top:62px;"><use href="#psaveas"/></svg>
<div class="hdl" style="left:171px;top:64px;width:6px;height:18px;"></div>
<svg class="i" width="22" height="22" style="left:184px;top:62px;"><use href="#dblog"/></svg>
<svg class="i" width="22" height="22" style="left:213px;top:62px;"><use href="#dbhelp"/></svg>
<div style="left:242px;top:66px;width:1px;height:14px;background:#c6c7c8;box-shadow:1px 0 0 #fbfbfb"></div>
<svg class="i" width="22" height="22" style="left:249px;top:62px;"><use href="#dbdoc"/></svg>
<div style="left:278px;top:66px;width:1px;height:14px;background:#c6c7c8;box-shadow:1px 0 0 #fbfbfb"></div>
<svg class="i" width="22" height="22" style="left:285px;top:62px;"><use href="#dbpull"/></svg>
<svg class="i" width="22" height="22" style="left:314px;top:62px;"><use href="#dbpullr"/></svg>
<div style="left:343px;top:66px;width:1px;height:14px;background:#c6c7c8;box-shadow:1px 0 0 #fbfbfb"></div>
<svg class="i" width="22" height="22" style="left:350px;top:62px;"><use href="#dbin"/></svg>
<svg class="i" width="22" height="22" style="left:379px;top:62px;"><use href="#dbout"/></svg>
<div style="left:408px;top:66px;width:1px;height:14px;background:#c6c7c8;box-shadow:1px 0 0 #fbfbfb"></div>
<svg class="i" width="22" height="22" style="left:415px;top:62px;"><use href="#dbtag"/></svg>
<svg class="i" width="22" height="22" style="left:444px;top:62px;"><use href="#merge"/></svg>
<div style="left:473px;top:66px;width:1px;height:14px;background:#c6c7c8;box-shadow:1px 0 0 #fbfbfb"></div>
<svg class="i" width="22" height="22" style="left:480px;top:62px;"><use href="#dbback"/></svg>
<div style="left:509px;top:66px;width:1px;height:14px;background:#c6c7c8;box-shadow:1px 0 0 #fbfbfb"></div>
<svg class="i" width="22" height="22" style="left:516px;top:62px;"><use href="#dbfind"/></svg>
<svg class="i" width="22" height="22" style="left:545px;top:62px;"><use href="#dbadd"/></svg>
<div class="hdl" style="left:578px;top:64px;width:6px;height:18px;"></div>
<svg class="i" width="22" height="22" style="left:590px;top:62px;"><use href="#zin"/></svg>
<svg class="i" width="22" height="22" style="left:619px;top:62px;"><use href="#zout"/></svg>
<svg class="i" width="22" height="22" style="left:648px;top:62px;"><use href="#zreset"/></svg>
<svg class="i" width="22" height="22" style="left:676px;top:62px;"><use href="#zfit"/></svg>
<div style="left:706px;top:66px;width:1px;height:14px;background:#c6c7c8;box-shadow:1px 0 0 #fbfbfb"></div>
<div style="left:710px;top:61px;width:28px;height:25px;background:#e1e2e3;border:1px solid #b2b3b4;border-radius:3px"></div>
<svg class="i" width="22" height="22" style="left:713px;top:62px;"><use href="#image"/></svg>
<svg class="i" width="22" height="22" style="left:742px;top:62px;"><use href="#appdiag"/></svg>
<svg class="i" width="22" height="22" style="left:771px;top:62px;"><use href="#grid4"/></svg>
<div style="left:800px;top:66px;width:1px;height:14px;background:#c6c7c8;box-shadow:1px 0 0 #fbfbfb"></div>
<svg class="i" width="22" height="22" style="left:807px;top:62px;"><use href="#twodocs"/></svg>
<svg class="i" width="22" height="22" style="left:836px;top:62px;"><use href="#table"/></svg>
<div style="left:865px;top:66px;width:1px;height:14px;background:#c6c7c8;box-shadow:1px 0 0 #fbfbfb"></div>
<svg class="i" width="22" height="22" style="left:872px;top:62px;"><use href="#cleartasks"/></svg>
<div class="hdl" style="left:904px;top:64px;width:6px;height:18px;"></div>
<svg class="i" width="22" height="22" style="left:917px;top:62px;"><use href="#restart"/></svg>
<svg class="i" width="22" height="22" style="left:946px;top:62px;"><use href="#stop"/></svg>
<div style="left:975px;top:66px;width:1px;height:14px;background:#c6c7c8;box-shadow:1px 0 0 #fbfbfb"></div>
<svg class="i" width="22" height="22" style="left:982px;top:62px;"><use href="#pygear"/></svg>
<svg class="i" width="22" height="22" style="left:1011px;top:62px;"><use href="#projgear"/></svg>
<div style="left:1040px;top:66px;width:1px;height:14px;background:#c6c7c8;box-shadow:1px 0 0 #fbfbfb"></div>
<svg class="i" width="22" height="22" style="left:1047px;top:62px;"><use href="#pymag"/></svg>
<svg class="i" width="22" height="22" style="left:1076px;top:62px;"><use href="#projmag"/></svg>
<div class="hdl" style="left:1108px;top:64px;width:6px;height:18px;"></div>
<div style="left:1118px;top:61px;width:28px;height:25px;background:#e1e2e3;border:1px solid #b2b3b4;border-radius:3px"></div>
<svg class="i" width="22" height="22" style="left:1121px;top:62px;"><use href="#winedit"/></svg>
<svg class="i" width="22" height="22" style="left:1150px;top:62px;"><use href="#winwrench"/></svg>
<div class="hdl" style="left:1182px;top:64px;width:6px;height:18px;"></div>
<svg class="i" width="22" height="22" style="left:1195px;top:62px;"><use href="#qtedit"/></svg>
<svg class="i" width="22" height="22" style="left:1224px;top:62px;"><use href="#qtlang"/></svg>
<div style="left:1253px;top:66px;width:1px;height:14px;background:#c6c7c8;box-shadow:1px 0 0 #fbfbfb"></div>
<svg class="i" width="22" height="22" style="left:1260px;top:62px;"><use href="#winqtedit"/></svg>
<svg class="i" width="22" height="22" style="left:1289px;top:62px;"><use href="#winqtlang"/></svg>
<div style="left:1318px;top:66px;width:1px;height:14px;background:#c6c7c8;box-shadow:1px 0 0 #fbfbfb"></div>
<svg class="i" width="22" height="22" style="left:1324px;top:62px;"><use href="#docpm"/></svg>
<svg class="i" width="22" height="22" style="left:1354px;top:62px;"><use href="#swap"/></svg>
<div style="left:1383px;top:66px;width:1px;height:14px;background:#c6c7c8;box-shadow:1px 0 0 #fbfbfb"></div>
<svg class="i" width="22" height="22" style="left:1391px;top:62px;"><use href="#dbplain"/></svg>
<div style="left:1419px;top:66px;width:1px;height:14px;background:#c6c7c8;box-shadow:1px 0 0 #fbfbfb"></div>
<svg class="i" width="22" height="22" style="left:1425px;top:62px;"><use href="#noteedit"/></svg>
<svg class="i" width="22" height="22" style="left:1455px;top:62px;"><use href="#cham1"/></svg>
<svg class="i" width="22" height="22" style="left:1484px;top:62px;"><use href="#cham2"/></svg>
<svg class="i" width="22" height="22" style="left:1512px;top:62px;"><use href="#cham3"/></svg>
<div style="left:1542px;top:66px;width:1px;height:14px;background:#c6c7c8;box-shadow:1px 0 0 #fbfbfb"></div>
<svg class="i" width="22" height="22" style="left:1549px;top:62px;"><use href="#cham4"/></svg>
<div class="gs" style="left:0px;top:90px;width:36px;height:1177px;"></div>
<div style="left:2px;top:130px;width:32px;height:32px;background:#173a10"></div>
<svg class="i" width="28" height="28" style="left:4px;top:94px;"><use href="#sb_mp"/></svg>
<svg class="i" width="28" height="28" style="left:4px;top:132px;"><use href="#sb_proj"/></svg>
<svg class="i" width="28" height="28" style="left:4px;top:170px;"><use href="#sb_find"/></svg>
<svg class="i" width="28" height="28" style="left:4px;top:208px;"><use href="#sb_findloc"/></svg>
<svg class="i" width="28" height="28" style="left:4px;top:246px;"><use href="#sb_vcs"/></svg>
<svg class="i" width="28" height="28" style="left:4px;top:284px;"><use href="#sb_tmpl"/></svg>
<svg class="i" width="28" height="28" style="left:4px;top:322px;"><use href="#sb_cls"/></svg>
<svg class="i" width="28" height="28" style="left:4px;top:360px;"><use href="#sb_uni"/></svg>
<div style="left:40.3px;top:100.5px;width:15px;height:15px;border-radius:50%;background:radial-gradient(circle at 38% 32%,#fff 0,#ffff66 14%,#e6e600 48%,#8c8c00 100%);box-shadow:1.5px 1.5px 1.5px rgba(0,0,0,.45)"></div>
<div class="tab" style="left:101px;top:92px;width:45px;height:27px;"></div>
<div class="tab" style="left:145px;top:92px;width:45px;height:27px;"></div>
<div class="tab" style="left:189px;top:92px;width:44px;height:27px;"></div>
<div style="left:39px;top:118px;width:426px;height:1148px;border:1px solid #b7b8b9;background:#fcfcfc"></div>
<div class="tab on" style="left:57px;top:90px;width:45px;height:29px;"></div>
<svg class="i" width="16" height="16" style="left:69.3px;top:96px;"><use href="#py16"/></svg>
<svg class="i" width="20" height="20" style="left:111px;top:95px;"><use href="#qtedit"/></svg>
<svg class="i" width="20" height="20" style="left:154.8px;top:95px;"><use href="#qtlang"/></svg>
<svg class="i" width="18" height="18" style="left:199.6px;top:96px;"><use href="#docplain"/></svg>
<div style="left:41px;top:120px;width:422px;height:1145px;border:1px solid #b7b8b9;background:#fff;overflow:hidden"><div class="hd" style="left:0;top:0;width:406px;height:22px"></div><div class="t" style="left:2.6000000000000014px;top:1px;font-size:13.6px;letter-spacing:0.07px;">Name</div><div class="" style="left:0;top:22px;width:406px;height:20px"></div><svg class="i" width="1" height="1" style="left:30px;top:32px"><path d="M-2,-4L2,0L-2,4Z" fill="#6e7173"/></svg><svg class="i" width="16" height="16" style="left:43px;top:24px"><use href="#fold16"/></svg><div class="t" style="left:65px;top:22px;font-size:13.4px;letter-spacing:0.125px;">EricUtilities</div><div class="alt" style="left:0;top:42px;width:406px;height:20px"></div><svg class="i" width="1" height="1" style="left:30px;top:52px"><path d="M-2,-4L2,0L-2,4Z" fill="#6e7173"/></svg><svg class="i" width="16" height="16" style="left:43px;top:44px"><use href="#fold16"/></svg><div class="t" style="left:65px;top:42px;font-size:13.4px;letter-spacing:0.021px;">EricWidgets</div><div class="" style="left:0;top:62px;width:406px;height:20px"></div><svg class="i" width="1" height="1" style="left:30px;top:72px"><path d="M-2,-4L2,0L-2,4Z" fill="#6e7173"/></svg><svg class="i" width="16" height="16" style="left:43px;top:64px"><use href="#fold16"/></svg><div class="t" style="left:65px;top:62px;font-size:13.4px;letter-spacing:-0.335px;">EricXML</div><div class="alt" style="left:0;top:82px;width:406px;height:20px"></div><svg class="i" width="1" height="1" style="left:30px;top:92px"><path d="M-2,-4L2,0L-2,4Z" fill="#6e7173"/></svg><svg class="i" width="16" height="16" style="left:43px;top:84px"><use href="#fold16"/></svg><div class="t" style="left:65px;top:82px;font-size:13.4px;letter-spacing:0.001px;">Globals</div><div class="" style="left:0;top:102px;width:406px;height:20px"></div><svg class="i" width="1" height="1" style="left:30px;top:112px"><path d="M-2,-4L2,0L-2,4Z" fill="#6e7173"/></svg><svg class="i" width="16" height="16" style="left:43px;top:104px"><use href="#fold16"/></svg><div class="t" style="left:65px;top:102px;font-size:13.4px;letter-spacing:0.027px;">Graphics</div><div class="alt" style="left:0;top:122px;width:406px;height:20px"></div><svg class="i" width="1" height="1" style="left:30px;top:132px"><path d="M-2,-4L2,0L-2,4Z" fill="#6e7173"/></svg><svg class="i" width="16" height="16" style="left:43px;top:124px"><use href="#fold16"/></svg><div class="t" style="left:65px;top:122px;font-size:13.4px;letter-spacing:0.127px;">HelpViewer</div><div class="" style="left:0;top:142px;width:406px;height:20px"></div><svg class="i" width="1" height="1" style="left:30px;top:152px"><path d="M-2,-4L2,0L-2,4Z" fill="#6e7173"/></svg><svg class="i" width="16" height="16" style="left:43px;top:144px"><use href="#fold16"/></svg><div class="t" style="left:65px;top:142px;font-size:13.4px;letter-spacing:0.011px;">HexEdit</div><div class="alt" style="left:0;top:162px;width:406px;height:20px"></div><svg class="i" width="1" height="1" style="left:30px;top:172px"><path d="M-2,-4L2,0L-2,4Z" fill="#6e7173"/></svg><svg class="i" width="16" height="16" style="left:43px;top:164px"><use href="#fold16"/></svg><div class="t" style="left:65px;top:162px;font-size:13.4px;letter-spacing:0.256px;">IconEditor</div><div class="" style="left:0;top:182px;width:406px;height:20px"></div><svg class="i" width="1" height="1" style="left:30px;top:192px"><path d="M-2,-4L2,0L-2,4Z" fill="#6e7173"/></svg><svg class="i" width="16" height="16" style="left:43px;top:184px"><use href="#fold16"/></svg><div class="t" style="left:65px;top:182px;font-size:13.4px;letter-spacing:0.038px;">JediInterface</div><div class="alt" style="left:0;top:202px;width:406px;height:20px"></div><svg class="i" width="1" height="1" style="left:30px;top:212px"><path d="M-2,-4L2,0L-2,4Z" fill="#6e7173"/></svg><svg class="i" width="16" height="16" style="left:43px;top:204px"><use href="#fold16"/></svg><div class="t" style="left:65px;top:202px;font-size:13.4px;letter-spacing:0.28px;">MicroPython</div><div class="" style="left:0;top:222px;width:406px;height:20px"></div><svg class="i" width="1" height="1" style="left:30px;top:232px"><path d="M-2,-4L2,0L-2,4Z" fill="#6e7173"/></svg><svg class="i" width="16" height="16" style="left:43px;top:224px"><use href="#fold16"/></svg><div class="t" style="left:65px;top:222px;font-size:13.4px;letter-spacing:0.314px;">MultiProject</div><div class="alt" style="left:0;top:242px;width:406px;height:20px"></div><svg class="i" width="1" height="1" style="left:30px;top:252px"><path d="M-2,-4L2,0L-2,4Z" fill="#6e7173"/></svg><svg class="i" width="16" height="16" style="left:43px;top:244px"><use href="#fold16"/></svg><div class="t" style="left:65px;top:242px;font-size:13.4px;letter-spacing:0.43px;">Network</div><div class="" style="left:0;top:262px;width:406px;height:20px"></div><svg class="i" width="1" height="1" style="left:30px;top:272px"><path d="M-2,-4L2,0L-2,4Z" fill="#6e7173"/></svg><svg class="i" width="16" height="16" style="left:43px;top:264px"><use href="#fold16"/></svg><div class="t" style="left:65px;top:262px;font-size:13.4px;letter-spacing:0.224px;">PipInterface</div><div class="alt" style="left:0;top:282px;width:406px;height:20px"></div><svg class="i" width="1" height="1" style="left:30px;top:292px"><path d="M-2,-4L2,0L-2,4Z" fill="#6e7173"/></svg><svg class="i" width="16" height="16" style="left:43px;top:284px"><use href="#fold16"/></svg><div class="t" style="left:65px;top:282px;font-size:13.4px;letter-spacing:0.26px;">PluginManager</div><div class="" style="left:0;top:302px;width:406px;height:20px"></div><div class="yl" style="left:40px;top:302px;width:366px;height:20px"></div><svg class="i" width="1" height="1" style="left:30px;top:312px"><path d="M-4,-2L0,2L4,-2Z" fill="#6e7173"/></svg><svg class="i" width="16" height="16" style="left:43px;top:304px"><use href="#fold16"/></svg><div class="t" style="left:65px;top:302px;font-size:13.4px;letter-spacing:0.115px;">Plugins</div><div class="alt" style="left:0;top:322px;width:406px;height:20px"></div><svg class="i" width="1" height="1" style="left:50px;top:332px"><path d="M-2,-4L2,0L-2,4Z" fill="#6e7173"/></svg><svg class="i" width="16" height="16" style="left:63px;top:324px"><use href="#fold16"/></svg><div class="t" style="left:85px;top:322px;font-size:13.4px;letter-spacing:0.28px;">AboutPlugin</div><div class="" style="left:0;top:342px;width:406px;height:20px"></div><div class="yl" style="left:60px;top:342px;width:346px;height:20px"></div><svg class="i" width="1" height="1" style="left:50px;top:352px"><path d="M-4,-2L0,2L4,-2Z" fill="#6e7173"/></svg><svg class="i" width="16" height="16" style="left:63px;top:344px"><use href="#fold16"/></svg><div class="t" style="left:85px;top:342px;font-size:13.4px;letter-spacing:0.018px;">CheckerPlugins</div><div class="alt" style="left:0;top:362px;width:406px;height:20px"></div><div class="yl" style="left:80px;top:362px;width:326px;height:20px"></div><svg class="i" width="1" height="1" style="left:70px;top:372px"><path d="M-2,-4L2,0L-2,4Z" fill="#6e7173"/></svg><svg class="i" width="16" height="16" style="left:83px;top:364px"><use href="#fold16"/></svg><div class="t" style="left:105px;top:362px;font-size:13.4px;letter-spacing:-0.123px;">CodeStyleChecker</div><div class="" style="left:0;top:382px;width:406px;height:20px"></div><svg class="i" width="1" height="1" style="left:70px;top:392px"><path d="M-4,-2L0,2L4,-2Z" fill="#6e7173"/></svg><svg class="i" width="16" height="16" style="left:83px;top:384px"><use href="#fold16"/></svg><div class="t" style="left:105px;top:382px;font-size:13.4px;letter-spacing:-0.074px;">SyntaxChecker</div><div class="alt" style="left:0;top:402px;width:406px;height:20px"></div><svg class="i" width="1" height="1" style="left:90px;top:412px"><path d="M-2,-4L2,0L-2,4Z" fill="#6e7173"/></svg><svg class="i" width="16" height="16" style="left:103px;top:404px"><use href="#fold16"/></svg><div class="t" style="left:125px;top:402px;font-size:13.4px;letter-spacing:0.121px;">pyflakes</div><div class="" style="left:0;top:422px;width:406px;height:20px"></div><svg class="i" width="1" height="1" style="left:90px;top:432px"><path d="M-2,-4L2,0L-2,4Z" fill="#6e7173"/></svg><svg class="i" width="16" height="16" style="left:103px;top:424px"><use href="#py16"/></svg><div class="t" style="left:125px;top:422px;font-size:13.4px;letter-spacing:0.224px;"><span class="u">_</span><span class="u">_</span>init<span class="u">_</span><span class="u">_</span>.py</div><div class="alt" style="left:0;top:442px;width:406px;height:20px"></div><svg class="i" width="1" height="1" style="left:90px;top:452px"><path d="M-2,-4L2,0L-2,4Z" fill="#6e7173"/></svg><svg class="i" width="16" height="16" style="left:103px;top:444px"><use href="#py16"/></svg><div class="t" style="left:125px;top:442px;font-size:13.4px;letter-spacing:-0.109px;">SyntaxCheck.py</div><div class="" style="left:0;top:462px;width:406px;height:20px"></div><svg class="i" width="1" height="1" style="left:90px;top:472px"><path d="M-2,-4L2,0L-2,4Z" fill="#6e7173"/></svg><svg class="i" width="16" height="16" style="left:103px;top:464px"><use href="#py16"/></svg><div class="t" style="left:125px;top:462px;font-size:13.4px;letter-spacing:-0.139px;">SyntaxCheckService.py</div><div class="sel" style="left:0;top:482px;width:406px;height:20px"></div><svg class="i" width="1" height="1" style="left:90px;top:492px"><path d="M-4,-2L0,2L4,-2Z" fill="#e8f4fb"/></svg><svg class="i" width="16" height="16" style="left:103px;top:484px;opacity:.55"><use href="#py16"/></svg><div class="t" style="left:125px;top:482px;font-size:13.4px;letter-spacing:0.023px;color:#fcfcfc;">SyntaxCheckerDialog.py</div><div class="" style="left:0;top:502px;width:406px;height:20px"></div><svg class="i" width="16" height="16" style="left:123px;top:504px"><use href="#uni16"/></svg><div class="t" style="left:145px;top:502px;font-size:13.4px;letter-spacing:0.171px;">Coding: utf-8</div><div class="alt" style="left:0;top:522px;width:406px;height:20px"></div><svg class="i" width="1" height="1" style="left:110px;top:532px"><path d="M-2,-4L2,0L-2,4Z" fill="#6e7173"/></svg><svg class="i" width="16" height="16" style="left:123px;top:524px"><use href="#imp16"/></svg><div class="t" style="left:145px;top:522px;font-size:13.4px;letter-spacing:0.558px;">Imports</div><div class="" style="left:0;top:542px;width:406px;height:20px"></div><svg class="i" width="1" height="1" style="left:110px;top:552px"><path d="M-2,-4L2,0L-2,4Z" fill="#6e7173"/></svg><svg class="i" width="16" height="16" style="left:123px;top:544px"><use href="#cls16"/></svg><div class="t" style="left:145px;top:542px;font-size:13.4px;letter-spacing:0.001px;">SyntaxCheckerDialog(QDialog, Ui<span class="u">_</span>SyntaxCheckerDialog)</div><div class="alt" style="left:0;top:562px;width:406px;height:20px"></div><svg class="i" width="1" height="1" style="left:90px;top:572px"><path d="M-2,-4L2,0L-2,4Z" fill="#6e7173"/></svg><svg class="i" width="16" height="16" style="left:103px;top:564px"><use href="#py16"/></svg><div class="t" style="left:125px;top:562px;font-size:13.4px;letter-spacing:-0.103px;">jsCheckSyntax.py</div><div class="" style="left:0;top:582px;width:406px;height:20px"></div><svg class="i" width="1" height="1" style="left:90px;top:592px"><path d="M-2,-4L2,0L-2,4Z" fill="#6e7173"/></svg><svg class="i" width="16" height="16" style="left:103px;top:584px"><use href="#py16"/></svg><div class="t" style="left:125px;top:582px;font-size:13.4px;letter-spacing:-0.038px;">jsonCheckSyntax.py</div><div class="alt" style="left:0;top:602px;width:406px;height:20px"></div><svg class="i" width="1" height="1" style="left:90px;top:612px"><path d="M-2,-4L2,0L-2,4Z" fill="#6e7173"/></svg><svg class="i" width="16" height="16" style="left:103px;top:604px"><use href="#py16"/></svg><div class="t" style="left:125px;top:602px;font-size:13.4px;letter-spacing:0.065px;">tomlCheckSyntax.py</div><div class="" style="left:0;top:622px;width:406px;height:20px"></div><svg class="i" width="1" height="1" style="left:90px;top:632px"><path d="M-2,-4L2,0L-2,4Z" fill="#6e7173"/></svg><svg class="i" width="16" height="16" style="left:103px;top:624px"><use href="#py16"/></svg><div class="t" style="left:125px;top:622px;font-size:13.4px;letter-spacing:-0.025px;">yamlCheckSyntax.py</div><div class="alt" style="left:0;top:642px;width:406px;height:20px"></div><svg class="i" width="1" height="1" style="left:70px;top:652px"><path d="M-2,-4L2,0L-2,4Z" fill="#6e7173"/></svg><svg class="i" width="16" height="16" style="left:83px;top:644px"><use href="#py16"/></svg><div class="t" style="left:105px;top:642px;font-size:13.4px;letter-spacing:0.224px;"><span class="u">_</span><span class="u">_</span>init<span class="u">_</span><span class="u">_</span>.py</div><div class="" style="left:0;top:662px;width:406px;height:20px"></div><svg class="i" width="1" height="1" style="left:50px;top:672px"><path d="M-2,-4L2,0L-2,4Z" fill="#6e7173"/></svg><svg class="i" width="16" height="16" style="left:63px;top:664px"><use href="#fold16"/></svg><div class="t" style="left:85px;top:662px;font-size:13.4px;letter-spacing:0.276px;">DocumentationPlugins</div><div class="alt" style="left:0;top:682px;width:406px;height:20px"></div><svg class="i" width="1" height="1" style="left:50px;top:692px"><path d="M-2,-4L2,0L-2,4Z" fill="#6e7173"/></svg><svg class="i" width="16" height="16" style="left:63px;top:684px"><use href="#fold16"/></svg><div class="t" style="left:85px;top:682px;font-size:13.4px;letter-spacing:0.09px;">UiExtensionPlugins</div><div class="" style="left:0;top:702px;width:406px;height:20px"></div><svg class="i" width="1" height="1" style="left:50px;top:712px"><path d="M-2,-4L2,0L-2,4Z" fill="#6e7173"/></svg><svg class="i" width="16" height="16" style="left:63px;top:704px"><use href="#fold16"/></svg><div class="t" style="left:85px;top:702px;font-size:13.4px;letter-spacing:-0.132px;">VcsPlugins</div><div class="alt" style="left:0;top:722px;width:406px;height:20px"></div><svg class="i" width="1" height="1" style="left:50px;top:732px"><path d="M-2,-4L2,0L-2,4Z" fill="#6e7173"/></svg><svg class="i" width="16" height="16" style="left:63px;top:724px"><use href="#fold16"/></svg><div class="t" style="left:85px;top:722px;font-size:13.4px;letter-spacing:0.151px;">ViewManagerPlugins</div><div class="" style="left:0;top:742px;width:406px;height:20px"></div><svg class="i" width="1" height="1" style="left:50px;top:752px"><path d="M-2,-4L2,0L-2,4Z" fill="#6e7173"/></svg><svg class="i" width="16" height="16" style="left:63px;top:744px"><use href="#fold16"/></svg><div class="t" style="left:85px;top:742px;font-size:13.4px;letter-spacing:0.094px;">WizardPlugins</div><div class="alt" style="left:0;top:762px;width:406px;height:20px"></div><svg class="i" width="1" height="1" style="left:50px;top:772px"><path d="M-2,-4L2,0L-2,4Z" fill="#6e7173"/></svg><svg class="i" width="16" height="16" style="left:63px;top:764px"><use href="#py16"/></svg><div class="t" style="left:85px;top:762px;font-size:13.4px;letter-spacing:0.224px;"><span class="u">_</span><span class="u">_</span>init<span class="u">_</span><span class="u">_</span>.py</div><div class="" style="left:0;top:782px;width:406px;height:20px"></div><svg class="i" width="1" height="1" style="left:50px;top:792px"><path d="M-2,-4L2,0L-2,4Z" fill="#6e7173"/></svg><svg class="i" width="16" height="16" style="left:63px;top:784px"><use href="#py16"/></svg><div class="t" style="left:85px;top:782px;font-size:13.4px;letter-spacing:0.233px;">PluginAbout.py</div><div class="alt" style="left:0;top:802px;width:406px;height:20px"></div><svg class="i" width="1" height="1" style="left:50px;top:812px"><path d="M-2,-4L2,0L-2,4Z" fill="#6e7173"/></svg><svg class="i" width="16" height="16" style="left:63px;top:804px"><use href="#py16"/></svg><div class="t" style="left:85px;top:802px;font-size:13.4px;letter-spacing:0.01px;">PluginCodeStyleChecker.py</div><div class="" style="left:0;top:822px;width:406px;height:20px"></div><svg class="i" width="1" height="1" style="left:50px;top:832px"><path d="M-2,-4L2,0L-2,4Z" fill="#6e7173"/></svg><svg class="i" width="16" height="16" style="left:63px;top:824px"><use href="#py16"/></svg><div class="t" style="left:85px;top:822px;font-size:13.4px;letter-spacing:0.078px;">PluginEricapi.py</div><div class="alt" style="left:0;top:842px;width:406px;height:20px"></div><svg class="i" width="1" height="1" style="left:50px;top:852px"><path d="M-2,-4L2,0L-2,4Z" fill="#6e7173"/></svg><svg class="i" width="16" height="16" style="left:63px;top:844px"><use href="#py16"/></svg><div class="t" style="left:85px;top:842px;font-size:13.4px;letter-spacing:0.061px;">PluginEricdoc.py</div><div class="" style="left:0;top:862px;width:406px;height:20px"></div><svg class="i" width="1" height="1" style="left:50px;top:872px"><path d="M-2,-4L2,0L-2,4Z" fill="#6e7173"/></svg><svg class="i" width="16" height="16" style="left:63px;top:864px"><use href="#py16"/></svg><div class="t" style="left:85px;top:862px;font-size:13.4px;letter-spacing:0.058px;">PluginSyntaxChecker.py</div><div class="alt" style="left:0;top:882px;width:406px;height:20px"></div><svg class="i" width="1" height="1" style="left:50px;top:892px"><path d="M-2,-4L2,0L-2,4Z" fill="#6e7173"/></svg><svg class="i" width="16" height="16" style="left:63px;top:884px"><use href="#py16"/></svg><div class="t" style="left:85px;top:882px;font-size:13.4px;letter-spacing:0.261px;">PluginTranslator.py</div><div class="" style="left:0;top:902px;width:406px;height:20px"></div><svg class="i" width="1" height="1" style="left:50px;top:912px"><path d="M-2,-4L2,0L-2,4Z" fill="#6e7173"/></svg><svg class="i" width="16" height="16" style="left:63px;top:904px"><use href="#py16"/></svg><div class="t" style="left:85px;top:902px;font-size:13.4px;letter-spacing:-0.02px;">PluginVcsGit.py</div><div class="alt" style="left:0;top:922px;width:406px;height:20px"></div><svg class="i" width="1" height="1" style="left:50px;top:932px"><path d="M-2,-4L2,0L-2,4Z" fill="#6e7173"/></svg><svg class="i" width="16" height="16" style="left:63px;top:924px"><use href="#py16"/></svg><div class="t" style="left:85px;top:922px;font-size:13.4px;letter-spacing:0.108px;">PluginVcsMercurial.py</div><div class="" style="left:0;top:942px;width:406px;height:20px"></div><svg class="i" width="1" height="1" style="left:50px;top:952px"><path d="M-2,-4L2,0L-2,4Z" fill="#6e7173"/></svg><svg class="i" width="16" height="16" style="left:63px;top:944px"><use href="#py16"/></svg><div class="t" style="left:85px;top:942px;font-size:13.4px;letter-spacing:-0.187px;">PluginVcsPySvn.py</div><div class="alt" style="left:0;top:962px;width:406px;height:20px"></div><svg class="i" width="1" height="1" style="left:50px;top:972px"><path d="M-2,-4L2,0L-2,4Z" fill="#6e7173"/></svg><svg class="i" width="16" height="16" style="left:63px;top:964px"><use href="#py16"/></svg><div class="t" style="left:85px;top:962px;font-size:13.4px;letter-spacing:0.005px;">PluginVcsSubversion.py</div><div class="" style="left:0;top:982px;width:406px;height:20px"></div><svg class="i" width="1" height="1" style="left:50px;top:992px"><path d="M-2,-4L2,0L-2,4Z" fill="#6e7173"/></svg><svg class="i" width="16" height="16" style="left:63px;top:984px"><use href="#py16"/></svg><div class="t" style="left:85px;top:982px;font-size:13.4px;letter-spacing:0.036px;">PluginVmListspace.py</div><div class="alt" style="left:0;top:1002px;width:406px;height:20px"></div><svg class="i" width="1" height="1" style="left:50px;top:1012px"><path d="M-2,-4L2,0L-2,4Z" fill="#6e7173"/></svg><svg class="i" width="16" height="16" style="left:63px;top:1004px"><use href="#py16"/></svg><div class="t" style="left:85px;top:1002px;font-size:13.4px;letter-spacing:0.196px;">PluginVmTabview.py</div><div class="" style="left:0;top:1022px;width:406px;height:20px"></div><svg class="i" width="1" height="1" style="left:50px;top:1032px"><path d="M-2,-4L2,0L-2,4Z" fill="#6e7173"/></svg><svg class="i" width="16" height="16" style="left:63px;top:1024px"><use href="#py16"/></svg><div class="t" style="left:85px;top:1022px;font-size:13.4px;letter-spacing:0.173px;">PluginWizardDotDesktop.py</div><div class="alt" style="left:0;top:1042px;width:406px;height:20px"></div><svg class="i" width="1" height="1" style="left:50px;top:1052px"><path d="M-2,-4L2,0L-2,4Z" fill="#6e7173"/></svg><svg class="i" width="16" height="16" style="left:63px;top:1044px"><use href="#py16"/></svg><div class="t" style="left:85px;top:1042px;font-size:13.4px;letter-spacing:0.025px;">PluginWizardEricMessageBox.py</div><div class="" style="left:0;top:1062px;width:406px;height:20px"></div><svg class="i" width="1" height="1" style="left:50px;top:1072px"><path d="M-2,-4L2,0L-2,4Z" fill="#6e7173"/></svg><svg class="i" width="16" height="16" style="left:63px;top:1064px"><use href="#py16"/></svg><div class="t" style="left:85px;top:1062px;font-size:13.4px;letter-spacing:0.09px;">PluginWizardEricPlugin.py</div><div class="alt" style="left:0;top:1082px;width:406px;height:20px"></div><svg class="i" width="1" height="1" style="left:50px;top:1092px"><path d="M-2,-4L2,0L-2,4Z" fill="#6e7173"/></svg><svg class="i" width="16" height="16" style="left:63px;top:1084px"><use href="#py16"/></svg><div class="t" style="left:85px;top:1082px;font-size:13.4px;letter-spacing:-0.066px;">PluginWizardPyRegExp.py</div><div class="" style="left:0;top:1102px;width:406px;height:20px"></div><svg class="i" width="1" height="1" style="left:50px;top:1112px"><path d="M-2,-4L2,0L-2,4Z" fill="#6e7173"/></svg><svg class="i" width="16" height="16" style="left:63px;top:1104px"><use href="#py16"/></svg><div class="t" style="left:85px;top:1102px;font-size:13.4px;letter-spacing:0.128px;">PluginWizardQColorDialog.py</div><div class="alt" style="left:0;top:1122px;width:406px;height:20px"></div><svg class="i" width="1" height="1" style="left:50px;top:1132px"><path d="M-2,-4L2,0L-2,4Z" fill="#6e7173"/></svg><svg class="i" width="16" height="16" style="left:63px;top:1124px"><use href="#py16"/></svg><div class="t" style="left:85px;top:1122px;font-size:13.4px;letter-spacing:0.078px;">PluginWizardQFileDialog.py</div></div>
<div style="left:448px;top:120px;width:15px;height:1131px;background:#ececec;border:1px solid #b9b9b9"></div>
<div style="left:448px;top:120px;width:15px;height:15px;background:linear-gradient(90deg,#fff,#f5f5f5);border:1px solid #b9b9b9"><svg class="i" width="1" height="1" style="left:6.5px;top:6.5px"><path d="M-3.5,2L0,-2L3.5,2Z" fill="#6a6c6e"/></svg></div>
<div style="left:448px;top:1236px;width:15px;height:15px;background:linear-gradient(90deg,#fff,#f5f5f5);border:1px solid #b9b9b9"><svg class="i" width="1" height="1" style="left:6.5px;top:6.5px"><path d="M-3.5,-2L0,2L3.5,-2Z" fill="#6a6c6e"/></svg></div>
<div style="left:448px;top:228px;width:15px;height:434px;background:linear-gradient(90deg,#fff,#f7f7f7);border:1px solid #b9b9b9"></div>
<div style="left:41px;top:1250px;width:408px;height:15px;background:#ececec;border:1px solid #b9b9b9"></div>
<div style="left:41px;top:1250px;width:15px;height:15px;background:linear-gradient(180deg,#fff,#f5f5f5);border:1px solid #b9b9b9"><svg class="i" width="1" height="1" style="left:6px;top:6.5px"><path d="M2,-3.5L-2,0L2,3.5Z" fill="#6a6c6e"/></svg></div>
<div style="left:434px;top:1250px;width:15px;height:15px;background:linear-gradient(180deg,#fff,#f5f5f5);border:1px solid #b9b9b9"><svg class="i" width="1" height="1" style="left:7px;top:6.5px"><path d="M-2,-3.5L2,0L-2,3.5Z" fill="#6a6c6e"/></svg></div>
<div style="left:55px;top:1250px;width:224px;height:15px;background:linear-gradient(180deg,#fff,#f7f7f7);border:1px solid #b9b9b9"></div>
<div style="left:449px;top:1251px;width:13px;height:13px;background:#eff0f1"></div>
<div style="left:471.0px;top:103.9px;width:15px;height:15px;border-radius:50%;background:radial-gradient(circle at 38% 32%,#fff 0,#ff8080 14%,#e00000 48%,#7a0000 100%);box-shadow:1.5px 1.5px 1.5px rgba(0,0,0,.45)"></div>
<div class="tab" style="left:488px;top:93px;width:168px;height:29px;"></div>
<div class="t" style="left:528.2px;top:97.5px;font-size:13.6px;letter-spacing:0.097px;">eric7/eric7.py</div>
<svg class="i" width="13.6" height="13.6" style="left:625px;top:101px;"><use href="#tabclose"/></svg>
<div style="left:470px;top:121px;width:1022px;height:454px;border:1px solid #b7b8b9;background:#fcfcfc"></div>
<div class="tab on" style="left:655px;top:91px;width:359px;height:31px;"></div>
<div class="t" style="left:695px;top:97px;font-size:13.6px;letter-spacing:-0.053px;">...ins/SyntaxChecker/SyntaxCheckerDialog.py</div>
<svg class="i" width="13.6" height="13.6" style="left:984.5px;top:100px;"><use href="#tabclose"/></svg>
<div style="left:1468px;top:98px;width:24px;height:22px;border:1px solid #bcbdbe;border-radius:3px;background:linear-gradient(180deg,#fdfdfd,#f3f4f4)"><svg class="i" width="22" height="20" style="left:0;top:0"><path d="M4.5,6L11,13L17.5,6" fill="none" stroke="#3b3f42" stroke-width="1.2"/><path d="M16.5,15.5H20.5L18.5,18Z" fill="#3b3f42"/></svg></div>
<div style="left:1468px;top:587px;width:24px;height:22px;border:1px solid #bcbdbe;border-radius:3px;background:linear-gradient(180deg,#fdfdfd,#f3f4f4)"><svg class="i" width="22" height="20" style="left:0;top:0"><path d="M4.5,6L11,13L17.5,6" fill="none" stroke="#3b3f42" stroke-width="1.2"/><path d="M16.5,15.5H20.5L18.5,18Z" fill="#3b3f42"/></svg></div>
<div style="left:472px;top:124px;width:817px;height:450px;border:1px solid #b7b8b9;background:#fcfcfc;overflow:hidden"><div style="left:0;top:0;width:60px;height:434px;background:#c8c8c8"></div><div style="left:60px;top:0;width:14px;height:434px;background:#ffdca0"></div><div style="left:74px;top:0;width:16px;height:434px;background:#c8c8c8"></div><div class="ln" style="left:0;top:0px;width:41px">1</div><div class="ln" style="left:0;top:14px;width:41px">2</div><div class="ln" style="left:0;top:28px;width:41px">3</div><div class="ln" style="left:0;top:42px;width:41px">4</div><div class="ln" style="left:0;top:56px;width:41px">5</div><div class="ln" style="left:0;top:70px;width:41px">6</div><div class="ln" style="left:0;top:84px;width:41px">7</div><div class="ln" style="left:0;top:98px;width:41px">8</div><div class="ln" style="left:0;top:112px;width:41px">9</div><div class="ln" style="left:0;top:126px;width:41px">10</div><div class="ln" style="left:0;top:140px;width:41px">11</div><div class="ln" style="left:0;top:154px;width:41px">12</div><div class="ln" style="left:0;top:168px;width:41px">13</div><div class="ln" style="left:0;top:182px;width:41px">14</div><div class="ln" style="left:0;top:196px;width:41px">15</div><div class="ln" style="left:0;top:210px;width:41px">16</div><div class="ln" style="left:0;top:224px;width:41px">17</div><div class="ln" style="left:0;top:238px;width:41px">18</div><div class="ln" style="left:0;top:252px;width:41px">19</div><div class="ln" style="left:0;top:266px;width:41px">20</div><div class="ln" style="left:0;top:280px;width:41px">21</div><div class="ln" style="left:0;top:294px;width:41px">22</div><div class="ln" style="left:0;top:308px;width:41px">23</div><div class="ln" style="left:0;top:322px;width:41px">24</div><div class="ln" style="left:0;top:336px;width:41px">25</div><div class="ln" style="left:0;top:350px;width:41px">26</div><div class="ln" style="left:0;top:364px;width:41px">27</div><div class="ln" style="left:0;top:378px;width:41px">28</div><div class="ln" style="left:0;top:392px;width:41px">29</div><div class="ln" style="left:0;top:406px;width:41px">30</div><div class="ln" style="left:0;top:420px;width:41px">31</div><svg class="i" width="1" height="1" style="left:67.5px;top:77.5px"><path d="M-5.5,-2.6H5.5L0,3Z" fill="#000"/></svg><svg class="i" width="1" height="1" style="left:67.5px;top:189.5px"><path d="M-5.5,-2.6H5.5L0,3Z" fill="#000"/></svg><svg class="i" width="1" height="1" style="left:67.5px;top:357.5px"><path d="M-5.5,-2.6H5.5L0,3Z" fill="#000"/></svg><svg class="i" width="1" height="1" style="left:67.5px;top:371.5px"><path d="M-5.5,-2.6H5.5L0,3Z" fill="#000"/></svg><div style="left:66.8px;top:84px;width:1.4px;height:36px;background:#000"></div><div style="left:67.5px;top:119.3px;width:6.5px;height:1.4px;background:#000"></div><div style="left:66.8px;top:196px;width:1.4px;height:8px;background:#000"></div><div style="left:67.5px;top:203.3px;width:6.5px;height:1.4px;background:#000"></div><div style="left:66.8px;top:378px;width:1.4px;height:56px;background:#000"></div><div style="left:67.5px;top:398.3px;width:6.5px;height:1.4px;background:#000"></div><div style="left:90px;top:0;width:696px;height:14px;border:1.4px solid #000"></div><svg class="i" width="22" height="3" style="left:192px;top:11px;z-index:2"><rect width="100%" height="3" fill="url(#zz)"/></svg><div class="cl" style="left:91px;top:0px"><span class="c">#<i></i>-*-<i></i>coding:<i></i></span><span class="c">utf</span><span class="c">-8<i></i>-*-</span></div><div class="cl" style="left:91px;top:14px"></div><svg class="i" width="43" height="3" style="left:293px;top:39px;z-index:2"><rect width="100%" height="3" fill="url(#zz)"/></svg><svg class="i" width="43" height="3" style="left:423px;top:39px;z-index:2"><rect width="100%" height="3" fill="url(#zz)"/></svg><svg class="i" width="72" height="3" style="left:502px;top:39px;z-index:2"><rect width="100%" height="3" fill="url(#zz)"/></svg><div class="cl" style="left:91px;top:28px"><span class="c">#<i></i>Copyright<i></i>(c)<i></i>2003<i></i>-<i></i>2021<i></i></span><span class="c">Detlev</span><span class="c"><i></i>Offenbach<i></i>&lt;</span><span class="c">detlev</span><span class="c">@die-</span><span class="c">offenbachs</span><span class="c">.de&gt;</span></div><div class="cl" style="left:91px;top:42px"><span class="c">#</span></div><div class="cl" style="left:91px;top:56px"></div><div class="cl" style="left:91px;top:70px"><span class="d">"""</span></div><div class="cl" style="left:91px;top:84px"><span class="d">Module<i></i>implementing<i></i>a<i></i>simple<i></i>Python<i></i>syntax<i></i>checker.</span></div><div class="cl" style="left:91px;top:98px"><span class="d">"""</span></div><div class="cl" style="left:91px;top:112px"></div><div class="cl" style="left:91px;top:126px"><span class="k">import</span><i></i><span class="o">os</span></div><div class="cl" style="left:91px;top:140px"><span class="k">import</span><i></i><span class="o">fnmatch</span></div><div class="cl" style="left:91px;top:154px"></div><div class="cl" style="left:91px;top:168px"><span class="k">from</span><i></i><span class="q">PyQt6</span>.<span class="q">QtCore</span><i></i><span class="k">import</span><i></i>pyqtSlot,<i></i><span class="q">Qt</span>,<i></i>QTimer</div><div class="cl" style="left:91px;top:182px"><span class="k">from</span><i></i><span class="q">PyQt6</span>.<span class="q">QtWidgets</span><i></i><span class="k">import</span><i></i>(</div><div class="cl" style="left:91px;top:196px"><i></i><i></i><i></i><i></i>QDialog,<i></i>QDialogButtonBox,<i></i>QTreeWidgetItem,<i></i>QApplication,<i></i>QHeaderView</div><div class="cl" style="left:91px;top:210px">)</div><div class="cl" style="left:91px;top:224px"></div><div class="cl" style="left:91px;top:238px"><span class="k">from</span><i></i>EricWidgets.EricApplication<i></i><span class="k">import</span><i></i>ericApp</div><div class="cl" style="left:91px;top:252px"></div><div class="cl" style="left:91px;top:266px"><span class="k">from</span><i></i>.Ui_SyntaxCheckerDialog<i></i><span class="k">import</span><i></i>Ui_SyntaxCheckerDialog</div><div class="cl" style="left:91px;top:280px"></div><div class="cl" style="left:91px;top:294px"><span class="k">import</span><i></i>Utilities</div><div class="cl" style="left:91px;top:308px"><span class="k">import</span><i></i>UI.PixmapCache</div><div class="cl" style="left:91px;top:322px"></div><div class="cl" style="left:91px;top:336px"></div><div class="cl" style="left:91px;top:350px"><span class="k">class</span><i></i><span class="cn">SyntaxCheckerDialog</span><span class="b">(</span>QDialog,<i></i>Ui_SyntaxCheckerDialog<span class="b">):</span></div><div class="cl" style="left:91px;top:364px"><i></i><i></i><i></i><i></i><span class="d">"""</span></div><div class="cl" style="left:91px;top:378px"><i></i><i></i><i></i><i></i><span class="d">Class<i></i>implementing<i></i>a<i></i>dialog<i></i>to<i></i>display<i></i>the<i></i>results<i></i>of<i></i>a<i></i>syntax<i></i>check<i></i>run.</span></div><div class="cl" style="left:91px;top:392px"><i></i><i></i><i></i><i></i><span class="d">"""</span></div><div class="cl" style="left:91px;top:406px"><i></i><i></i><i></i><i></i>filenameRole<i></i><span class="b">=</span><i></i><span class="q">Qt</span>.ItemDataRole.UserRole<i></i><span class="b">+</span><i></i><span class="n">1</span></div><div class="cl" style="left:91px;top:420px"><i></i><i></i><i></i><i></i>lineRole<i></i><span class="b">=</span><i></i><span class="q">Qt</span>.ItemDataRole.UserRole<i></i><span class="b">+</span><i></i><span class="n">2</span></div><div style="left:786px;top:0;width:14px;height:434px;background:#e6e6e6"></div><div style="left:786px;top:0;width:14px;height:24px;border:1px solid #000;border-top-width:3px;background:#e6e6e6"></div></div>
<div style="left:1274px;top:124px;width:15px;height:436px;background:#ececec;border:1px solid #b9b9b9"></div>
<div style="left:1274px;top:124px;width:15px;height:15px;background:linear-gradient(90deg,#fff,#f5f5f5);border:1px solid #b9b9b9"><svg class="i" width="1" height="1" style="left:6.5px;top:6.5px"><path d="M-3.5,2L0,-2L3.5,2Z" fill="#6a6c6e"/></svg></div>
<div style="left:1274px;top:545px;width:15px;height:15px;background:linear-gradient(90deg,#fff,#f5f5f5);border:1px solid #b9b9b9"><svg class="i" width="1" height="1" style="left:6.5px;top:6.5px"><path d="M-3.5,-2L0,2L3.5,-2Z" fill="#6a6c6e"/></svg></div>
<div style="left:1274px;top:138px;width:15px;height:28px;background:linear-gradient(90deg,#fff,#f7f7f7);border:1px solid #b9b9b9"></div>
<div style="left:472px;top:559px;width:803px;height:15px;background:#ececec;border:1px solid #b9b9b9"></div>
<div style="left:472px;top:559px;width:15px;height:15px;background:linear-gradient(180deg,#fff,#f5f5f5);border:1px solid #b9b9b9"><svg class="i" width="1" height="1" style="left:6px;top:6.5px"><path d="M2,-3.5L-2,0L2,3.5Z" fill="#6a6c6e"/></svg></div>
<div style="left:1260px;top:559px;width:15px;height:15px;background:linear-gradient(180deg,#fff,#f5f5f5);border:1px solid #b9b9b9"><svg class="i" width="1" height="1" style="left:7px;top:6.5px"><path d="M-2,-3.5L2,0L-2,3.5Z" fill="#6a6c6e"/></svg></div>
<div style="left:486px;top:559px;width:270px;height:15px;background:linear-gradient(180deg,#fff,#f7f7f7);border:1px solid #b9b9b9"></div>
<div style="left:1275px;top:560px;width:13px;height:13px;background:#eff0f1"></div>
<div style="left:1290px;top:123px;width:200px;height:451px;border:1px solid #b7b8b9;background:#fff;overflow:hidden"><div style="left:0;top:0;width:184px;height:435px;overflow:hidden"><div class="sel" style="left:0;top:0px;width:184px;height:20px"></div><svg class="i" width="16" height="16" style="left:23px;top:2px;opacity:.6"><use href="#uni16"/></svg><div class="t" style="left:45.7px;top:0px;font-size:13.5px;letter-spacing:0.123px;color:#fcfcfc;">Coding: utf-8</div><div class="alt" style="left:0;top:20px;width:184px;height:20px"></div><svg class="i" width="1" height="1" style="left:10px;top:30px"><path d="M-2,-4L2,0L-2,4Z" fill="#6e7173"/></svg><svg class="i" width="16" height="16" style="left:23px;top:22px"><use href="#imp16"/></svg><div class="t" style="left:45.7px;top:20px;font-size:13.5px;letter-spacing:0.506px;">Imports</div><div class="" style="left:0;top:40px;width:184px;height:20px"></div><svg class="i" width="1" height="1" style="left:10px;top:50px"><path d="M-4,-2L0,2L4,-2Z" fill="#6e7173"/></svg><svg class="i" width="16" height="16" style="left:23px;top:42px"><use href="#cls16"/></svg><div class="t" style="left:45.7px;top:40px;font-size:13.5px;letter-spacing:-0.053px;">SyntaxCheckerDialog(QDialog, Ui<span class="u">_</span>SyntaxCheckerDialog)</div><div class="alt" style="left:0;top:60px;width:184px;height:20px"></div><svg class="i" width="1" height="1" style="left:30px;top:70px"><path d="M-2,-4L2,0L-2,4Z" fill="#6e7173"/></svg><svg class="i" width="16" height="16" style="left:43px;top:62px"><use href="#attr16"/></svg><div class="t" style="left:65.7px;top:60px;font-size:13.5px;letter-spacing:0.348px;">Attributes</div><div class="" style="left:0;top:80px;width:184px;height:20px"></div><svg class="i" width="1" height="1" style="left:30px;top:90px"><path d="M-2,-4L2,0L-2,4Z" fill="#6e7173"/></svg><svg class="i" width="16" height="16" style="left:43px;top:82px"><use href="#cattr16"/></svg><div class="t" style="left:65.7px;top:80px;font-size:13.5px;letter-spacing:0.081px;">Class Attributes</div><div class="alt" style="left:0;top:100px;width:184px;height:20px"></div><svg class="i" width="16" height="16" style="left:43px;top:102px"><use href="#priv16"/></svg><div class="t" style="left:65.7px;top:100px;font-size:13.5px;letter-spacing:0.108px;"><span class="u">_</span><span class="u">_</span>init<span class="u">_</span><span class="u">_</span>(self, parent=None)</div><div class="" style="left:0;top:120px;width:184px;height:20px"></div><svg class="i" width="16" height="16" style="left:43px;top:122px"><use href="#priv16"/></svg><div class="t" style="left:65.7px;top:120px;font-size:13.5px;letter-spacing:-0.0px;"><span class="u">_</span><span class="u">_</span>batchFinished(self)</div><div class="alt" style="left:0;top:140px;width:184px;height:20px"></div><svg class="i" width="16" height="16" style="left:43px;top:142px"><use href="#priv16"/></svg><div class="t" style="left:65.7px;top:140px;font-size:13.5px;letter-spacing:-0.009px;"><span class="u">_</span><span class="u">_</span>clearErrors(self, files)</div><div class="" style="left:0;top:160px;width:184px;height:20px"></div><svg class="i" width="16" height="16" style="left:43px;top:162px"><use href="#priv16"/></svg><div class="t" style="left:65.7px;top:160px;font-size:13.5px;letter-spacing:0.08px;"><span class="u">_</span><span class="u">_</span>createErrorItem(self, filename, message)</div><div class="alt" style="left:0;top:180px;width:184px;height:20px"></div><svg class="i" width="16" height="16" style="left:43px;top:182px"><use href="#priv16"/></svg><div class="t" style="left:65.7px;top:180px;font-size:13.5px;letter-spacing:0.075px;"><span class="u">_</span><span class="u">_</span>createResultItem(self, filename, line)</div><div class="" style="left:0;top:200px;width:184px;height:20px"></div><svg class="i" width="16" height="16" style="left:43px;top:202px"><use href="#priv16"/></svg><div class="t" style="left:65.7px;top:200px;font-size:13.5px;letter-spacing:0.06px;"><span class="u">_</span><span class="u">_</span>finish(self)</div><div class="alt" style="left:0;top:220px;width:184px;height:20px"></div><svg class="i" width="16" height="16" style="left:43px;top:222px"><use href="#priv16"/></svg><div class="t" style="left:65.7px;top:220px;font-size:13.5px;letter-spacing:0.021px;"><span class="u">_</span><span class="u">_</span>processError(self, fn, msg)</div><div class="" style="left:0;top:240px;width:184px;height:20px"></div><svg class="i" width="16" height="16" style="left:43px;top:242px"><use href="#priv16"/></svg><div class="t" style="left:65.7px;top:240px;font-size:13.5px;letter-spacing:-0.032px;"><span class="u">_</span><span class="u">_</span>processResult(self, fn, nok)</div><div class="alt" style="left:0;top:260px;width:184px;height:20px"></div><svg class="i" width="16" height="16" style="left:43px;top:262px"><use href="#priv16"/></svg><div class="t" style="left:65.7px;top:260px;font-size:13.5px;letter-spacing:0.087px;"><span class="u">_</span><span class="u">_</span>resort(self)</div><div class="" style="left:0;top:280px;width:184px;height:20px"></div><svg class="i" width="16" height="16" style="left:43px;top:282px"><use href="#pub16"/></svg><div class="t" style="left:65.7px;top:280px;font-size:13.5px;letter-spacing:0.02px;">check(self, codestring)</div><div class="alt" style="left:0;top:300px;width:184px;height:20px"></div><svg class="i" width="16" height="16" style="left:43px;top:302px"><use href="#pub16"/></svg><div class="t" style="left:65.7px;top:300px;font-size:13.5px;letter-spacing:-0.089px;">checkBatch(self)</div><div class="" style="left:0;top:320px;width:184px;height:20px"></div><svg class="i" width="16" height="16" style="left:43px;top:322px"><use href="#pub16"/></svg><div class="t" style="left:65.7px;top:320px;font-size:13.5px;letter-spacing:0.131px;">on<span class="u">_</span>buttonBox<span class="u">_</span>clicked(self)</div><div class="alt" style="left:0;top:340px;width:184px;height:20px"></div><svg class="i" width="16" height="16" style="left:43px;top:342px"><use href="#pub16"/></svg><div class="t" style="left:65.7px;top:340px;font-size:13.5px;letter-spacing:0.135px;">on<span class="u">_</span>resultList<span class="u">_</span>itemActivated(self)</div><div class="" style="left:0;top:360px;width:184px;height:20px"></div><svg class="i" width="16" height="16" style="left:43px;top:362px"><use href="#pub16"/></svg><div class="t" style="left:65.7px;top:360px;font-size:13.5px;letter-spacing:0.119px;">on<span class="u">_</span>showButton<span class="u">_</span>clicked(self)</div><div class="alt" style="left:0;top:380px;width:184px;height:20px"></div><svg class="i" width="16" height="16" style="left:43px;top:382px"><use href="#pub16"/></svg><div class="t" style="left:65.7px;top:380px;font-size:13.5px;letter-spacing:0.158px;">on<span class="u">_</span>startButton<span class="u">_</span>clicked(self)</div><div class="" style="left:0;top:400px;width:184px;height:20px"></div><svg class="i" width="16" height="16" style="left:43px;top:402px"><use href="#pub16"/></svg><div class="t" style="left:65.7px;top:400px;font-size:13.5px;letter-spacing:0.099px;">prepare(self, fileList, project)</div><div class="alt" style="left:0;top:420px;width:184px;height:20px"></div><svg class="i" width="16" height="16" style="left:43px;top:422px"><use href="#pub16"/></svg><div class="t" style="left:65.7px;top:420px;font-size:13.5px;letter-spacing:0.131px;">start(self, fn, codestring)</div></div></div>
<div style="left:1475px;top:123px;width:15px;height:437px;background:#ececec;border:1px solid #b9b9b9"></div>
<div style="left:1475px;top:123px;width:15px;height:15px;background:linear-gradient(90deg,#fff,#f5f5f5);border:1px solid #b9b9b9"><svg class="i" width="1" height="1" style="left:6.5px;top:6.5px"><path d="M-3.5,2L0,-2L3.5,2Z" fill="#6a6c6e"/></svg></div>
<div style="left:1475px;top:545px;width:15px;height:15px;background:linear-gradient(90deg,#fff,#f5f5f5);border:1px solid #b9b9b9"><svg class="i" width="1" height="1" style="left:6.5px;top:6.5px"><path d="M-3.5,-2L0,2L3.5,-2Z" fill="#6a6c6e"/></svg></div>
<div style="left:1475px;top:137px;width:15px;height:390px;background:linear-gradient(90deg,#fff,#f7f7f7);border:1px solid #b9b9b9"></div>
<div style="left:1290px;top:559px;width:186px;height:15px;background:#ececec;border:1px solid #b9b9b9"></div>
<div style="left:1290px;top:559px;width:15px;height:15px;background:linear-gradient(180deg,#fff,#f5f5f5);border:1px solid #b9b9b9"><svg class="i" width="1" height="1" style="left:6px;top:6.5px"><path d="M2,-3.5L-2,0L2,3.5Z" fill="#6a6c6e"/></svg></div>
<div style="left:1461px;top:559px;width:15px;height:15px;background:linear-gradient(180deg,#fff,#f5f5f5);border:1px solid #b9b9b9"><svg class="i" width="1" height="1" style="left:7px;top:6.5px"><path d="M-2,-3.5L2,0L-2,3.5Z" fill="#6a6c6e"/></svg></div>
<div style="left:1304px;top:559px;width:37px;height:15px;background:linear-gradient(180deg,#fff,#f7f7f7);border:1px solid #b9b9b9"></div>
<div style="left:1476px;top:560px;width:13px;height:13px;background:#eff0f1"></div>
<div style="left:471.0px;top:593.0px;width:15px;height:15px;border-radius:50%;background:radial-gradient(circle at 38% 32%,#fff 0,#66e066 14%,#00a000 48%,#005000 100%);box-shadow:1.5px 1.5px 1.5px rgba(0,0,0,.45)"></div>
<div style="left:470px;top:610px;width:1022px;height:453px;border:1px solid #b7b8b9;background:#fcfcfc"></div>
<div class="tab on" style="left:488px;top:580px;width:239px;height:31px;"></div>
<div class="t" style="left:528.2px;top:586px;font-size:13.6px;letter-spacing:0.174px;">eric7/UI/UserInterface.py</div>
<svg class="i" width="13.6" height="13.6" style="left:697.5px;top:589px;"><use href="#tabclose"/></svg>
<div style="left:472px;top:613px;width:817px;height:449px;border:1px solid #b7b8b9;background:#fcfcfc;overflow:hidden"><div style="left:0;top:0;width:68px;height:433px;background:#c8c8c8"></div><div style="left:68px;top:0;width:14px;height:433px;background:#ffdca0"></div><div style="left:82px;top:0;width:16px;height:433px;background:#c8c8c8"></div><div class="ln" style="left:0;top:0px;width:48.799999999999955px">652</div><div class="ln" style="left:0;top:14px;width:48.799999999999955px">653</div><div class="ln" style="left:0;top:28px;width:48.799999999999955px">654</div><div class="ln" style="left:0;top:42px;width:48.799999999999955px">655</div><div class="ln" style="left:0;top:56px;width:48.799999999999955px">656</div><div class="ln" style="left:0;top:70px;width:48.799999999999955px">657</div><div class="ln" style="left:0;top:84px;width:48.799999999999955px">658</div><div class="ln" style="left:0;top:98px;width:48.799999999999955px">659</div><div class="ln" style="left:0;top:112px;width:48.799999999999955px">660</div><div class="ln" style="left:0;top:126px;width:48.799999999999955px">661</div><div class="ln" style="left:0;top:140px;width:48.799999999999955px">662</div><div class="ln" style="left:0;top:154px;width:48.799999999999955px">663</div><div class="ln" style="left:0;top:168px;width:48.799999999999955px">664</div><div class="ln" style="left:0;top:182px;width:48.799999999999955px">665</div><div class="ln" style="left:0;top:196px;width:48.799999999999955px">666</div><div class="ln" style="left:0;top:210px;width:48.799999999999955px">667</div><div class="ln" style="left:0;top:224px;width:48.799999999999955px">668</div><div class="ln" style="left:0;top:238px;width:48.799999999999955px">669</div><div class="ln" style="left:0;top:252px;width:48.799999999999955px">670</div><div class="ln" style="left:0;top:266px;width:48.799999999999955px">671</div><div class="ln" style="left:0;top:280px;width:48.799999999999955px">672</div><div class="ln" style="left:0;top:294px;width:48.799999999999955px">673</div><div class="ln" style="left:0;top:308px;width:48.799999999999955px">674</div><div class="ln" style="left:0;top:322px;width:48.799999999999955px">675</div><div class="ln" style="left:0;top:336px;width:48.799999999999955px">676</div><div class="ln" style="left:0;top:350px;width:48.799999999999955px">677</div><div class="ln" style="left:0;top:364px;width:48.799999999999955px">678</div><div class="ln" style="left:0;top:378px;width:48.799999999999955px">679</div><div class="ln" style="left:0;top:392px;width:48.799999999999955px">680</div><div class="ln" style="left:0;top:406px;width:48.799999999999955px">681</div><div class="ln" style="left:0;top:420px;width:48.799999999999955px">682</div><div style="left:74.8px;top:0;width:1.4px;height:433px;background:#000"></div><div style="left:69.5px;top:336px;width:12px;height:14px;background:#ffdca0"></div><svg class="i" width="1" height="1" style="left:75.5px;top:343.5px"><path d="M-5.5,-2.6H5.5L0,3Z" fill="#000"/></svg><div style="left:69.5px;top:350px;width:12px;height:14px;background:#ffdca0"></div><svg class="i" width="1" height="1" style="left:75.5px;top:357.5px"><path d="M-5.5,-2.6H5.5L0,3Z" fill="#000"/></svg><div style="left:69.5px;top:392px;width:12px;height:14px;background:#ffdca0"></div><svg class="i" width="1" height="1" style="left:75.5px;top:399.5px"><path d="M-5.5,-2.6H5.5L0,3Z" fill="#000"/></svg><div style="left:75.5px;top:370.3px;width:6.5px;height:1.4px;background:#000"></div><div style="left:75.5px;top:384.3px;width:6.5px;height:1.4px;background:#000"></div><div style="left:75.5px;top:426.3px;width:6.5px;height:1.4px;background:#000"></div><svg class="i" width="13" height="13" style="left:83px;top:266.5px"><rect x=".5" y="2.5" width="12" height="10" fill="#e9e9e9" stroke="#555" stroke-width="1"/><rect x="0" y="1" width="13" height="3.4" fill="#333"/><path d="M3.4,8.2L5.6,10.2L9.6,5.8" fill="none" stroke="#333" stroke-width="1.1"/></svg><div style="left:98px;top:266px;width:688px;height:14px;border:1.4px solid #000"></div><div style="left:128px;top:0px;width:1px;height:280px;background-image:linear-gradient(180deg,#000 50%,transparent 50%);background-size:1px 2px"></div><div style="left:128px;top:308px;width:1px;height:126px;background-image:linear-gradient(180deg,#000 50%,transparent 50%);background-size:1px 2px"></div><div style="left:157px;top:350px;width:1px;height:42px;background-image:linear-gradient(180deg,#000 50%,transparent 50%);background-size:1px 2px"></div><div style="left:157px;top:406px;width:1px;height:14px;background-image:linear-gradient(180deg,#000 50%,transparent 50%);background-size:1px 2px"></div><div style="left:186px;top:364px;width:1px;height:14px;background-image:linear-gradient(180deg,#000 50%,transparent 50%);background-size:1px 2px"></div><div class="cl" style="left:99.10000000000002px;top:0px"><i></i><i></i><i></i><i></i><i></i><i></i><i></i><i></i></div><svg class="i" width="108" height="3" style="left:258px;top:25px;z-index:2"><rect width="100%" height="3" fill="url(#zz)"/></svg><div class="cl" style="left:99.10000000000002px;top:14px"><i></i><i></i><i></i><i></i><i></i><i></i><i></i><i></i><span class="c">#<i></i>connect<i></i>the<i></i></span><span class="c">appFocusChanged</span><span class="c"><i></i>signal<i></i>after<i></i>all<i></i>actions<i></i>are<i></i>ready</span></div><div class="cl" style="left:99.10000000000002px;top:28px"><i></i><i></i><i></i><i></i><i></i><i></i><i></i><i></i>app.focusChanged.connect<span class="b">(</span>self.viewmanager.appFocusChanged<span class="b">)</span></div><div class="cl" style="left:99.10000000000002px;top:42px"><i></i><i></i><i></i><i></i><i></i><i></i><i></i><i></i></div><div class="cl" style="left:99.10000000000002px;top:56px"><i></i><i></i><i></i><i></i><i></i><i></i><i></i><i></i><span class="c">#<i></i>Initialize<i></i>the<i></i>instance<i></i>variables.</span></div><div class="cl" style="left:99.10000000000002px;top:70px"><i></i><i></i><i></i><i></i><i></i><i></i><i></i><i></i>self.currentProg<i></i><span class="b">=</span><i></i><span class="k">None</span></div><div class="cl" style="left:99.10000000000002px;top:84px"><i></i><i></i><i></i><i></i><i></i><i></i><i></i><i></i>self.isProg<i></i><span class="b">=</span><i></i><span class="k">False</span></div><div class="cl" style="left:99.10000000000002px;top:98px"><i></i><i></i><i></i><i></i><i></i><i></i><i></i><i></i>self.utEditorOpen<i></i><span class="b">=</span><i></i><span class="k">False</span></div><div class="cl" style="left:99.10000000000002px;top:112px"><i></i><i></i><i></i><i></i><i></i><i></i><i></i><i></i>self.utProjectOpen<i></i><span class="b">=</span><i></i><span class="k">False</span></div><div class="cl" style="left:99.10000000000002px;top:126px"><i></i><i></i><i></i><i></i><i></i><i></i><i></i><i></i></div><div class="cl" style="left:99.10000000000002px;top:140px"><i></i><i></i><i></i><i></i><i></i><i></i><i></i><i></i>self.inDragDrop<i></i><span class="b">=</span><i></i><span class="k">False</span></div><div class="cl" style="left:99.10000000000002px;top:154px"><i></i><i></i><i></i><i></i><i></i><i></i><i></i><i></i>self.setAcceptDrops<span class="b">(</span><span class="k">True</span><span class="b">)</span></div><div class="cl" style="left:99.10000000000002px;top:168px"><i></i><i></i><i></i><i></i><i></i><i></i><i></i><i></i></div><div class="cl" style="left:99.10000000000002px;top:182px"><i></i><i></i><i></i><i></i><i></i><i></i><i></i><i></i>self.currentProfile<i></i><span class="b">=</span><i></i><span class="k">None</span></div><div class="cl" style="left:99.10000000000002px;top:196px"><i></i><i></i><i></i><i></i><i></i><i></i><i></i><i></i></div><div class="cl" style="left:99.10000000000002px;top:210px"><i></i><i></i><i></i><i></i><i></i><i></i><i></i><i></i>self.shutdownCalled<i></i><span class="b">=</span><i></i><span class="k">False</span></div><div class="cl" style="left:99.10000000000002px;top:224px"><i></i><i></i><i></i><i></i><i></i><i></i><i></i><i></i>self.inCloseEvent<i></i><span class="b">=</span><i></i><span class="k">False</span></div><div class="cl" style="left:99.10000000000002px;top:238px"></div><svg class="i" width="43" height="3" style="left:265px;top:263px;z-index:2"><rect width="100%" height="3" fill="url(#zz)"/></svg><svg class="i" width="43" height="3" style="left:344px;top:263px;z-index:2"><rect width="100%" height="3" fill="url(#zz)"/></svg><div class="cl" style="left:99.10000000000002px;top:252px"><i></i><i></i><i></i><i></i><i></i><i></i><i></i><i></i><span class="c">#<i></i>now<i></i>redirect<i></i></span><span class="c">stdout</span><span class="c"><i></i>and<i></i></span><span class="c">stderr</span></div><svg class="i" width="29" height="3" style="left:171px;top:277px;z-index:2"><rect width="100%" height="3" fill="url(#zz)"/></svg><svg class="i" width="58" height="3" style="left:287px;top:277px;z-index:2"><rect width="100%" height="3" fill="url(#zz)"/></svg><div class="cl" style="left:99.10000000000002px;top:266px"><i></i><i></i><i></i><i></i><i></i><i></i><i></i><i></i><span class="c">#<i></i></span><span class="c">TODO</span><span class="c">:<i></i>release<i></i>-<i></i></span><span class="c">reenable</span><span class="c"><i></i>redirection</span></div><svg class="i" width="22" height="3" style="left:171px;top:291px;z-index:2"><rect width="100%" height="3" fill="url(#zz)"/></svg><svg class="i" width="43" height="3" style="left:200px;top:291px;z-index:2"><rect width="100%" height="3" fill="url(#zz)"/></svg><svg class="i" width="43" height="3" style="left:301px;top:291px;z-index:2"><rect width="100%" height="3" fill="url(#zz)"/></svg><svg class="i" width="29" height="3" style="left:553px;top:291px;z-index:2"><rect width="100%" height="3" fill="url(#zz)"/></svg><div class="cl" style="left:99.10000000000002px;top:280px"><span class="c hl">##</span><span class="c"><i></i><i></i><i></i><i></i><i></i><i></i><i></i><i></i></span><span class="c hl">sys</span><span class="c hl">.</span><span class="c hl">stdout</span><span class="c"><i></i></span><span class="c hl">=</span><span class="c"><i></i></span><span class="c hl">self.</span><span class="c hl">stdout</span><span class="c"><i></i><i></i><i></i><i></i><i></i><i></i><i></i><i></i><i></i><i></i></span><span class="c hl">#</span><span class="c"><i></i></span><span class="c hl">__IGNORE_WARNING_</span><span class="c hl">M891</span><span class="c hl">__</span></div><svg class="i" width="22" height="3" style="left:171px;top:305px;z-index:2"><rect width="100%" height="3" fill="url(#zz)"/></svg><svg class="i" width="43" height="3" style="left:200px;top:305px;z-index:2"><rect width="100%" height="3" fill="url(#zz)"/></svg><svg class="i" width="43" height="3" style="left:301px;top:305px;z-index:2"><rect width="100%" height="3" fill="url(#zz)"/></svg><svg class="i" width="29" height="3" style="left:553px;top:305px;z-index:2"><rect width="100%" height="3" fill="url(#zz)"/></svg><div class="cl" style="left:99.10000000000002px;top:294px"><span class="c hl">##</span><span class="c"><i></i><i></i><i></i><i></i><i></i><i></i><i></i><i></i></span><span class="c hl">sys</span><span class="c hl">.</span><span class="c hl">stderr</span><span class="c"><i></i></span><span class="c hl">=</span><span class="c"><i></i></span><span class="c hl">self.</span><span class="c hl">stderr</span><span class="c"><i></i><i></i><i></i><i></i><i></i><i></i><i></i><i></i><i></i><i></i></span><span class="c hl">#</span><span class="c"><i></i></span><span class="c hl">__IGNORE_WARNING_</span><span class="c hl">M891</span><span class="c hl">__</span></div><div class="cl" style="left:99.10000000000002px;top:308px"></div><div class="cl" style="left:99.10000000000002px;top:322px"><i></i><i></i><i></i><i></i><i></i><i></i><i></i><i></i><span class="c">#<i></i>now<i></i>fire<i></i>up<i></i>the<i></i>single<i></i>application<i></i>server</span></div><svg class="i" width="151" height="3" style="left:315px;top:347px;z-index:2"><rect width="100%" height="3" fill="url(#zz)"/></svg><div class="cl" style="left:99.10000000000002px;top:336px"><i></i><i></i><i></i><i></i><i></i><i></i><i></i><i></i><span class="k">if</span><i></i>Preferences.getUI<span class="b">(</span><span class="s">"</span><span class="s">SingleApplicationMode</span><span class="s">"</span><span class="b">):</span></div><div class="cl" style="left:99.10000000000002px;top:350px"><i></i><i></i><i></i><i></i><i></i><i></i><i></i><i></i><i></i><i></i><i></i><i></i>splash.showMessage<span class="b">(</span></div><div class="cl" style="left:99.10000000000002px;top:364px"><i></i><i></i><i></i><i></i><i></i><i></i><i></i><i></i><i></i><i></i><i></i><i></i><i></i><i></i><i></i><i></i>self.tr<span class="b">(</span><span class="s">"Initializing<i></i>Single<i></i>Application<i></i>Server..."</span><span class="b">))</span></div><div class="cl" style="left:99.10000000000002px;top:378px"><i></i><i></i><i></i><i></i><i></i><i></i><i></i><i></i><i></i><i></i><i></i><i></i>self.SAServer<i></i><span class="b">=</span><i></i>EricSingleApplicationServer<span class="b">()</span></div><div class="cl" style="left:99.10000000000002px;top:392px"><i></i><i></i><i></i><i></i><i></i><i></i><i></i><i></i><span class="k">else</span><span class="b">:</span></div><div class="cl" style="left:99.10000000000002px;top:406px"><i></i><i></i><i></i><i></i><i></i><i></i><i></i><i></i><i></i><i></i><i></i><i></i>self.SAServer<i></i><span class="b">=</span><i></i><span class="k">None</span></div><div class="cl" style="left:99.10000000000002px;top:420px"><i></i><i></i><i></i><i></i><i></i><i></i><i></i><i></i></div><div style="left:786px;top:0;width:14px;height:433px;background:#e6e6e6"></div><div style="left:786px;top:36px;width:14px;height:3px;background:#000"></div></div>
<div style="left:1274px;top:613px;width:15px;height:435px;background:#ececec;border:1px solid #b9b9b9"></div>
<div style="left:1274px;top:613px;width:15px;height:15px;background:linear-gradient(90deg,#fff,#f5f5f5);border:1px solid #b9b9b9"><svg class="i" width="1" height="1" style="left:6.5px;top:6.5px"><path d="M-3.5,2L0,-2L3.5,2Z" fill="#6a6c6e"/></svg></div>
<div style="left:1274px;top:1033px;width:15px;height:15px;background:linear-gradient(90deg,#fff,#f5f5f5);border:1px solid #b9b9b9"><svg class="i" width="1" height="1" style="left:6.5px;top:6.5px"><path d="M-3.5,-2L0,2L3.5,-2Z" fill="#6a6c6e"/></svg></div>
<div style="left:1274px;top:657px;width:15px;height:29px;background:linear-gradient(90deg,#fff,#f7f7f7);border:1px solid #b9b9b9"></div>
<div style="left:472px;top:1047px;width:803px;height:15px;background:#ececec;border:1px solid #b9b9b9"></div>
<div style="left:472px;top:1047px;width:15px;height:15px;background:linear-gradient(180deg,#fff,#f5f5f5);border:1px solid #b9b9b9"><svg class="i" width="1" height="1" style="left:6px;top:6.5px"><path d="M2,-3.5L-2,0L2,3.5Z" fill="#6a6c6e"/></svg></div>
<div style="left:1260px;top:1047px;width:15px;height:15px;background:linear-gradient(180deg,#fff,#f5f5f5);border:1px solid #b9b9b9"><svg class="i" width="1" height="1" style="left:7px;top:6.5px"><path d="M-2,-3.5L2,0L-2,3.5Z" fill="#6a6c6e"/></svg></div>
<div style="left:486px;top:1047px;width:267px;height:15px;background:linear-gradient(180deg,#fff,#f7f7f7);border:1px solid #b9b9b9"></div>
<div style="left:1275px;top:1048px;width:13px;height:13px;background:#eff0f1"></div>
<div style="left:1290px;top:612px;width:200px;height:450px;border:1px solid #b7b8b9;background:#fff;overflow:hidden"><div style="left:0;top:0;width:184px;height:434px;overflow:hidden"><div class="" style="left:0;top:0px;width:184px;height:20px"></div><svg class="i" width="16" height="16" style="left:23px;top:2px"><use href="#uni16"/></svg><div class="t" style="left:45.7px;top:0px;font-size:13.5px;letter-spacing:0.123px;">Coding: utf-8</div><div class="alt" style="left:0;top:20px;width:184px;height:20px"></div><svg class="i" width="1" height="1" style="left:10px;top:30px"><path d="M-2,-4L2,0L-2,4Z" fill="#6e7173"/></svg><svg class="i" width="16" height="16" style="left:23px;top:22px"><use href="#imp16"/></svg><div class="t" style="left:45.7px;top:20px;font-size:13.5px;letter-spacing:0.506px;">Imports</div><div class="" style="left:0;top:40px;width:184px;height:20px"></div><svg class="i" width="1" height="1" style="left:10px;top:50px"><path d="M-2,-4L2,0L-2,4Z" fill="#6e7173"/></svg><svg class="i" width="16" height="16" style="left:23px;top:42px"><use href="#attr16"/></svg><div class="t" style="left:45.7px;top:40px;font-size:13.5px;letter-spacing:-0.053px;">Globals</div><div class="alt" style="left:0;top:60px;width:184px;height:20px"></div><svg class="i" width="1" height="1" style="left:10px;top:70px"><path d="M-2,-4L2,0L-2,4Z" fill="#6e7173"/></svg><svg class="i" width="16" height="16" style="left:23px;top:62px"><use href="#cls16"/></svg><div class="t" style="left:45.7px;top:60px;font-size:13.5px;letter-spacing:0.01px;">Redirector(QObject)</div><div class="" style="left:0;top:80px;width:184px;height:20px"></div><svg class="i" width="1" height="1" style="left:10px;top:90px"><path d="M-4,-2L0,2L4,-2Z" fill="#6e7173"/></svg><svg class="i" width="16" height="16" style="left:23px;top:82px"><use href="#cls16"/></svg><div class="t" style="left:45.7px;top:80px;font-size:13.5px;letter-spacing:0.085px;">UserInterface(EricMainWindow)</div><div class="alt" style="left:0;top:100px;width:184px;height:20px"></div><svg class="i" width="1" height="1" style="left:30px;top:110px"><path d="M-2,-4L2,0L-2,4Z" fill="#6e7173"/></svg><svg class="i" width="16" height="16" style="left:43px;top:102px"><use href="#attr16"/></svg><div class="t" style="left:65.7px;top:100px;font-size:13.5px;letter-spacing:0.348px;">Attributes</div><div class="" style="left:0;top:120px;width:184px;height:20px"></div><svg class="i" width="1" height="1" style="left:30px;top:130px"><path d="M-2,-4L2,0L-2,4Z" fill="#6e7173"/></svg><svg class="i" width="16" height="16" style="left:43px;top:122px"><use href="#cattr16"/></svg><div class="t" style="left:65.7px;top:120px;font-size:13.5px;letter-spacing:0.081px;">Class Attributes</div><div class="sel" style="left:0;top:140px;width:184px;height:20px"></div><svg class="i" width="16" height="16" style="left:43px;top:142px;opacity:.6"><use href="#priv16"/></svg><div class="t" style="left:65.7px;top:140px;font-size:13.5px;letter-spacing:0.016px;color:#fcfcfc;"><span class="u">_</span><span class="u">_</span>init<span class="u">_</span><span class="u">_</span>(self, app, locale)</div><div class="" style="left:0;top:160px;width:184px;height:20px"></div><svg class="i" width="16" height="16" style="left:43px;top:162px"><use href="#priv16"/></svg><div class="t" style="left:65.7px;top:160px;font-size:13.5px;letter-spacing:0.024px;"><span class="u">_</span><span class="u">_</span>TBMenuTriggered(self, act)</div><div class="alt" style="left:0;top:180px;width:184px;height:20px"></div><svg class="i" width="16" height="16" style="left:43px;top:182px"><use href="#priv16"/></svg><div class="t" style="left:65.7px;top:180px;font-size:13.5px;letter-spacing:0.063px;"><span class="u">_</span><span class="u">_</span>TBPopupMenuTriggered(self)</div><div class="" style="left:0;top:200px;width:184px;height:20px"></div><svg class="i" width="16" height="16" style="left:43px;top:202px"><use href="#priv16"/></svg><div class="t" style="left:65.7px;top:200px;font-size:13.5px;letter-spacing:-0.088px;"><span class="u">_</span><span class="u">_</span>TRPreviewer(self, fileNames)</div><div class="alt" style="left:0;top:220px;width:184px;height:20px"></div><svg class="i" width="16" height="16" style="left:43px;top:222px"><use href="#priv16"/></svg><div class="t" style="left:65.7px;top:220px;font-size:13.5px;letter-spacing:0.021px;"><span class="u">_</span><span class="u">_</span>UIPreviewer(self, fn)</div><div class="" style="left:0;top:240px;width:184px;height:20px"></div><svg class="i" width="16" height="16" style="left:43px;top:242px"><use href="#priv16"/></svg><div class="t" style="left:65.7px;top:240px;font-size:13.5px;letter-spacing:0.042px;"><span class="u">_</span><span class="u">_</span>activateBrowser(self)</div><div class="alt" style="left:0;top:260px;width:184px;height:20px"></div><svg class="i" width="16" height="16" style="left:43px;top:262px"><use href="#priv16"/></svg><div class="t" style="left:65.7px;top:260px;font-size:13.5px;letter-spacing:0.024px;"><span class="u">_</span><span class="u">_</span>activateCondaWidget(self)</div><div class="" style="left:0;top:280px;width:184px;height:20px"></div><svg class="i" width="16" height="16" style="left:43px;top:282px"><use href="#priv16"/></svg><div class="t" style="left:65.7px;top:280px;font-size:13.5px;letter-spacing:-0.004px;"><span class="u">_</span><span class="u">_</span>activateFindFileWidget(self)</div><div class="alt" style="left:0;top:300px;width:184px;height:20px"></div><svg class="i" width="16" height="16" style="left:43px;top:302px"><use href="#priv16"/></svg><div class="t" style="left:65.7px;top:300px;font-size:13.5px;letter-spacing:0.055px;"><span class="u">_</span><span class="u">_</span>activateFindLocationWidget(self)</div><div class="" style="left:0;top:320px;width:184px;height:20px"></div><svg class="i" width="16" height="16" style="left:43px;top:322px"><use href="#priv16"/></svg><div class="t" style="left:65.7px;top:320px;font-size:13.5px;letter-spacing:0.058px;"><span class="u">_</span><span class="u">_</span>activateHelpViewerWidget(self)</div><div class="alt" style="left:0;top:340px;width:184px;height:20px"></div><svg class="i" width="16" height="16" style="left:43px;top:342px"><use href="#priv16"/></svg><div class="t" style="left:65.7px;top:340px;font-size:13.5px;letter-spacing:-0.147px;"><span class="u">_</span><span class="u">_</span>activateIRC(self)</div><div class="" style="left:0;top:360px;width:184px;height:20px"></div><svg class="i" width="16" height="16" style="left:43px;top:362px"><use href="#priv16"/></svg><div class="t" style="left:65.7px;top:360px;font-size:13.5px;letter-spacing:0.058px;"><span class="u">_</span><span class="u">_</span>activateLeftRightSidebarWidget(self)</div><div class="alt" style="left:0;top:380px;width:184px;height:20px"></div><svg class="i" width="16" height="16" style="left:43px;top:382px"><use href="#priv16"/></svg><div class="t" style="left:65.7px;top:380px;font-size:13.5px;letter-spacing:0.006px;"><span class="u">_</span><span class="u">_</span>activateLogViewer(self)</div><div class="" style="left:0;top:400px;width:184px;height:20px"></div><svg class="i" width="16" height="16" style="left:43px;top:402px"><use href="#priv16"/></svg><div class="t" style="left:65.7px;top:400px;font-size:13.5px;letter-spacing:0.085px;"><span class="u">_</span><span class="u">_</span>activateMicroPython(self)</div><div class="alt" style="left:0;top:420px;width:184px;height:20px"></div><svg class="i" width="16" height="16" style="left:43px;top:422px"><use href="#priv16"/></svg><div class="t" style="left:65.7px;top:420px;font-size:13.5px;letter-spacing:0.119px;"><span class="u">_</span><span class="u">_</span>activateMultiProjectBrowser(self)</div></div></div>
<div style="left:1475px;top:612px;width:15px;height:436px;background:#ececec;border:1px solid #b9b9b9"></div>
<div style="left:1475px;top:612px;width:15px;height:15px;background:linear-gradient(90deg,#fff,#f5f5f5);border:1px solid #b9b9b9"><svg class="i" width="1" height="1" style="left:6.5px;top:6.5px"><path d="M-3.5,2L0,-2L3.5,2Z" fill="#6a6c6e"/></svg></div>
<div style="left:1475px;top:1033px;width:15px;height:15px;background:linear-gradient(90deg,#fff,#f5f5f5);border:1px solid #b9b9b9"><svg class="i" width="1" height="1" style="left:6.5px;top:6.5px"><path d="M-3.5,-2L0,2L3.5,-2Z" fill="#6a6c6e"/></svg></div>
<div style="left:1475px;top:626px;width:15px;height:37px;background:linear-gradient(90deg,#fff,#f7f7f7);border:1px solid #b9b9b9"></div>
<div style="left:1290px;top:1047px;width:186px;height:15px;background:#ececec;border:1px solid #b9b9b9"></div>
<div style="left:1290px;top:1047px;width:15px;height:15px;background:linear-gradient(180deg,#fff,#f5f5f5);border:1px solid #b9b9b9"><svg class="i" width="1" height="1" style="left:6px;top:6.5px"><path d="M2,-3.5L-2,0L2,3.5Z" fill="#6a6c6e"/></svg></div>
<div style="left:1461px;top:1047px;width:15px;height:15px;background:linear-gradient(180deg,#fff,#f5f5f5);border:1px solid #b9b9b9"><svg class="i" width="1" height="1" style="left:7px;top:6.5px"><path d="M-2,-3.5L2,0L-2,3.5Z" fill="#6a6c6e"/></svg></div>
<div style="left:1304px;top:1047px;width:28px;height:15px;background:linear-gradient(180deg,#fff,#f7f7f7);border:1px solid #b9b9b9"></div>
<div style="left:1476px;top:1048px;width:13px;height:13px;background:#eff0f1"></div>
<div style="left:975px;top:576px;width:18px;height:2px;background-image:radial-gradient(circle at 1px 1px,#a8a9aa .55px,transparent .95px);background-size:3px 2px"></div>
<div style="left:975px;top:1065px;width:18px;height:2px;background-image:radial-gradient(circle at 1px 1px,#a8a9aa .55px,transparent .95px);background-size:3px 2px"></div>
<div style="left:467px;top:672px;width:2px;height:18px;background-image:radial-gradient(circle at 1px 1px,#a8a9aa .55px,transparent .95px);background-size:2px 3px"></div>
<div style="left:1495px;top:672px;width:2px;height:18px;background-image:radial-gradient(circle at 1px 1px,#a8a9aa .55px,transparent .95px);background-size:2px 3px"></div>
<div style="left:469px;top:1069px;width:1024px;height:159px;border:1px solid #b7b8b9;background:#fff"></div>
<div class="hd" style="left:470px;top:1070px;width:1022px;height:22px;"></div>
<div style="left:537px;top:1071px;width:1px;height:20px;background:#c9c9c9;box-shadow:1px 0 0 #fff"></div>
<div style="left:583px;top:1071px;width:1px;height:20px;background:#c9c9c9;box-shadow:1px 0 0 #fff"></div>
<div style="left:881px;top:1071px;width:1px;height:20px;background:#c9c9c9;box-shadow:1px 0 0 #fff"></div>
<div style="left:1055px;top:1071px;width:1px;height:20px;background:#c9c9c9;box-shadow:1px 0 0 #fff"></div>
<div style="left:1111px;top:1071px;width:1px;height:20px;background:#c9c9c9;box-shadow:1px 0 0 #fff"></div>
<svg class="i" width="15" height="15" style="left:472.5px;top:1073.5px;"><use href="#taskhd"/></svg>
<svg class="i" width="16" height="16" style="left:540px;top:1073px"><path d="M1,8H15M8,1V15" stroke="#3b3f42" stroke-width="1.1"/></svg>
<div class="t" style="left:586px;top:1071.3px;font-size:13.6px;letter-spacing:0.06px;">Summary</div>
<div class="t" style="left:884.3px;top:1071.3px;font-size:13.6px;letter-spacing:-0.061px;">Filename</div>
<div class="t" style="left:1058px;top:1071.3px;font-size:13.6px;letter-spacing:-0.062px;">Line</div>
<svg class="i" width="1" height="1" style="left:872px;top:1079px"><path d="M-3.5,-2L0,2L3.5,-2Z" fill="#6a6c6e"/></svg>
<svg class="i" width="1" height="1" style="left:480px;top:1101.5px"><path d="M-4,-2L0,2L4,-2Z" fill="#6e7173"/></svg>
<div class="t" style="left:493.3px;top:1091.5px;text-decoration:underline;text-underline-offset:2px;font-size:13.6px;letter-spacing:-0.2px;">Extracted Tasks</div>
<div class="sel" style="left:470px;top:1110px;width:1022px;height:20px;"></div>
<div style="left:510px;top:1130px;width:602px;height:20px;background:#a0ffa0"></div>
<svg class="i" width="15" height="15" style="left:587.5px;top:1112px;"><use href="#warn16s"/></svg>
<svg class="i" width="15" height="15" style="left:587.5px;top:1132px;"><use href="#warn16"/></svg>
<div class="t" style="left:609.6px;top:1110px;font-weight:bold;letter-spacing:0;color:#fcfcfc">TODO: add .desktop files for the eric tools</div>
<div class="t" style="left:885.3px;top:1110px;font-weight:bold;letter-spacing:0;color:#fcfcfc">setup.py</div>
<div class="t" style="left:1060px;top:1110px;width:48px;font-weight:bold;letter-spacing:0;color:#fcfcfc;text-align:right">71</div>
<div class="t" style="left:609.6px;top:1130px;font-weight:bold;letter-spacing:0;">TODO: release - reenable redirection</div>
<div class="t" style="left:885.3px;top:1130px;font-weight:bold;font-size:13.33px;letter-spacing:0.367px;">eric7/UI/UserInterface.py</div>
<div class="t" style="left:1060px;top:1130px;width:48px;font-weight:bold;letter-spacing:0;text-align:right">671</div>
<div class="gs" style="left:469px;top:1231px;width:1024px;height:36px;"></div>
<div style="left:509px;top:1233px;width:32px;height:32px;background:#173a10"></div>
<svg class="i" width="28" height="28" style="left:473px;top:1235px;"><use href="#bb_shell"/></svg>
<svg class="i" width="28" height="28" style="left:511px;top:1235px;"><use href="#bb_task"/></svg>
<svg class="i" width="28" height="28" style="left:549px;top:1235px;"><use href="#bb_log"/></svg>
<svg class="i" width="28" height="28" style="left:587px;top:1235px;"><use href="#bb_pi"/></svg>
<svg class="i" width="28" height="28" style="left:625px;top:1235px;"><use href="#bb_clock"/></svg>
<svg class="i" width="28" height="28" style="left:663px;top:1235px;"><use href="#bb_trans"/></svg>
<div class="t" style="left:1654.8px;top:96px;font-size:13.6px;letter-spacing:-0.012px;">Code Info Provider:</div>
<div style="left:1778px;top:93px;width:271px;height:26px;border:1px solid #b9babb;border-radius:3px;background:linear-gradient(180deg,#fdfdfd,#f2f3f3)"></div>
<div class="t" style="left:1782.6px;top:96px;font-size:13.6px;letter-spacing:-0.609px;">Jedi</div>
<svg class="i" width="1" height="1" style="left:2037px;top:106px"><path d="M-4,-2L0,2.4L4,-2Z" fill="#6a6c6e"/></svg>
<div style="left:1500px;top:125px;width:549px;height:26px;border:1px solid #b9babb;border-radius:3px;background:#fff"></div>
<div class="t" style="left:1503.5px;top:128px;font-size:13.6px;letter-spacing:0.213px;">settingsDir</div>
<div style="left:1500px;top:157px;width:549px;height:1006px;background:#fff"></div>
<div style="left:1500px;top:157px;width:549px;height:36px;background:linear-gradient(180deg,#8a7a49 0%,#b09c63 45%,#e2c87c 100%)"></div>
<div class="t" style="left:1505.5px;top:160.5px;font-size:18.7px;color:#f5f5f5;line-height:28px;height:28px;letter-spacing:0.205px;text-shadow:0 1px 1px rgba(60,50,20,.5)">os.makedirs</div>
<div style="left:1511px;top:203px;width:526px;height:63px;background:#fef3d8;border:1px solid #dcd6c6;border-radius:5px;box-shadow:0 1px 4px rgba(0,0,0,.28)"></div>
<div class="t" style="left:1522.3px;top:211px;font-family:'Liberation Serif',serif;font-size:16.4px;line-height:22px;height:22px;color:#000"><b style="letter-spacing:0.011px">Definition:</b> <span style="font-family:'Liberation Mono',monospace;font-size:9.9px;letter-spacing:0;position:relative;top:-1.4px">os.makedirs</span></div>
<div class="t" style="left:1522.3px;top:237.4px;font-family:'Liberation Serif',serif;font-size:16.4px;letter-spacing:0.098px;line-height:22px;height:22px;color:#000"><b style="letter-spacing:-0.207px">Note:</b> Present in <i>os</i> module</div>
<div class="t" style="left:1510px;top:278.9px;font-family:'Liberation Serif',serif;font-size:16.4px;letter-spacing:-0.169px;color:#000;line-height:20px">makedirs(name: AnyPath, mode: int=..., exist_ok: bool=...) -&gt; None</div>
<div class="t" style="left:1510px;top:317.0px;font-family:'Liberation Serif',serif;font-size:16.4px;letter-spacing:-0.146px;color:#000;line-height:20px">makedirs(name [, mode=0o777][, exist_ok=False])</div>
<div class="t" style="left:1510px;top:355.1px;font-family:'Liberation Serif',serif;font-size:16.4px;letter-spacing:0.133px;color:#000;line-height:20px">Super-mkdir; create a leaf directory and all intermediate ones. Works like</div>
<div class="t" style="left:1510px;top:374.2px;font-family:'Liberation Serif',serif;font-size:16.4px;letter-spacing:0.151px;color:#000;line-height:20px">mkdir, except that any intermediate path segment (not just the rightmost)</div>
<div class="t" style="left:1510px;top:393.2px;font-family:'Liberation Serif',serif;font-size:16.4px;letter-spacing:0.092px;color:#000;line-height:20px">will be created if it does not exist. If the target directory already</div>
<div class="t" style="left:1510px;top:412.3px;font-family:'Liberation Serif',serif;font-size:16.4px;letter-spacing:-0.048px;color:#000;line-height:20px">exists, raise an OSError if exist_ok is False. Otherwise no exception is</div>
<div class="t" style="left:1510px;top:431.3px;font-family:'Liberation Serif',serif;font-size:16.4px;letter-spacing:0.02px;color:#000;line-height:20px">raised. This is recursive.</div>
<div style="left:1515px;top:1165px;width:505px;height:11px;background:#c1c1c1"></div>
<svg class="i" width="1" height="1" style="left:1506.5px;top:1170.5px"><path d="M2,-3.5L-2,0L2,3.5Z" fill="#a0a0a0"/></svg>
<svg class="i" width="1" height="1" style="left:2041.5px;top:1170.5px"><path d="M-2,-3.5L2,0L-2,3.5Z" fill="#505050"/></svg>
<div class="t" style="left:1500px;top:1187px;font-size:13.6px;letter-spacing:-0.142px;">Find:</div>
<div style="left:1536px;top:1184px;width:513px;height:26px;border:1px solid #b9babb;border-radius:3px;background:#fff"></div>
<div style="left:2028px;top:1185px;width:1px;height:24px;background:#c9caca"></div>
<svg class="i" width="1" height="1" style="left:2037.5px;top:1197px"><path d="M-4,-2L0,2.4L4,-2Z" fill="#6a6c6e"/></svg>
<div style="left:1500px;top:1221px;width:14px;height:14px;border:1px solid #b0b1b2;border-radius:2px;background:#fff"></div>
<div class="t" style="left:1519.4px;top:1218px;font-size:13.6px;letter-spacing:-0.192px;">Match case</div>
<div style="left:2001px;top:1216px;width:24px;height:23px;border:1px solid #c4c5c6;border-radius:3px;background:linear-gradient(180deg,#fbfbfb,#f0f1f1)"><svg class="i" width="22" height="22" style="left:0;top:-1px"><path d="M13.5,5L8,11L13.5,17" fill="none" stroke="#7b7d7f" stroke-width="1.1"/></svg></div>
<div style="left:2025px;top:1216px;width:24px;height:23px;border:1px solid #c4c5c6;border-radius:3px;background:linear-gradient(180deg,#fbfbfb,#f0f1f1)"><svg class="i" width="22" height="22" style="left:0;top:-1px"><path d="M9.5,5L15,11L9.5,17" fill="none" stroke="#7b7d7f" stroke-width="1.1"/></svg></div>
<div class="gs" style="left:2055px;top:90px;width:36px;height:1177px;"></div>
<div style="left:2057px;top:130px;width:32px;height:32px;background:#173a10"></div>
<svg class="i" width="28" height="28" style="left:2059px;top:94px;"><use href="#rs_bug"/></svg>
<svg class="i" width="28" height="28" style="left:2059px;top:132px;"><use href="#rs_doc"/></svg>
<svg class="i" width="28" height="28" style="left:2059px;top:170px;"><use href="#rs_help"/></svg>
<svg class="i" width="28" height="28" style="left:2059px;top:208px;"><use href="#rs_web"/></svg>
<svg class="i" width="28" height="28" style="left:2059px;top:246px;"><use href="#rs_py"/></svg>
<svg class="i" width="28" height="28" style="left:2059px;top:284px;"><use href="#rs_pip"/></svg>
<svg class="i" width="28" height="28" style="left:2059px;top:322px;"><use href="#rs_mpy"/></svg>
<svg class="i" width="28" height="28" style="left:2059px;top:360px;"><use href="#rs_mqtt"/></svg>
<div style="left:0px;top:1294px;width:2093px;height:2px;background:#dedfe0"></div>
<div style="left:2091px;top:0px;width:2px;height:1296px;background:#e0e1e2"></div>
<div style="left:0px;top:0px;width:2093px;height:1px;background:#e5e6e7"></div>
<svg class="i" width="20" height="20" style="left:1362px;top:1270.5px;"><use href="#py16"/></svg>
<div class="t" style="left:1389.4px;top:1271.5px;font-size:13.6px;letter-spacing:0.306px;">utf-8</div>
<svg class="i" width="19" height="20" style="left:1426px;top:1270.5px;"><use href="#tux"/></svg>
<div class="t" style="left:1452.6px;top:1271.5px;font-size:13.6px;letter-spacing:0.59px;">rw</div>
<div class="t" style="left:1475px;top:1271.5px;font-size:13.6px;letter-spacing:-0.112px;">Line:</div>
<div class="t" style="left:1500px;top:1271.5px;width:35px;font-size:13.7px;text-align:right">671</div>
<div class="t" style="left:1543.4px;top:1271.5px;font-size:13.6px;letter-spacing:-0.46px;">Pos:</div>
<div class="t" style="left:1560px;top:1271.5px;width:32.5px;font-size:13.7px;text-align:right">0</div>
<div class="t" style="left:1590px;top:1271.5px;width:30.5px;font-size:13.7px;text-align:right">0</div>
<svg class="i" width="15" height="15" style="left:1627.5px;top:1273.5px;"><use href="#zoomout"/></svg>
<div style="left:1650px;top:1278px;width:158px;height:6px;border:1px solid #b4b5b6;border-radius:3px;background:#e6e7e8"></div>
<div style="left:1650px;top:1278px;width:54px;height:6px;border:1px solid #3d9bd6;border-radius:3px;background:#7cc4ee"></div>
<div style="left:1697px;top:1274px;width:14px;height:14px;border:1px solid #a9abad;border-radius:50%;background:linear-gradient(180deg,#fff,#f1f2f2);box-shadow:0 1px 1px rgba(0,0,0,.15)"></div>
<svg class="i" width="15" height="15" style="left:1815px;top:1273.5px;"><use href="#zoomin"/></svg>
<svg class="i" width="15" height="15" style="left:1837.5px;top:1273.5px;"><use href="#zoomreset"/></svg>
<div style="left:1860px;top:1271px;width:17px;height:20px;background:#00ff00"></div>
<div class="t" style="left:1883.3px;top:1271.5px;font-size:13.5px;letter-spacing:0.056px;">eric7 / 8803:bf6eff477756</div>
<svg class="i" width="22" height="22" style="left:2045px;top:1270px;"><use href="#net"/></svg>
<div style="left:2078px;top:1282px;width:12px;height:12px;background-image:radial-gradient(circle,#b5b6b7 .6px,transparent .9px);background-size:3px 3px;clip-path:polygon(100% 0,100% 100%,0 100%)"></div>
</body></html>
